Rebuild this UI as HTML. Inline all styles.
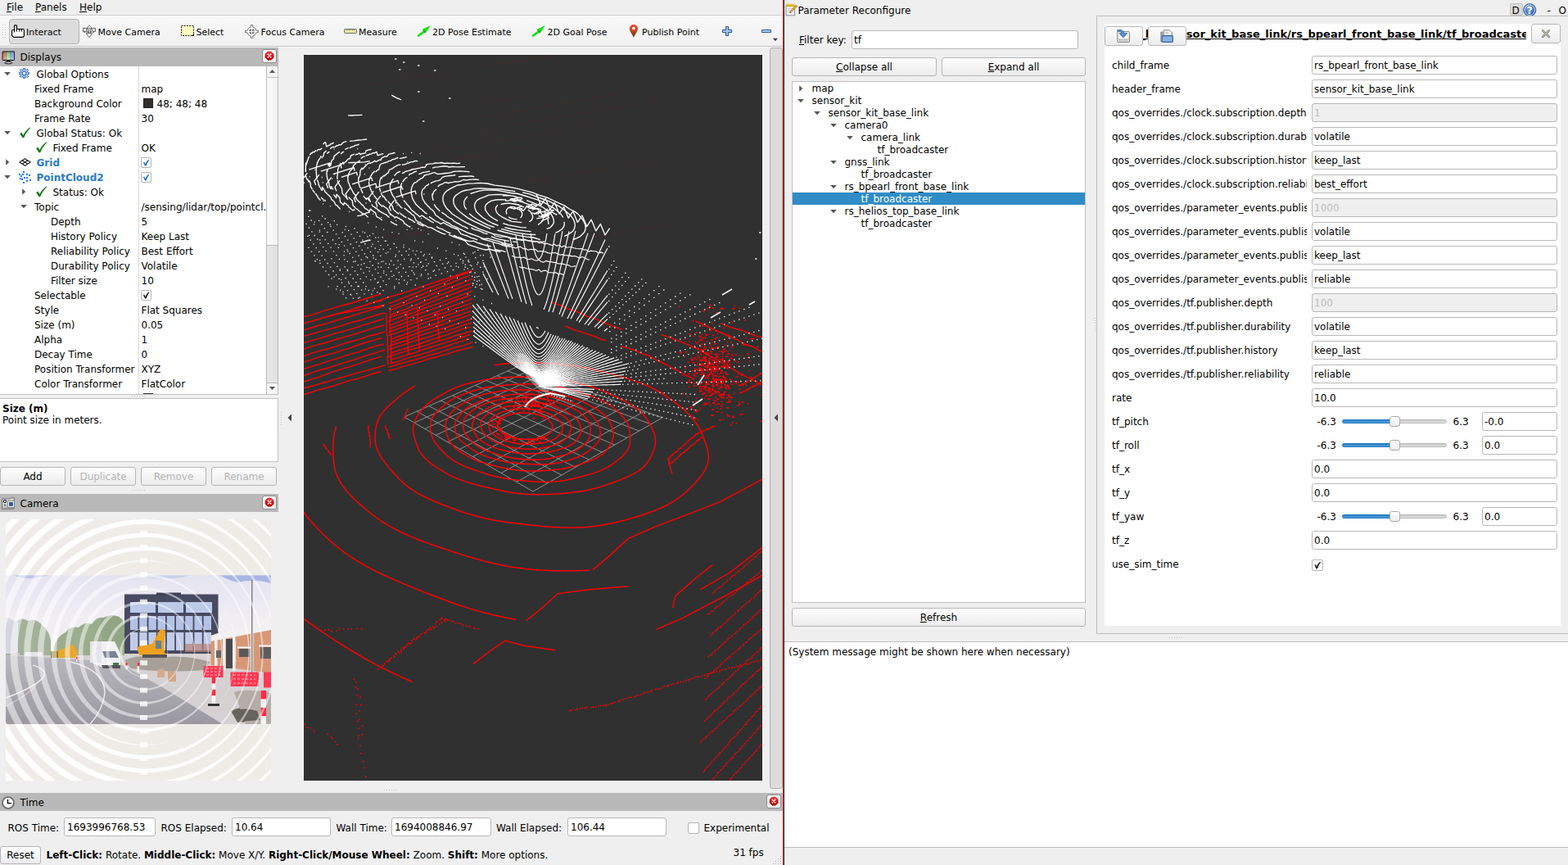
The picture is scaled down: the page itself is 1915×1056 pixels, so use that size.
<!DOCTYPE html>
<html><head><meta charset="utf-8"><title>RViz</title>
<style>
*{box-sizing:border-box;margin:0;padding:0}
html,body{width:1915px;height:1056px;overflow:hidden;background:#efefef}
body{font-family:"DejaVu Sans","Liberation Sans",sans-serif;font-size:12px;color:#000;position:relative;line-height:15px}
.a{position:absolute}
.t{position:absolute;white-space:nowrap;height:16px;line-height:16px}
.hdr{position:absolute;background:#b9b9b9;height:22px}
.btn{position:absolute;border:1px solid #b6b6b6;border-radius:3px;background:linear-gradient(#fdfdfd,#ececec);text-align:center;white-space:nowrap}
.btn.dis{color:#b4b4b4}
.inp{position:absolute;border:1px solid #b8b8b8;border-radius:3px;background:#fff;white-space:nowrap;overflow:hidden;padding-left:2px}
.inp.dis{background:#efefef;color:#bebebe}
.cb{position:absolute;width:13px;height:13px;border:1px solid #b4b4b4;border-radius:2px;background:#fff}
.closeb{position:absolute;width:17px;height:17px;border:1px solid #aaa;border-radius:3px;background:linear-gradient(#fff,#ececec)}
u{text-decoration:underline;text-underline-offset:1px}
b{font-weight:bold}
</style></head><body>
<div class="a" style="left:0;top:18px;width:956px;height:1px;background:#cfcfcf"></div>
<div class="t" style="left:8px;top:1px;"><u>F</u>ile</div>
<div class="t" style="left:43px;top:1px;"><u>P</u>anels</div>
<div class="t" style="left:97px;top:1px;"><u>H</u>elp</div>
<div class="a" style="left:0;top:19px;width:956px;height:37px;background:linear-gradient(#f8f8f8,#f1f1f1)"></div>
<div class="a" style="left:0;top:56px;width:956px;height:1px;background:#c3c3c3"></div>
<div class="a" style="left:0;top:57px;width:956px;height:1px;background:#f6f6f6"></div>
<svg class="a" style="left:2px;top:29px" width="6" height="18"><rect x="1" y="1" width="1" height="1" fill="#c4c4c4"/><rect x="4" y="1" width="1" height="1" fill="#c4c4c4"/><rect x="1" y="4" width="1" height="1" fill="#c4c4c4"/><rect x="4" y="4" width="1" height="1" fill="#c4c4c4"/><rect x="1" y="7" width="1" height="1" fill="#c4c4c4"/><rect x="4" y="7" width="1" height="1" fill="#c4c4c4"/><rect x="1" y="10" width="1" height="1" fill="#c4c4c4"/><rect x="4" y="10" width="1" height="1" fill="#c4c4c4"/><rect x="1" y="13" width="1" height="1" fill="#c4c4c4"/><rect x="4" y="13" width="1" height="1" fill="#c4c4c4"/><rect x="1" y="16" width="1" height="1" fill="#c4c4c4"/><rect x="4" y="16" width="1" height="1" fill="#c4c4c4"/></svg>
<div class="a" style="left:11px;top:23px;width:86px;height:31px;background:#dcdcdc;border:1px solid #b4b4b4;border-radius:4px"></div>
<div class="t" style="left:32px;top:31.700000000000003px;font-size:11px">Interact</div>
<div class="t" style="left:119.5px;top:31.700000000000003px;font-size:11px">Move Camera</div>
<div class="t" style="left:239.5px;top:31.700000000000003px;font-size:11px">Select</div>
<div class="t" style="left:318.5px;top:31.700000000000003px;font-size:11px">Focus Camera</div>
<div class="t" style="left:438px;top:31.700000000000003px;font-size:11px">Measure</div>
<div class="t" style="left:528px;top:31.700000000000003px;font-size:11px">2D Pose Estimate</div>
<div class="t" style="left:668.5px;top:31.700000000000003px;font-size:11px">2D Goal Pose</div>
<div class="t" style="left:784px;top:31.700000000000003px;font-size:11px">Publish Point</div>
<svg class="a" style="left:14px;top:30px" width="16" height="17" ><path d="M3.5 9.5 V1.8 Q3.5 0.6 5 0.6 Q6.5 0.6 6.5 1.8 V5.5 H13.8 Q15.4 5.5 15.4 7 V13.8 L14 15.4 H2.6 L0.6 13.4 V7.6 Q0.6 6.5 1.8 6.5 H3.5" fill="#fff" stroke="#000" stroke-width="1.15" stroke-linejoin="round"/><path d="M6.5 5.5 V8.6 M9.5 5.8 V8.6 M12.5 5.8 V8.6" stroke="#000" stroke-width="1" fill="none"/></svg>
<svg class="a" style="left:101px;top:30px" width="16" height="17" ><path d="M8 0.8 L11.6 5 H9.4 V11 H11.8 L8 15.6 L4.2 11 H6.6 V5 H4.4 Z" fill="#d6d6d6" stroke="#666" stroke-width="0.9"/><path d="M8 1.6 L10.2 4.4 H5.8 Z M8 14.6 L10.4 11.6 H5.6 Z" fill="#fff"/><ellipse cx="8" cy="6.6" rx="4.6" ry="2.4" fill="none" stroke="#333" stroke-width="1" stroke-dasharray="1.6 1"/><path d="M0.6 4.4 H3.4 L4.6 5.4 V7.6 L3.4 8.4 H0.6 Z M15.4 4.4 H12.6 L11.4 5.4 V7.6 L12.6 8.4 H15.4 Z" fill="#fff" stroke="#444" stroke-width="0.9"/><path d="M0.8 8.4 Q8 12.4 15.2 8.4" fill="none" stroke="#444" stroke-width="1" stroke-dasharray="2 1"/></svg>
<svg class="a" style="left:221px;top:30px" width="17" height="15" ><rect x="0.5" y="1.5" width="15" height="12" fill="#fffcc0" stroke="#222" stroke-width="1" stroke-dasharray="2 1.2"/><path d="M16 11 V14 H13 Z" fill="#000"/></svg>
<svg class="a" style="left:299px;top:30px" width="17" height="17" ><path d="M7.3 0.6 H9.7 V3 A5.6 5.6 0 0 1 14 7.3 H16.4 V9.7 H14 A5.6 5.6 0 0 1 9.7 14 V16.4 H7.3 V14 A5.6 5.6 0 0 1 3 9.7 H0.6 V7.3 H3 A5.6 5.6 0 0 1 7.3 3 Z" fill="#fff" stroke="#6e6e6e" stroke-width="1"/><circle cx="8.5" cy="8.5" r="3.4" fill="#777"/><path d="M8.5 4 V13 M4 8.5 H13" stroke="#fff" stroke-width="0.9"/><circle cx="8.5" cy="8.5" r="3.4" fill="none" stroke="#fff" stroke-width="0.5" stroke-dasharray="1 1"/></svg>
<svg class="a" style="left:419px;top:34px" width="18" height="8" ><rect x="0.3" y="0.3" width="17.4" height="7.4" rx="1.5" fill="#fff" opacity="0.9"/><rect x="1.5" y="1.5" width="15" height="5" rx="0.8" fill="#f3eba8" stroke="#666" stroke-width="1"/><path d="M3.5 2 V3.6 M5.5 2 V3.6 M7.5 2 V3.6 M9.5 2 V3.6 M11.5 2 V3.6 M13.5 2 V3.6" stroke="#777" stroke-width="0.8"/></svg>
<svg class="a" style="left:510px;top:30px" width="17" height="15" ><path d="M0.8 13.8 L8.2 8.4" stroke="#0be60b" stroke-width="2.6" stroke-linecap="round"/><path d="M15.8 1 L6.6 5.4 L10.2 9.8 Z" fill="#08e808"/><path d="M6.6 5.4 L10.2 9.8 L9 10.2 L6 6.2 Z" fill="#0a8a0a"/></svg>
<svg class="a" style="left:650px;top:30px" width="17" height="15" ><path d="M0.8 13.8 L8.2 8.4" stroke="#0be60b" stroke-width="2.6" stroke-linecap="round"/><path d="M15.8 1 L6.6 5.4 L10.2 9.8 Z" fill="#08e808"/><path d="M6.6 5.4 L10.2 9.8 L9 10.2 L6 6.2 Z" fill="#0a8a0a"/></svg>
<svg class="a" style="left:768px;top:29px" width="12" height="18" ><defs><linearGradient id="pg" x1="0" y1="0" x2="0" y2="1"><stop offset="0" stop-color="#ec4a2c"/><stop offset="0.45" stop-color="#c84a2a"/><stop offset="1" stop-color="#4a3808"/></linearGradient></defs><path d="M5.9 16.8 C4.6 13 0.8 9.6 0.8 6 A5.1 5.1 0 0 1 11 6 C11 9.6 7.2 13 5.9 16.8 Z" fill="url(#pg)"/><circle cx="5.9" cy="5.6" r="1.8" fill="#fff"/></svg>
<svg class="a" style="left:881px;top:31px" width="14" height="14" ><path d="M5.5 1.5 H8.5 V5.5 H12.5 V8.5 H8.5 V12.5 H5.5 V8.5 H1.5 V5.5 H5.5 Z" fill="#a8c6ea" stroke="#2d5fa5" stroke-width="1.1" stroke-linejoin="round"/></svg>
<svg class="a" style="left:929px;top:35px" width="14" height="6" ><rect x="1.5" y="1.5" width="11" height="3" rx="0.6" fill="#a8c6ea" stroke="#2d5fa5" stroke-width="1.1"/></svg>
<svg class="a" style="left:943px;top:46px" width="8" height="5" ><path d="M0.8 0.8 H7 L3.9 4.2 Z" fill="#444"/></svg>
<div class="hdr" style="left:0;top:58px;width:340px;height:23px"></div>
<div class="t" style="left:24.5px;top:61.5px;">Displays</div>
<svg class="a" style="left:1.5px;top:61.5px" width="17" height="17" ><defs><linearGradient id="mr" x1="0" y1="0" x2="0.3" y2="1"><stop offset="0" stop-color="#b86060"/><stop offset="1" stop-color="#f49a9a"/></linearGradient><linearGradient id="mg" x1="0" y1="0" x2="0.3" y2="1"><stop offset="0" stop-color="#68b868"/><stop offset="1" stop-color="#a6f4a6"/></linearGradient><linearGradient id="mb" x1="0" y1="0" x2="0.3" y2="1"><stop offset="0" stop-color="#8282cc"/><stop offset="1" stop-color="#b6b6ff"/></linearGradient></defs><rect x="0.6" y="0.6" width="15.4" height="11.4" rx="1.4" fill="#000"/><rect x="1.4" y="1.4" width="4.4" height="9.6" fill="url(#mr)"/><rect x="5.8" y="1.4" width="5" height="9.6" fill="url(#mg)"/><rect x="10.8" y="1.4" width="4.4" height="9.6" fill="url(#mb)"/><path d="M7 12 H9.6 L10 13.4 H6.6 Z" fill="#000"/><ellipse cx="8.3" cy="14.6" rx="4.6" ry="1.3" fill="#eee" stroke="#000" stroke-width="1"/></svg>
<div class="a" style="left:320px;top:60px;width:18px;height:17px;border:1px solid #8c8c8c;border-radius:3px;background:linear-gradient(#fff,#efefef)"></div>
<svg class="a" style="left:323px;top:62px" width="12" height="12" ><defs><linearGradient id="cg" x1="0" y1="0" x2="0" y2="1"><stop offset="0" stop-color="#e85050"/><stop offset="0.5" stop-color="#d41818"/><stop offset="1" stop-color="#b80000"/></linearGradient></defs><path d="M4 1 H8.2 L11.2 4 V8.2 L8.2 11.2 H4 L1 8.2 V4 Z" fill="url(#cg)" stroke="#c01010" stroke-width="0.6"/><path d="M4.3 4.3 L7.9 7.9 M7.9 4.3 L4.3 7.9" stroke="#f4e6e6" stroke-width="1.5" stroke-linecap="round"/></svg>
<div class="a" style="left:0;top:81px;width:340px;height:401px;background:#fff;border-bottom:1px solid #c0c0c0;border-right:1px solid #c0c0c0"></div>
<div class="a" style="left:169px;top:81px;width:1px;height:400px;background:#d8d8d8"></div>
<div class="a" style="left:325px;top:81px;width:15px;height:400px;background:linear-gradient(90deg,#fbfbfb,#f0f0f0);border-left:1px solid #bebebe;border-right:1px solid #bebebe"></div>
<div class="a" style="left:325px;top:80px;width:15px;height:15px;background:#f6f6f6;border:1px solid #bebebe"></div>
<div class="a" style="left:325px;top:467px;width:15px;height:15px;background:#f6f6f6;border:1px solid #bebebe"></div>
<div class="a" style="left:325px;top:299px;width:15px;height:169px;background:linear-gradient(90deg,#e8e8e8,#e0e0e0);border:1px solid #b8b8b8"></div>
<svg class="a" style="left:325px;top:81px" width="15" height="400"><path d="M4 8 L7.5 4 L11 8 Z" fill="#555"/><path d="M4 391 L7.5 395 L11 391 Z" fill="#555"/></svg>
<div class="t" style="left:44.5px;top:82.5px;">Global Options</div>
<svg class="a" style="left:3.5px;top:85px" width="10" height="10"><path d="M1.2 3 L8.8 3 L5 7.2 Z" fill="#555"/></svg>
<svg class="a" style="left:22.9px;top:82.9px" width="13" height="13" ><path d="M5.42 0.19 L7.58 0.19 L7.57 1.92 L8.98 2.51 L10.19 1.27 L11.73 2.81 L10.49 4.02 L11.08 5.43 L12.81 5.42 L12.81 7.58 L11.08 7.57 L10.49 8.98 L11.73 10.19 L10.19 11.73 L8.98 10.49 L7.57 11.08 L7.58 12.81 L5.42 12.81 L5.43 11.08 L4.02 10.49 L2.81 11.73 L1.27 10.19 L2.51 8.98 L1.92 7.57 L0.19 7.58 L0.19 5.42 L1.92 5.43 L2.51 4.02 L1.27 2.81 L2.81 1.27 L4.02 2.51 L5.43 1.92 Z" fill="#a9c4e6" stroke="#2d6cc0" stroke-width="1" stroke-linejoin="round"/><circle cx="6.5" cy="6.5" r="2.3" fill="#fff" stroke="#2d6cc0" stroke-width="1.1"/></svg>
<div class="t" style="left:42px;top:100.5px;">Fixed Frame</div>
<div class="t" style="left:172.5px;top:100.5px;">map</div>
<div class="t" style="left:42px;top:118.5px;">Background Color</div>
<div class="t" style="left:191.5px;top:118.5px;">48; 48; 48</div>
<div class="a" style="left:175px;top:120px;width:12px;height:12px;background:#303030;border:1px solid #222"></div>
<div class="t" style="left:42px;top:136.5px;">Frame Rate</div>
<div class="t" style="left:172.5px;top:136.5px;">30</div>
<div class="t" style="left:44.5px;top:154.5px;">Global Status: Ok</div>
<svg class="a" style="left:3.5px;top:157px" width="10" height="10"><path d="M1.2 3 L8.8 3 L5 7.2 Z" fill="#555"/></svg>
<svg class="a" style="left:22.5px;top:155px" width="15" height="14"><path d="M1.2 8.2 L3.2 6.6 L5.4 10 C7.5 5.8 10.3 2.6 13.8 0.6 L14.2 1.2 C10.8 4.2 8.3 8 6.2 13.2 L4.6 13.2 Z" fill="#157a15"/></svg>
<div class="t" style="left:64.5px;top:172.5px;">Fixed Frame</div>
<div class="t" style="left:172.5px;top:172.5px;">OK</div>
<svg class="a" style="left:42.5px;top:173px" width="15" height="14"><path d="M1.2 8.2 L3.2 6.6 L5.4 10 C7.5 5.8 10.3 2.6 13.8 0.6 L14.2 1.2 C10.8 4.2 8.3 8 6.2 13.2 L4.6 13.2 Z" fill="#157a15"/></svg>
<div class="t" style="left:44.5px;top:190.5px;font-weight:bold;color:#2a7bc8;">Grid</div>
<svg class="a" style="left:3.5px;top:193px" width="10" height="10"><path d="M3.2 1.2 L7.2 5 L3.2 8.8 Z" fill="#555"/></svg>
<svg class="a" style="left:22.5px;top:192.5px" width="15" height="10" ><path d="M7.5 0.7 L14.2 5 L7.5 9.3 L0.8 5 Z M4.1 2.85 L10.9 7.15 M10.9 2.85 L4.1 7.15" fill="none" stroke="#222" stroke-width="1.2" stroke-linejoin="round"/></svg>
<div class="cb" style="left:172px;top:191.5px"></div><svg class="a" style="left:172px;top:191.5px" width="13" height="13"><path d="M3 6.2 L4.2 5.4 L5.6 8.2 C6.6 5.6 8 3.8 9.8 2.6 L10.4 3.2 C8.8 5 7.6 7.4 6.6 10.6 L5 10.6 Z" fill="#2a6fc0"/></svg>
<div class="t" style="left:44.5px;top:208.5px;font-weight:bold;color:#2a7bc8;">PointCloud2</div>
<svg class="a" style="left:3.5px;top:211px" width="10" height="10"><path d="M1.2 3 L8.8 3 L5 7.2 Z" fill="#555"/></svg>
<svg class="a" style="left:22px;top:208px" width="17" height="17" ><rect x="5.9" y="0.9" width="2" height="2" fill="#0a78ff"/><rect x="0.9" y="3.9" width="2" height="2" fill="#0a78ff"/><rect x="5.0" y="3.9" width="2" height="2" fill="#0a78ff"/><rect x="9.9" y="3.9" width="2" height="2" fill="#0a78ff"/><rect x="13.0" y="5.0" width="2" height="2" fill="#0a78ff"/><rect x="3.0" y="6.0" width="2" height="2" fill="#0a78ff"/><rect x="7.0" y="8.0" width="2" height="2" fill="#0a78ff"/><rect x="10.0" y="8.0" width="2" height="2" fill="#0a78ff"/><rect x="1.8" y="9.0" width="2" height="2" fill="#0a78ff"/><rect x="4.0" y="10.0" width="2" height="2" fill="#0a78ff"/><rect x="14.0" y="11.0" width="2" height="2" fill="#0a78ff"/><rect x="9.9" y="12.0" width="2" height="2" fill="#0a78ff"/><rect x="5.9" y="14.0" width="2" height="2" fill="#0a78ff"/></svg>
<div class="cb" style="left:172px;top:209.5px"></div><svg class="a" style="left:172px;top:209.5px" width="13" height="13"><path d="M3 6.2 L4.2 5.4 L5.6 8.2 C6.6 5.6 8 3.8 9.8 2.6 L10.4 3.2 C8.8 5 7.6 7.4 6.6 10.6 L5 10.6 Z" fill="#2a6fc0"/></svg>
<div class="t" style="left:64.5px;top:226.5px;">Status: Ok</div>
<svg class="a" style="left:24px;top:229px" width="10" height="10"><path d="M3.2 1.2 L7.2 5 L3.2 8.8 Z" fill="#555"/></svg>
<svg class="a" style="left:42.5px;top:227px" width="15" height="14"><path d="M1.2 8.2 L3.2 6.6 L5.4 10 C7.5 5.8 10.3 2.6 13.8 0.6 L14.2 1.2 C10.8 4.2 8.3 8 6.2 13.2 L4.6 13.2 Z" fill="#157a15"/></svg>
<div class="t" style="left:42px;top:244.5px;">Topic</div>
<div class="t" style="left:172.5px;top:244.5px;">/sensing/lidar/top/pointcl.</div>
<svg class="a" style="left:24px;top:247px" width="10" height="10"><path d="M1.2 3 L8.8 3 L5 7.2 Z" fill="#555"/></svg>
<div class="t" style="left:62px;top:262.5px;">Depth</div>
<div class="t" style="left:172.5px;top:262.5px;">5</div>
<div class="t" style="left:62px;top:280.5px;">History Policy</div>
<div class="t" style="left:172.5px;top:280.5px;">Keep Last</div>
<div class="t" style="left:62px;top:298.5px;">Reliability Policy</div>
<div class="t" style="left:172.5px;top:298.5px;">Best Effort</div>
<div class="t" style="left:62px;top:316.5px;">Durability Policy</div>
<div class="t" style="left:172.5px;top:316.5px;">Volatile</div>
<div class="t" style="left:62px;top:334.5px;">Filter size</div>
<div class="t" style="left:172.5px;top:334.5px;">10</div>
<div class="t" style="left:42px;top:352.5px;">Selectable</div>
<div class="cb" style="left:172px;top:353.5px"></div><svg class="a" style="left:172px;top:353.5px" width="13" height="13"><path d="M3 6.2 L4.2 5.4 L5.6 8.2 C6.6 5.6 8 3.8 9.8 2.6 L10.4 3.2 C8.8 5 7.6 7.4 6.6 10.6 L5 10.6 Z" fill="#111"/></svg>
<div class="t" style="left:42px;top:370.5px;">Style</div>
<div class="t" style="left:172.5px;top:370.5px;">Flat Squares</div>
<div class="t" style="left:42px;top:388.5px;">Size (m)</div>
<div class="t" style="left:172.5px;top:388.5px;">0.05</div>
<div class="t" style="left:42px;top:406.5px;">Alpha</div>
<div class="t" style="left:172.5px;top:406.5px;">1</div>
<div class="t" style="left:42px;top:424.5px;">Decay Time</div>
<div class="t" style="left:172.5px;top:424.5px;">0</div>
<div class="t" style="left:42px;top:442.5px;">Position Transformer</div>
<div class="t" style="left:172.5px;top:442.5px;">XYZ</div>
<div class="t" style="left:42px;top:460.5px;">Color Transformer</div>
<div class="t" style="left:172.5px;top:460.5px;">FlatColor</div>
<div class="a" style="left:175px;top:480px;width:12px;height:1px;background:#333"></div>
<svg class="a" style="left:161px;top:483px" width="18" height="2"><rect x="0" y="0" width="1" height="1" fill="#bdbdbd"/><rect x="3" y="0" width="1" height="1" fill="#bdbdbd"/><rect x="6" y="0" width="1" height="1" fill="#bdbdbd"/><rect x="9" y="0" width="1" height="1" fill="#bdbdbd"/><rect x="12" y="0" width="1" height="1" fill="#bdbdbd"/><rect x="15" y="0" width="1" height="1" fill="#bdbdbd"/></svg>
<div class="a" style="left:0;top:486px;width:340px;height:78px;background:#fff;border:1px solid #c2c2c2;border-left:none"></div>
<div class="t" style="left:3px;top:490.5px;"><b>Size (m)</b></div>
<div class="t" style="left:3px;top:505px;">Point size in meters.</div>
<div class="btn" style="left:0px;top:570px;width:80px;height:23px;line-height:23px">Add</div>
<div class="btn dis" style="left:86px;top:570px;width:80px;height:23px;line-height:23px">Duplicate</div>
<div class="btn dis" style="left:172px;top:570px;width:80px;height:23px;line-height:23px">Remove</div>
<div class="btn dis" style="left:258px;top:570px;width:80px;height:23px;line-height:23px">Rename</div>
<svg class="a" style="left:161px;top:598px" width="18" height="2"><rect x="0" y="0" width="1" height="1" fill="#bdbdbd"/><rect x="3" y="0" width="1" height="1" fill="#bdbdbd"/><rect x="6" y="0" width="1" height="1" fill="#bdbdbd"/><rect x="9" y="0" width="1" height="1" fill="#bdbdbd"/><rect x="12" y="0" width="1" height="1" fill="#bdbdbd"/><rect x="15" y="0" width="1" height="1" fill="#bdbdbd"/></svg>
<div class="hdr" style="left:0;top:603px;width:340px"></div>
<div class="t" style="left:24.5px;top:606.5px;">Camera</div>
<svg class="a" style="left:1.5px;top:606.5px" width="17" height="16" ><defs><linearGradient id="camg" x1="0" y1="0" x2="0.6" y2="1"><stop offset="0" stop-color="#fafafa"/><stop offset="1" stop-color="#a8a8a8"/></linearGradient></defs><path d="M0.6 2 H10.5 L11.5 0.8 H15.4 V13 L14.6 14.2 H0.6 Z" fill="url(#camg)" stroke="#6e6e6e" stroke-width="1"/><rect x="7.4" y="4.4" width="8" height="8" fill="#f4f4f0" stroke="#7a7a7a" stroke-width="0.8"/><rect x="9" y="6" width="4.9" height="4.9" fill="#2a5aa4"/><circle cx="3.9" cy="5" r="1.6" fill="#fff" stroke="#000" stroke-width="1"/><rect x="3" y="9" width="2" height="1.2" fill="#444"/></svg>
<div class="a" style="left:320px;top:605px;width:18px;height:17px;border:1px solid #8c8c8c;border-radius:3px;background:linear-gradient(#fff,#efefef)"></div>
<svg class="a" style="left:323px;top:607px" width="12" height="12" ><defs><linearGradient id="cg" x1="0" y1="0" x2="0" y2="1"><stop offset="0" stop-color="#e85050"/><stop offset="0.5" stop-color="#d41818"/><stop offset="1" stop-color="#b80000"/></linearGradient></defs><path d="M4 1 H8.2 L11.2 4 V8.2 L8.2 11.2 H4 L1 8.2 V4 Z" fill="url(#cg)" stroke="#c01010" stroke-width="0.6"/><path d="M4.3 4.3 L7.9 7.9 M7.9 4.3 L4.3 7.9" stroke="#f4e6e6" stroke-width="1.5" stroke-linecap="round"/></svg>
<svg class="a" style="left:7px;top:634px" width="324" height="319" viewBox="7 634 324 319">
<defs><linearGradient id="sky" x1="0" y1="0" x2="0" y2="1"><stop offset="0" stop-color="#dcdcec"/><stop offset="0.5" stop-color="#ece8f0"/><stop offset="1" stop-color="#f0ecf0"/></linearGradient><linearGradient id="road" x1="0" y1="0" x2="0" y2="1"><stop offset="0" stop-color="#a6a4ac"/><stop offset="1" stop-color="#7e7c86"/></linearGradient><clipPath id="pc"><rect x="7" y="702.5" width="324" height="181.5"/></clipPath></defs>
<rect x="7" y="634" width="324" height="319" fill="#efece8"/>
<g clip-path="url(#pc)">
<rect x="7" y="702" width="324" height="100" fill="url(#sky)"/>
<path d="M268 702 H331 V712 Q310 706 290 711 Q278 708 268 702 Z" fill="#8fa2dc"/><path d="M172 702 H232 Q220 707 200 706 Q184 708 172 702 Z" fill="#b8c4e6"/><path d="M14 702 H60 Q40 707 30 706 Z" fill="#a8b6e0"/>
<path d="M7 800 H331 V884 H7 Z" fill="#c9c4c6"/>
<path d="M7 800 L112 806 L150 812 L200 840 L272 884 H7 Z" fill="url(#road)"/>
<path d="M7 762 Q14 756 20 760 Q26 752 34 758 Q44 754 52 764 Q60 770 62 782 L62 800 H7 Z" fill="#8a9c7c"/>
<path d="M66 790 Q70 776 80 772 Q86 764 96 766 Q104 758 112 762 Q118 752 128 754 Q136 748 146 754 Q154 760 152 776 L152 800 H66 Z" fill="#80966e"/>
<path d="M122 758 Q130 750 140 752 Q150 752 152 764 L152 790 L126 790 Z" fill="#748c62"/>
<path d="M7 753 L22 760 V798 H7 Z" fill="#c8ccd8"/>
<rect x="7" y="702" width="324" height="182" fill="#fff" opacity="0.22"/>
<rect x="152" y="725.5" width="114.5" height="73" fill="#474a60"/><rect x="191" y="723.5" width="30" height="3" fill="#3e4054"/>
<rect x="159" y="735" width="31" height="13" fill="#bccaea"/>
<rect x="193" y="735" width="31" height="13" fill="#bccaea"/>
<rect x="227" y="735" width="32" height="13" fill="#bccaea"/>
<rect x="159.0" y="752" width="9.4" height="17" fill="#b4c2e6"/><rect x="159.0" y="772" width="9.4" height="22" fill="#c2cce8"/>
<rect x="170.2" y="752" width="9.4" height="17" fill="#b4c2e6"/><rect x="170.2" y="772" width="9.4" height="22" fill="#c2cce8"/>
<rect x="181.4" y="752" width="9.4" height="17" fill="#b4c2e6"/><rect x="181.4" y="772" width="9.4" height="22" fill="#c2cce8"/>
<rect x="192.6" y="752" width="9.4" height="17" fill="#b4c2e6"/><rect x="192.6" y="772" width="9.4" height="22" fill="#c2cce8"/>
<rect x="203.8" y="752" width="9.4" height="17" fill="#b4c2e6"/><rect x="203.8" y="772" width="9.4" height="22" fill="#c2cce8"/>
<rect x="215.0" y="752" width="9.4" height="17" fill="#b4c2e6"/><rect x="215.0" y="772" width="9.4" height="22" fill="#c2cce8"/>
<rect x="226.2" y="752" width="9.4" height="17" fill="#b4c2e6"/><rect x="226.2" y="772" width="9.4" height="22" fill="#c2cce8"/>
<rect x="237.4" y="752" width="9.4" height="17" fill="#b4c2e6"/><rect x="237.4" y="772" width="9.4" height="22" fill="#c2cce8"/>
<rect x="248.6" y="752" width="9.4" height="17" fill="#b4c2e6"/><rect x="248.6" y="772" width="9.4" height="22" fill="#c2cce8"/>
<rect x="152" y="798" width="106" height="6" fill="#d8d4d4"/>
<rect x="226" y="786" width="32" height="10" fill="#b88078" opacity="0.7"/>
<path d="M257.5 776 L331 752 V822 L257.5 812 Z" fill="#d89878"/>
<path d="M257.5 776 L331 751 V769 L257.5 783 Z" fill="#f2f0f0"/>
<rect x="262" y="780.2" width="3.5" height="37.1" fill="#f0eeee"/>
<rect x="272" y="778.6" width="3.5" height="39.3" fill="#f0eeee"/>
<rect x="284" y="776.7" width="3.5" height="41.9" fill="#f0eeee"/>
<rect x="306" y="773.2" width="3.5" height="46.8" fill="#f0eeee"/>
<rect x="276" y="780" width="8" height="36" fill="#4a4a50"/><rect x="292" y="792" width="13" height="10" fill="#5a5a58"/><rect x="318" y="790" width="13" height="14" fill="#5e5e5c"/><rect x="264" y="794" width="6" height="9" fill="#666"/>
<rect x="290" y="789.5" width="16" height="2" fill="#f4f4f4"/><rect x="316" y="787.5" width="15" height="2" fill="#f4f4f4"/>
<rect x="307.3" y="708" width="1" height="113" fill="#555"/>
<path d="M152 806 Q170 798 200 802 Q230 800 256 808 L250 818 Q200 822 160 816 Z" fill="#a8a098"/>
<path d="M282 868 Q296 860 316 866 L320 880 L290 882 Z" fill="#6e6a62"/><path d="M286 845 Q300 840 331 846 V884 H300 Z" fill="#b4aca6"/><path d="M284 870 Q296 862 314 868 L318 879 L292 881 Z" fill="#66625c"/>
<path d="M167 790 L186 786 L196 768 L202 770 L200 790 L202 800 H170 Z" fill="#eda11e"/><rect x="190" y="782" width="7" height="10" fill="#6a8090"/><rect x="174" y="799" width="30" height="4" fill="#555"/>
<path d="M70 794 L78 792 L88 786 L95 796 L92 803 H64 L64 796 Z" fill="#e8a828"/><rect x="62" y="795" width="9" height="8" fill="#8a7020"/>
<path d="M110 783 H140 L147 798 V814 H123 L110 808 Z" fill="#f1f1f5"/><path d="M125 795 H141 L145 803 H128 Z" fill="#7a8494"/><rect x="110" y="783" width="14" height="26" fill="#e4e4ec"/><path d="M124 812 H147 V816 H126 Z" fill="#55555c"/><rect x="138" y="809" width="7" height="3" fill="#4a7a4a"/>
<rect x="30" y="796" width="22" height="5" rx="2" fill="#e4e4ea"/><rect x="14" y="797" width="10" height="4" fill="#c8c8d0"/>
<rect x="192" y="817" width="9" height="10" fill="#d4ab8c"/><rect x="205" y="819" width="10" height="13" fill="#d2a684"/>
<rect x="248.5" y="813" width="24" height="14" fill="#ff3854"/><rect x="281.5" y="820.5" width="34.5" height="17.5" fill="#ff3854"/><rect x="322" y="820.5" width="9" height="19" fill="#ff3854"/>
<path d="M252 816 h17 M252 820 h17 M252 824 h17 M285 824 h27 M285 829 h27 M285 834 h27" stroke="#ffb0b8" stroke-width="1.2" stroke-dasharray="3 2"/>
<rect x="258.6" y="827" width="4.6" height="33" fill="#f6f2f2"/><rect x="258.6" y="827.0" width="4.6" height="7.4" fill="#ff2a44"/><rect x="258.6" y="841.7" width="4.6" height="7.4" fill="#ff2a44"/>
<rect x="254" y="859" width="14" height="3" fill="#333"/>
<rect x="318.5" y="843" width="6.5" height="41" fill="#f6f2f2"/><rect x="318.5" y="843.0" width="6.5" height="10.4" fill="#ff2a44"/><rect x="318.5" y="863.8" width="6.5" height="10.4" fill="#ff2a44"/>
<rect x="167.5" y="809" width="2.6" height="12" fill="#f6f2f2"/><rect x="167.5" y="809.0" width="2.6" height="4.2" fill="#ff2a44"/>
<rect x="153.5" y="809" width="2.2" height="8" fill="#f6f2f2"/><rect x="153.5" y="809.0" width="2.2" height="3.5" fill="#ff2a44"/>
<rect x="93" y="802" width="1.6" height="6" fill="#f6f2f2"/><rect x="93" y="802.0" width="1.6" height="2.6" fill="#ff2a44"/>
<path d="M7 852 Q40 840 52 828 Q60 818 40 812" stroke="#f4f2f4" stroke-width="1.3" fill="none"/><path d="M7 862 Q36 848 46 834" stroke="#e8d8d0" stroke-width="1" fill="none"/><path d="M86 808 Q128 818 128 846 Q126 866 110 884" stroke="#eeeaee" stroke-width="1.4" fill="none"/>
</g>
<defs><clipPath id="pco"><path d="M7 634 H331 V702.5 H7 Z M7 884 H331 V953 H7 Z"/></clipPath></defs>
<path d="M146.1 797.0a29.4 29.4 0 1 0 58.8 0a29.4 29.4 0 1 0 -58.8 0Z M149.4 797.0a27.4 27.4 0 1 1 54.7 0a27.4 27.4 0 1 1 -54.7 0Z M129.4 797.0a46.1 46.1 0 1 0 92.2 0a46.1 46.1 0 1 0 -92.2 0Z M133.4 797.0a43.6 43.6 0 1 1 87.3 0a43.6 43.6 0 1 1 -87.3 0Z M112.7 797.0a62.8 62.8 0 1 0 125.6 0a62.8 62.8 0 1 0 -125.6 0Z M117.4 797.0a59.9 59.9 0 1 1 119.8 0a59.9 59.9 0 1 1 -119.8 0Z M96.0 797.0a79.5 79.5 0 1 0 159.0 0a79.5 79.5 0 1 0 -159.0 0Z M101.3 797.0a76.2 76.2 0 1 1 152.4 0a76.2 76.2 0 1 1 -152.4 0Z M79.3 797.0a96.2 96.2 0 1 0 192.4 0a96.2 96.2 0 1 0 -192.4 0Z M85.3 797.0a92.5 92.5 0 1 1 185.0 0a92.5 92.5 0 1 1 -185.0 0Z M62.6 797.0a112.9 112.9 0 1 0 225.8 0a112.9 112.9 0 1 0 -225.8 0Z M69.3 797.0a108.8 108.8 0 1 1 217.5 0a108.8 108.8 0 1 1 -217.5 0Z M45.9 797.0a129.6 129.6 0 1 0 259.2 0a129.6 129.6 0 1 0 -259.2 0Z M53.3 797.0a125.0 125.0 0 1 1 250.1 0a125.0 125.0 0 1 1 -250.1 0Z M29.2 797.0a146.3 146.3 0 1 0 292.6 0a146.3 146.3 0 1 0 -292.6 0Z M37.3 797.0a141.3 141.3 0 1 1 282.6 0a141.3 141.3 0 1 1 -282.6 0Z M12.5 797.0a163.0 163.0 0 1 0 326.0 0a163.0 163.0 0 1 0 -326.0 0Z M21.2 797.0a157.6 157.6 0 1 1 315.2 0a157.6 157.6 0 1 1 -315.2 0Z M-4.2 797.0a179.7 179.7 0 1 0 359.4 0a179.7 179.7 0 1 0 -359.4 0Z M4.5 797.0a174.3 174.3 0 1 1 348.6 0a174.3 174.3 0 1 1 -348.6 0Z M-20.9 797.0a196.4 196.4 0 1 0 392.8 0a196.4 196.4 0 1 0 -392.8 0Z M-12.2 797.0a191.0 191.0 0 1 1 382.0 0a191.0 191.0 0 1 1 -382.0 0Z M-37.6 797.0a213.1 213.1 0 1 0 426.2 0a213.1 213.1 0 1 0 -426.2 0Z M-28.9 797.0a207.7 207.7 0 1 1 415.4 0a207.7 207.7 0 1 1 -415.4 0Z M-54.3 797.0a229.8 229.8 0 1 0 459.6 0a229.8 229.8 0 1 0 -459.6 0Z M-45.6 797.0a224.4 224.4 0 1 1 448.8 0a224.4 224.4 0 1 1 -448.8 0Z M-71.0 797.0a246.5 246.5 0 1 0 493.0 0a246.5 246.5 0 1 0 -493.0 0Z M-62.3 797.0a241.1 241.1 0 1 1 482.2 0a241.1 241.1 0 1 1 -482.2 0Z M-87.7 797.0a263.2 263.2 0 1 0 526.4 0a263.2 263.2 0 1 0 -526.4 0Z M-79.0 797.0a257.8 257.8 0 1 1 515.6 0a257.8 257.8 0 1 1 -515.6 0Z M-104.4 797.0a279.9 279.9 0 1 0 559.8 0a279.9 279.9 0 1 0 -559.8 0Z M-95.7 797.0a274.5 274.5 0 1 1 549.0 0a274.5 274.5 0 1 1 -549.0 0Z M-121.1 797.0a296.6 296.6 0 1 0 593.2 0a296.6 296.6 0 1 0 -593.2 0Z M-112.4 797.0a291.2 291.2 0 1 1 582.4 0a291.2 291.2 0 1 1 -582.4 0Z" fill="#fff" fill-rule="evenodd" opacity="0.5" clip-path="url(#pc)"/>
<path d="M146.1 797.0a29.4 29.4 0 1 0 58.8 0a29.4 29.4 0 1 0 -58.8 0Z M149.4 797.0a27.4 27.4 0 1 1 54.7 0a27.4 27.4 0 1 1 -54.7 0Z M129.4 797.0a46.1 46.1 0 1 0 92.2 0a46.1 46.1 0 1 0 -92.2 0Z M133.4 797.0a43.6 43.6 0 1 1 87.3 0a43.6 43.6 0 1 1 -87.3 0Z M112.7 797.0a62.8 62.8 0 1 0 125.6 0a62.8 62.8 0 1 0 -125.6 0Z M117.4 797.0a59.9 59.9 0 1 1 119.8 0a59.9 59.9 0 1 1 -119.8 0Z M96.0 797.0a79.5 79.5 0 1 0 159.0 0a79.5 79.5 0 1 0 -159.0 0Z M101.3 797.0a76.2 76.2 0 1 1 152.4 0a76.2 76.2 0 1 1 -152.4 0Z M79.3 797.0a96.2 96.2 0 1 0 192.4 0a96.2 96.2 0 1 0 -192.4 0Z M85.3 797.0a92.5 92.5 0 1 1 185.0 0a92.5 92.5 0 1 1 -185.0 0Z M62.6 797.0a112.9 112.9 0 1 0 225.8 0a112.9 112.9 0 1 0 -225.8 0Z M69.3 797.0a108.8 108.8 0 1 1 217.5 0a108.8 108.8 0 1 1 -217.5 0Z M45.9 797.0a129.6 129.6 0 1 0 259.2 0a129.6 129.6 0 1 0 -259.2 0Z M53.3 797.0a125.0 125.0 0 1 1 250.1 0a125.0 125.0 0 1 1 -250.1 0Z M29.2 797.0a146.3 146.3 0 1 0 292.6 0a146.3 146.3 0 1 0 -292.6 0Z M37.3 797.0a141.3 141.3 0 1 1 282.6 0a141.3 141.3 0 1 1 -282.6 0Z M12.5 797.0a163.0 163.0 0 1 0 326.0 0a163.0 163.0 0 1 0 -326.0 0Z M21.2 797.0a157.6 157.6 0 1 1 315.2 0a157.6 157.6 0 1 1 -315.2 0Z M-4.2 797.0a179.7 179.7 0 1 0 359.4 0a179.7 179.7 0 1 0 -359.4 0Z M4.5 797.0a174.3 174.3 0 1 1 348.6 0a174.3 174.3 0 1 1 -348.6 0Z M-20.9 797.0a196.4 196.4 0 1 0 392.8 0a196.4 196.4 0 1 0 -392.8 0Z M-12.2 797.0a191.0 191.0 0 1 1 382.0 0a191.0 191.0 0 1 1 -382.0 0Z M-37.6 797.0a213.1 213.1 0 1 0 426.2 0a213.1 213.1 0 1 0 -426.2 0Z M-28.9 797.0a207.7 207.7 0 1 1 415.4 0a207.7 207.7 0 1 1 -415.4 0Z M-54.3 797.0a229.8 229.8 0 1 0 459.6 0a229.8 229.8 0 1 0 -459.6 0Z M-45.6 797.0a224.4 224.4 0 1 1 448.8 0a224.4 224.4 0 1 1 -448.8 0Z M-71.0 797.0a246.5 246.5 0 1 0 493.0 0a246.5 246.5 0 1 0 -493.0 0Z M-62.3 797.0a241.1 241.1 0 1 1 482.2 0a241.1 241.1 0 1 1 -482.2 0Z M-87.7 797.0a263.2 263.2 0 1 0 526.4 0a263.2 263.2 0 1 0 -526.4 0Z M-79.0 797.0a257.8 257.8 0 1 1 515.6 0a257.8 257.8 0 1 1 -515.6 0Z M-104.4 797.0a279.9 279.9 0 1 0 559.8 0a279.9 279.9 0 1 0 -559.8 0Z M-95.7 797.0a274.5 274.5 0 1 1 549.0 0a274.5 274.5 0 1 1 -549.0 0Z M-121.1 797.0a296.6 296.6 0 1 0 593.2 0a296.6 296.6 0 1 0 -593.2 0Z M-112.4 797.0a291.2 291.2 0 1 1 582.4 0a291.2 291.2 0 1 1 -582.4 0Z" fill="#fff" fill-rule="evenodd" opacity="0.92" clip-path="url(#pco)"/>
<rect x="171.0" y="781.8" width="9" height="6" fill="#fff" opacity="0.8"/><rect x="171.0" y="806.2" width="9" height="6" fill="#fff" opacity="0.8"/><rect x="171.0" y="765.1" width="9" height="6" fill="#fff" opacity="0.8"/><rect x="171.0" y="822.9" width="9" height="6" fill="#fff" opacity="0.8"/><rect x="171.0" y="748.4" width="9" height="6" fill="#fff" opacity="0.8"/><rect x="171.0" y="839.6" width="9" height="6" fill="#fff" opacity="0.8"/><rect x="171.0" y="731.7" width="9" height="6" fill="#fff" opacity="0.8"/><rect x="171.0" y="856.3" width="9" height="6" fill="#fff" opacity="0.8"/><rect x="171.0" y="715.0" width="9" height="6" fill="#fff" opacity="0.8"/><rect x="171.0" y="873.0" width="9" height="6" fill="#fff" opacity="0.8"/><rect x="171.0" y="698.3" width="9" height="6" fill="#fff" opacity="0.8"/><rect x="171.0" y="889.7" width="9" height="6" fill="#fff" opacity="0.8"/><rect x="171.0" y="681.6" width="9" height="6" fill="#fff" opacity="0.8"/><rect x="171.0" y="906.4" width="9" height="6" fill="#fff" opacity="0.8"/><rect x="171.0" y="664.9" width="9" height="6" fill="#fff" opacity="0.8"/><rect x="171.0" y="923.1" width="9" height="6" fill="#fff" opacity="0.8"/><rect x="171.0" y="648.2" width="9" height="6" fill="#fff" opacity="0.8"/><rect x="171.0" y="939.8" width="9" height="6" fill="#fff" opacity="0.8"/><rect x="171.0" y="631.5" width="9" height="6" fill="#fff" opacity="0.8"/>
</svg>
<svg class="a" style="left:343px;top:503px" width="2" height="18"><rect y="0" x="0" width="1" height="1" fill="#bdbdbd"/><rect y="3" x="0" width="1" height="1" fill="#bdbdbd"/><rect y="6" x="0" width="1" height="1" fill="#bdbdbd"/><rect y="9" x="0" width="1" height="1" fill="#bdbdbd"/><rect y="12" x="0" width="1" height="1" fill="#bdbdbd"/><rect y="15" x="0" width="1" height="1" fill="#bdbdbd"/></svg>
<svg class="a" style="left:350px;top:504px" width="8" height="12"><path d="M6 1.5 L1.5 6 L6 10.5 Z" fill="#444"/></svg>
<svg class="a" style="left:371px;top:67px;background:#303030" width="560" height="886" viewBox="371 67 560 886">
<path d="M493.7 509.0 L632.7 447.3 M493.7 509.0 L650.9 600.0 M505.9 516.1 L646.8 452.3 M508.9 502.2 L668.7 589.9 M518.8 523.5 L661.6 457.5 M523.8 495.6 L686.0 580.0 M532.3 531.3 L677.0 463.0 M538.4 489.1 L702.8 570.4 M546.5 539.6 L693.2 468.8 M552.7 482.8 L719.2 561.1 M561.6 548.3 L710.1 474.8 M566.7 476.6 L735.2 552.0 M577.4 557.5 L727.9 481.1 M580.5 470.5 L750.7 543.1 M594.2 567.2 L746.6 487.8 M593.9 464.5 L765.8 534.5 M612.0 577.5 L766.3 494.7 M607.1 458.7 L780.6 526.1 M630.8 588.4 L787.1 502.1 M620.0 452.9 L795.0 517.9 M650.9 600.0 L809.0 509.9 M632.7 447.3 L809.0 509.9" stroke="#9a9a9a" stroke-width="0.9" fill="none"/>
<path d="M667.1 531.8 L667.6 531.4 L668.2 531.1 L668.7 530.7 L669.2 530.4 L669.6 530.0 L670.1 529.7 L670.5 529.3 L671.0 528.9 L671.4 528.5 L671.8 528.2 L672.2 527.8 L672.6 527.4 L673.0 527.0 L673.3 526.6 L673.6 526.2 L673.9 525.8 L674.2 525.4 L674.4 525.0 L674.6 524.6 L674.7 524.2 L674.8 523.7 L674.9 523.3 L674.9 522.9 L674.9 522.4 L674.9 522.0 L674.9 521.6 L674.9 521.1 L674.8 520.7 L674.8 520.3 L674.7 519.9 L674.6 519.4 L674.5 519.0 L674.3 518.6 L674.2 518.2 L674.0 517.7 L673.8 517.3 L673.5 516.9 L673.2 516.5 L672.9 516.1 L672.6 515.7 L672.3 515.3 L671.9 514.9 L671.5 514.5 L671.2 514.1 L670.8 513.7 L670.4 513.3 L670.0 512.9 L669.6 512.5 L669.2 512.2 L668.7 511.8 L668.3 511.4 L667.8 511.0 L667.3 510.7 L666.7 510.3 L666.1 510.0 L665.5 509.7 L664.9 509.4 L664.3 509.1 L663.6 508.8 L662.9 508.5 L662.2 508.2 L661.5 507.9 L660.8 507.7 L660.1 507.4 L659.3 507.2 L658.6 506.9 L657.9 506.7 L657.1 506.5 L656.4 506.2 L655.6 506.0 L654.8 505.8 L654.0 505.6 L653.2 505.4 L652.4 505.3 L651.6 505.1 L650.8 505.0 L649.9 504.9 L649.1 504.7 L648.3 504.6 L647.4 504.5 L646.6 504.4 L645.8 504.3 L644.9 504.2 L644.1 504.2 L643.2 504.1 L642.4 504.0 L641.5 504.0 L640.7 503.9 L639.8 503.9 L638.9 503.9 L638.1 503.9 L637.3 503.9 L636.4 504.0 L635.6 504.0 L634.8 504.1 L633.9 504.2 L633.1 504.3 L632.3 504.4 L631.5 504.5 L630.8 504.6 L630.0 504.7 L629.2 504.9 L628.4 505.0 L627.6 505.1 L626.9 505.3 L626.1 505.4 L625.4 505.6 L624.6 505.7 L623.9 505.9 L623.2 506.1 L622.5 506.3 L621.8 506.5 L621.1 506.7 L620.5 507.0 L619.9 507.2 L619.2 507.4 L618.6 507.7 L618.0 508.0 L617.4 508.2 L616.8 508.5 L616.2 508.7 L615.6 509.0 L615.0 509.3 L614.5 509.6 L613.9 509.9 L613.4 510.2 L612.9 510.5 L612.5 510.9 L612.1 511.2 L611.7 511.5 L611.3 511.9 L610.9 512.3 L610.6 512.6 L610.3 513.0 L610.0 513.4 L609.8 513.8 L609.5 514.1 L609.3 514.5 L609.0 514.9 L608.8 515.3 L608.5 515.7 L608.3 516.1 L608.1 516.5 L608.0 516.9 L607.8 517.3 L607.7 517.7 L607.6 518.1 L607.5 518.5 L607.5 518.9 L607.5 519.4 L607.5 519.8 L607.6 520.2 L607.7 520.6 L607.8 521.0 L607.9 521.5 L608.0 521.9 L608.1 522.3 L608.3 522.7 L608.5 523.1 L608.7 523.6 L608.9 524.0 L609.2 524.4 L609.5 524.8 L609.8 525.2 L610.2 525.6 L610.6 526.0 L611.0 526.4 L611.5 526.8 L612.0 527.2 L612.5 527.5 L613.0 527.9 L613.5 528.3 L614.1 528.6 L614.6 529.0 L615.2 529.3 L615.7 529.7 L616.3 530.0 L616.9 530.3 L617.5 530.7 L618.1 531.0 L618.7 531.3 L619.4 531.7 L620.0 532.0 L620.7 532.3 L621.5 532.6 L622.2 532.8 L622.9 533.1 L623.7 533.3 L624.5 533.6 L625.3 533.8 L626.1 534.0 L626.9 534.3 L627.7 534.5 L628.6 534.7 L629.4 534.9 L630.2 535.1 L631.1 535.2 L632.0 535.4 L632.8 535.6 L633.7 535.7 L634.6 535.8 L635.5 535.9 L636.4 536.0 L637.3 536.1 L638.2 536.2 L639.1 536.2 L640.0 536.2 L641.0 536.3 L641.9 536.3 L642.8 536.3 L643.7 536.3 L644.6 536.3 L645.5 536.3 L646.4 536.3 L647.3 536.3 L648.2 536.3 L649.2 536.3 L650.1 536.2 L651.0 536.2 L651.9 536.1 L652.8 536.0 L653.6 535.9 L654.5 535.8 L655.4 535.6 L656.2 535.5 L657.0 535.3 L657.8 535.1 L658.6 534.9 L659.4 534.7 L660.2 534.5 L660.9 534.2 L661.7 534.0 L662.4 533.8 L663.2 533.5 L663.9 533.3 L664.6 533.0 L665.2 532.7 L665.9 532.4 L666.5 532.1 L667.1 531.8 M676.7 536.2 L677.5 535.8 L678.3 535.3 L679.0 534.9 L679.7 534.4 L680.3 533.9 L680.9 533.4 L681.4 532.8 L682.0 532.3 L682.5 531.8 L682.9 531.3 L683.4 530.7 L683.8 530.2 L684.3 529.6 L684.7 529.1 L685.1 528.6 L685.5 528.0 L685.8 527.5 L686.1 526.9 L686.4 526.3 L686.6 525.8 L686.8 525.2 L686.9 524.6 L687.0 524.0 L687.1 523.4 L687.1 522.9 L687.0 522.3 L687.0 521.7 L686.9 521.1 L686.8 520.5 L686.7 519.9 L686.5 519.4 L686.4 518.8 L686.2 518.2 L686.0 517.6 L685.7 517.1 L685.4 516.5 L685.1 515.9 L684.7 515.4 L684.3 514.8 L683.8 514.3 L683.3 513.8 L682.7 513.2 L682.1 512.7 L681.5 512.2 L680.9 511.7 L680.3 511.2 L679.6 510.7 L679.0 510.2 L678.3 509.8 L677.7 509.3 L677.0 508.8 L676.3 508.3 L675.6 507.9 L674.9 507.4 L674.2 507.0 L673.4 506.5 L672.6 506.1 L671.8 505.7 L671.0 505.3 L670.1 504.9 L669.2 504.5 L668.3 504.1 L667.3 503.8 L666.4 503.4 L665.4 503.1 L664.4 502.8 L663.4 502.5 L662.4 502.2 L661.4 501.9 L660.4 501.6 L659.4 501.3 L658.4 501.1 L657.3 500.8 L656.2 500.6 L655.1 500.4 L654.0 500.2 L652.9 500.0 L651.8 499.9 L650.7 499.8 L649.6 499.6 L648.5 499.5 L647.3 499.4 L646.2 499.4 L645.1 499.3 L644.0 499.2 L642.9 499.1 L641.7 499.1 L640.6 499.0 L639.5 499.0 L638.4 499.0 L637.2 498.9 L636.1 498.9 L635.0 498.9 L633.9 499.0 L632.8 499.0 L631.7 499.1 L630.6 499.2 L629.5 499.3 L628.4 499.4 L627.4 499.6 L626.3 499.8 L625.3 499.9 L624.3 500.1 L623.3 500.3 L622.3 500.5 L621.3 500.7 L620.3 500.9 L619.3 501.2 L618.3 501.4 L617.4 501.7 L616.5 501.9 L615.6 502.2 L614.7 502.5 L613.9 502.8 L613.0 503.2 L612.2 503.5 L611.4 503.9 L610.7 504.2 L609.9 504.6 L609.2 505.0 L608.5 505.3 L607.7 505.7 L607.0 506.1 L606.3 506.5 L605.6 506.9 L604.9 507.3 L604.2 507.7 L603.6 508.1 L602.9 508.5 L602.3 509.0 L601.8 509.4 L601.2 509.9 L600.8 510.4 L600.3 510.8 L599.9 511.3 L599.5 511.8 L599.2 512.3 L598.9 512.8 L598.6 513.4 L598.3 513.9 L598.0 514.4 L597.8 514.9 L597.6 515.5 L597.4 516.0 L597.2 516.5 L597.0 517.1 L596.9 517.6 L596.8 518.2 L596.7 518.7 L596.7 519.3 L596.8 519.8 L596.8 520.4 L596.9 520.9 L597.0 521.5 L597.2 522.1 L597.4 522.6 L597.6 523.2 L597.8 523.7 L598.0 524.3 L598.2 524.9 L598.5 525.4 L598.8 526.0 L599.1 526.5 L599.4 527.1 L599.8 527.7 L600.2 528.2 L600.7 528.8 L601.2 529.3 L601.7 529.8 L602.3 530.4 L603.0 530.9 L603.7 531.4 L604.4 531.9 L605.1 532.3 L605.9 532.8 L606.7 533.3 L607.5 533.7 L608.4 534.2 L609.2 534.6 L610.1 535.1 L610.9 535.5 L611.8 535.9 L612.8 536.3 L613.7 536.7 L614.7 537.1 L615.6 537.5 L616.7 537.8 L617.7 538.2 L618.8 538.5 L619.8 538.8 L620.9 539.1 L622.0 539.4 L623.2 539.7 L624.3 539.9 L625.4 540.2 L626.6 540.5 L627.7 540.7 L628.9 540.9 L630.0 541.2 L631.2 541.4 L632.4 541.6 L633.6 541.8 L634.8 541.9 L636.0 542.1 L637.3 542.2 L638.5 542.3 L639.8 542.3 L641.0 542.4 L642.2 542.4 L643.5 542.4 L644.7 542.4 L645.9 542.3 L647.2 542.3 L648.4 542.2 L649.6 542.2 L650.8 542.1 L652.0 542.0 L653.2 541.9 L654.5 541.8 L655.7 541.7 L656.8 541.6 L658.0 541.5 L659.2 541.3 L660.4 541.1 L661.5 540.9 L662.6 540.7 L663.7 540.5 L664.8 540.2 L665.9 539.9 L666.9 539.6 L668.0 539.3 L669.0 539.0 L670.0 538.7 L671.0 538.4 L672.0 538.1 L673.0 537.7 L674.0 537.4 L674.9 537.0 L675.8 536.6 L676.7 536.2 M684.7 539.9 L685.6 539.4 L686.5 538.8 L687.4 538.2 L688.3 537.6 L689.1 537.1 L689.9 536.5 L690.7 535.8 L691.4 535.2 L692.1 534.6 L692.7 534.0 L693.3 533.3 L693.8 532.6 L694.3 532.0 L694.7 531.3 L695.1 530.6 L695.4 529.9 L695.7 529.2 L696.0 528.5 L696.3 527.8 L696.5 527.1 L696.8 526.4 L697.0 525.7 L697.2 525.0 L697.4 524.3 L697.5 523.6 L697.7 522.9 L697.8 522.2 L697.8 521.5 L697.8 520.7 L697.7 520.0 L697.5 519.3 L697.3 518.6 L697.0 517.9 L696.7 517.2 L696.3 516.5 L695.8 515.8 L695.4 515.1 L694.9 514.4 L694.3 513.7 L693.8 513.1 L693.2 512.4 L692.6 511.7 L692.0 511.1 L691.4 510.4 L690.7 509.8 L690.0 509.2 L689.2 508.5 L688.4 507.9 L687.6 507.3 L686.7 506.8 L685.8 506.2 L684.8 505.6 L683.8 505.1 L682.8 504.6 L681.8 504.1 L680.8 503.6 L679.8 503.1 L678.7 502.6 L677.7 502.1 L676.6 501.6 L675.5 501.1 L674.4 500.7 L673.3 500.2 L672.2 499.8 L671.0 499.4 L669.8 499.0 L668.6 498.6 L667.3 498.3 L666.0 497.9 L664.7 497.7 L663.4 497.4 L662.1 497.1 L660.7 496.9 L659.4 496.7 L658.1 496.5 L656.7 496.3 L655.4 496.1 L654.0 495.9 L652.7 495.7 L651.4 495.6 L650.0 495.4 L648.7 495.3 L647.3 495.2 L646.0 495.1 L644.6 495.0 L643.3 494.9 L641.9 494.9 L640.6 494.9 L639.2 494.9 L637.9 494.9 L636.5 494.9 L635.2 494.9 L633.9 495.0 L632.6 495.0 L631.2 495.1 L629.9 495.2 L628.6 495.2 L627.3 495.3 L626.0 495.4 L624.6 495.5 L623.3 495.7 L622.1 495.8 L620.8 496.0 L619.5 496.2 L618.3 496.4 L617.1 496.7 L615.9 497.0 L614.8 497.3 L613.6 497.6 L612.5 497.9 L611.4 498.2 L610.3 498.6 L609.2 498.9 L608.2 499.3 L607.1 499.7 L606.1 500.0 L605.0 500.4 L604.0 500.8 L603.0 501.2 L602.0 501.6 L601.1 502.1 L600.1 502.5 L599.2 503.0 L598.4 503.5 L597.5 504.0 L596.8 504.5 L596.0 505.0 L595.3 505.5 L594.5 506.1 L593.9 506.6 L593.2 507.2 L592.5 507.7 L591.9 508.3 L591.3 508.9 L590.7 509.5 L590.1 510.1 L589.6 510.7 L589.1 511.3 L588.7 511.9 L588.4 512.5 L588.0 513.2 L587.8 513.8 L587.6 514.5 L587.4 515.2 L587.3 515.8 L587.3 516.5 L587.3 517.2 L587.3 517.9 L587.3 518.5 L587.3 519.2 L587.4 519.9 L587.4 520.6 L587.5 521.2 L587.6 521.9 L587.7 522.6 L587.9 523.3 L588.1 524.0 L588.3 524.6 L588.6 525.3 L588.9 526.0 L589.3 526.7 L589.7 527.4 L590.2 528.0 L590.7 528.7 L591.2 529.3 L591.8 530.0 L592.4 530.7 L593.0 531.3 L593.7 532.0 L594.3 532.6 L595.0 533.2 L595.8 533.9 L596.5 534.5 L597.3 535.1 L598.1 535.8 L599.0 536.4 L600.0 536.9 L600.9 537.5 L602.0 538.1 L603.0 538.6 L604.1 539.1 L605.3 539.6 L606.4 540.1 L607.6 540.6 L608.8 541.0 L610.0 541.5 L611.2 542.0 L612.5 542.4 L613.7 542.9 L615.0 543.3 L616.2 543.7 L617.5 544.2 L618.8 544.6 L620.2 545.0 L621.6 545.4 L623.0 545.7 L624.4 546.1 L625.8 546.4 L627.3 546.6 L628.8 546.9 L630.3 547.1 L631.8 547.3 L633.3 547.5 L634.9 547.6 L636.4 547.8 L638.0 547.9 L639.5 548.0 L641.1 548.1 L642.6 548.2 L644.2 548.3 L645.7 548.3 L647.3 548.3 L648.9 548.3 L650.4 548.3 L652.0 548.2 L653.5 548.0 L655.0 547.9 L656.5 547.7 L657.9 547.5 L659.4 547.3 L660.8 547.1 L662.3 546.8 L663.7 546.6 L665.1 546.3 L666.5 546.0 L667.9 545.8 L669.3 545.5 L670.6 545.2 L672.0 544.9 L673.3 544.5 L674.6 544.2 L675.9 543.8 L677.2 543.4 L678.4 543.0 L679.5 542.5 L680.7 542.0 L681.7 541.5 L682.8 541.0 L683.7 540.5 L684.7 539.9 M694.5 544.5 L695.8 543.9 L697.0 543.2 L698.2 542.5 L699.3 541.8 L700.3 541.1 L701.2 540.3 L702.0 539.6 L702.8 538.8 L703.5 538.0 L704.2 537.1 L704.9 536.3 L705.5 535.5 L706.0 534.7 L706.6 533.8 L707.1 533.0 L707.6 532.2 L708.0 531.3 L708.4 530.5 L708.8 529.6 L709.1 528.8 L709.3 527.9 L709.5 527.1 L709.6 526.2 L709.6 525.3 L709.6 524.4 L709.5 523.6 L709.3 522.7 L709.2 521.8 L709.0 521.0 L708.7 520.1 L708.5 519.3 L708.2 518.4 L707.9 517.6 L707.5 516.7 L707.1 515.9 L706.7 515.0 L706.2 514.2 L705.6 513.4 L705.0 512.6 L704.3 511.8 L703.6 511.0 L702.7 510.2 L701.8 509.4 L700.9 508.7 L699.9 508.0 L698.9 507.3 L697.9 506.6 L696.8 505.9 L695.8 505.2 L694.7 504.5 L693.6 503.8 L692.5 503.2 L691.5 502.5 L690.3 501.9 L689.2 501.3 L688.0 500.6 L686.9 500.0 L685.6 499.5 L684.4 498.9 L683.1 498.3 L681.8 497.8 L680.4 497.3 L679.0 496.8 L677.6 496.3 L676.2 495.9 L674.8 495.4 L673.4 495.0 L671.9 494.6 L670.5 494.1 L669.0 493.7 L667.5 493.3 L666.0 493.0 L664.5 492.6 L663.0 492.3 L661.4 492.0 L659.9 491.7 L658.3 491.4 L656.7 491.2 L655.1 491.0 L653.4 490.9 L651.8 490.7 L650.2 490.6 L648.6 490.5 L647.0 490.4 L645.4 490.4 L643.7 490.3 L642.1 490.2 L640.5 490.2 L638.9 490.2 L637.3 490.1 L635.7 490.1 L634.1 490.1 L632.5 490.1 L630.9 490.2 L629.3 490.2 L627.8 490.3 L626.2 490.5 L624.6 490.6 L623.1 490.8 L621.6 491.0 L620.1 491.2 L618.6 491.4 L617.1 491.7 L615.7 492.0 L614.2 492.2 L612.8 492.5 L611.4 492.8 L609.9 493.1 L608.6 493.5 L607.2 493.8 L605.8 494.2 L604.5 494.6 L603.3 495.0 L602.0 495.5 L600.8 495.9 L599.6 496.4 L598.5 496.9 L597.4 497.5 L596.4 498.0 L595.3 498.6 L594.3 499.1 L593.3 499.7 L592.3 500.2 L591.4 500.8 L590.4 501.4 L589.4 502.0 L588.5 502.5 L587.5 503.1 L586.6 503.7 L585.7 504.4 L584.9 505.0 L584.1 505.7 L583.3 506.3 L582.6 507.0 L582.0 507.7 L581.4 508.4 L580.8 509.1 L580.3 509.9 L579.9 510.6 L579.4 511.3 L579.0 512.1 L578.6 512.9 L578.3 513.6 L577.9 514.4 L577.6 515.2 L577.4 515.9 L577.2 516.7 L577.0 517.5 L576.8 518.3 L576.8 519.1 L576.8 519.9 L576.8 520.7 L576.9 521.6 L577.1 522.4 L577.3 523.2 L577.6 524.0 L577.9 524.8 L578.2 525.6 L578.5 526.4 L578.9 527.2 L579.3 528.1 L579.7 528.9 L580.1 529.7 L580.5 530.5 L581.0 531.4 L581.5 532.2 L582.1 533.0 L582.8 533.8 L583.5 534.6 L584.2 535.4 L585.1 536.2 L586.0 537.0 L587.0 537.7 L588.0 538.5 L589.1 539.2 L590.2 539.9 L591.4 540.6 L592.6 541.3 L593.8 541.9 L595.0 542.6 L596.3 543.3 L597.6 543.9 L599.0 544.6 L600.3 545.2 L601.7 545.8 L603.2 546.3 L604.7 546.9 L606.2 547.4 L607.8 547.9 L609.4 548.4 L611.0 548.8 L612.7 549.3 L614.4 549.7 L616.1 550.1 L617.8 550.4 L619.5 550.8 L621.2 551.2 L622.9 551.5 L624.7 551.9 L626.5 552.2 L628.2 552.5 L630.0 552.8 L631.8 553.1 L633.7 553.3 L635.5 553.6 L637.4 553.7 L639.2 553.9 L641.1 554.0 L643.0 554.0 L644.9 554.0 L646.7 554.0 L648.6 554.0 L650.4 553.9 L652.3 553.8 L654.1 553.7 L655.9 553.6 L657.8 553.4 L659.6 553.3 L661.4 553.1 L663.2 552.9 L665.0 552.7 L666.7 552.5 L668.5 552.3 L670.2 552.0 L671.9 551.7 L673.6 551.3 L675.3 550.9 L676.9 550.5 L678.5 550.1 L680.0 549.7 L681.5 549.2 L683.1 548.7 L684.6 548.2 L686.0 547.7 L687.5 547.2 L689.0 546.7 L690.4 546.2 L691.8 545.6 L693.2 545.1 L694.5 544.5 M704.6 549.1 L705.9 548.3 L707.2 547.5 L708.4 546.6 L709.6 545.8 L710.8 544.9 L711.9 544.0 L713.0 543.1 L714.1 542.2 L715.1 541.3 L716.0 540.4 L716.9 539.5 L717.6 538.5 L718.3 537.5 L718.9 536.5 L719.4 535.5 L719.8 534.5 L720.1 533.4 L720.4 532.4 L720.6 531.4 L720.7 530.4 L720.9 529.3 L721.0 528.3 L721.0 527.3 L721.1 526.3 L721.2 525.3 L721.2 524.2 L721.2 523.2 L721.2 522.2 L721.1 521.2 L720.9 520.2 L720.7 519.2 L720.4 518.2 L720.0 517.2 L719.6 516.2 L719.0 515.2 L718.4 514.2 L717.8 513.2 L717.1 512.3 L716.3 511.3 L715.5 510.4 L714.7 509.4 L713.8 508.5 L712.9 507.6 L712.0 506.7 L711.0 505.8 L710.0 504.9 L708.9 504.0 L707.8 503.2 L706.6 502.4 L705.3 501.5 L704.0 500.8 L702.6 500.0 L701.2 499.3 L699.8 498.5 L698.3 497.8 L696.7 497.2 L695.2 496.5 L693.6 495.9 L692.1 495.2 L690.5 494.6 L689.0 494.0 L687.4 493.4 L685.8 492.8 L684.2 492.2 L682.6 491.6 L680.9 491.1 L679.2 490.5 L677.5 490.0 L675.8 489.6 L674.0 489.1 L672.2 488.7 L670.4 488.4 L668.5 488.0 L666.7 487.7 L664.8 487.4 L662.9 487.2 L661.1 486.9 L659.2 486.7 L657.3 486.5 L655.5 486.3 L653.6 486.1 L651.7 485.9 L649.8 485.8 L648.0 485.7 L646.1 485.6 L644.2 485.5 L642.4 485.5 L640.5 485.5 L638.6 485.5 L636.8 485.5 L634.9 485.6 L633.1 485.7 L631.3 485.8 L629.5 485.9 L627.7 486.1 L625.9 486.2 L624.1 486.4 L622.4 486.5 L620.6 486.7 L618.8 486.8 L617.0 487.0 L615.3 487.2 L613.5 487.4 L611.8 487.7 L610.1 488.0 L608.4 488.3 L606.7 488.6 L605.1 489.0 L603.5 489.4 L601.9 489.8 L600.4 490.3 L598.9 490.7 L597.4 491.2 L596.0 491.7 L594.5 492.2 L593.1 492.7 L591.7 493.3 L590.3 493.8 L588.9 494.4 L587.6 495.0 L586.3 495.6 L585.0 496.2 L583.7 496.8 L582.6 497.5 L581.4 498.1 L580.3 498.8 L579.2 499.5 L578.2 500.3 L577.3 501.0 L576.3 501.8 L575.4 502.5 L574.5 503.3 L573.6 504.1 L572.8 504.9 L571.9 505.7 L571.1 506.5 L570.3 507.3 L569.5 508.1 L568.8 509.0 L568.2 509.8 L567.6 510.7 L567.0 511.6 L566.6 512.5 L566.2 513.4 L565.9 514.3 L565.7 515.3 L565.6 516.2 L565.5 517.1 L565.5 518.1 L565.5 519.0 L565.6 520.0 L565.7 520.9 L565.8 521.9 L566.0 522.8 L566.2 523.8 L566.4 524.8 L566.7 525.7 L567.0 526.7 L567.4 527.7 L567.8 528.6 L568.3 529.6 L568.9 530.5 L569.5 531.5 L570.2 532.4 L570.9 533.3 L571.7 534.3 L572.6 535.2 L573.5 536.1 L574.4 537.0 L575.3 537.9 L576.2 538.8 L577.2 539.8 L578.2 540.7 L579.3 541.6 L580.4 542.5 L581.5 543.4 L582.7 544.3 L584.0 545.1 L585.4 545.9 L586.8 546.8 L588.3 547.5 L589.9 548.3 L591.5 549.0 L593.1 549.7 L594.9 550.4 L596.6 551.0 L598.4 551.7 L600.2 552.3 L602.0 552.9 L603.8 553.5 L605.7 554.1 L607.5 554.7 L609.4 555.3 L611.4 555.9 L613.3 556.4 L615.3 556.9 L617.3 557.4 L619.4 557.9 L621.5 558.3 L623.6 558.7 L625.7 559.0 L627.9 559.4 L630.1 559.7 L632.3 559.9 L634.5 560.2 L636.7 560.4 L638.9 560.6 L641.2 560.8 L643.4 560.9 L645.7 561.1 L648.0 561.2 L650.2 561.3 L652.5 561.3 L654.8 561.3 L657.1 561.3 L659.3 561.2 L661.5 561.0 L663.7 560.8 L665.9 560.5 L668.1 560.2 L670.2 559.9 L672.2 559.5 L674.3 559.1 L676.3 558.6 L678.3 558.2 L680.3 557.7 L682.2 557.3 L684.2 556.8 L686.1 556.3 L688.0 555.8 L689.9 555.3 L691.7 554.7 L693.5 554.1 L695.3 553.5 L697.0 552.8 L698.6 552.2 L700.2 551.4 L701.7 550.7 L703.2 549.9 L704.6 549.1 M714.3 553.6 L715.8 552.7 L717.2 551.7 L718.6 550.7 L719.9 549.7 L721.1 548.6 L722.4 547.6 L723.5 546.6 L724.7 545.5 L725.8 544.5 L726.9 543.4 L727.9 542.3 L728.9 541.3 L729.8 540.2 L730.6 539.1 L731.4 537.9 L732.0 536.8 L732.5 535.6 L732.9 534.4 L733.1 533.2 L733.3 532.0 L733.4 530.9 L733.4 529.7 L733.3 528.5 L733.2 527.3 L733.0 526.1 L732.8 524.9 L732.6 523.7 L732.3 522.6 L732.0 521.4 L731.7 520.3 L731.3 519.1 L730.8 518.0 L730.3 516.9 L729.7 515.7 L729.1 514.6 L728.4 513.5 L727.5 512.4 L726.7 511.3 L725.8 510.3 L724.8 509.2 L723.8 508.2 L722.7 507.2 L721.7 506.1 L720.6 505.1 L719.5 504.1 L718.4 503.1 L717.2 502.1 L716.0 501.2 L714.8 500.2 L713.5 499.3 L712.1 498.3 L710.7 497.4 L709.2 496.6 L707.6 495.7 L706.0 494.9 L704.3 494.1 L702.5 493.4 L700.8 492.7 L698.9 492.0 L697.1 491.3 L695.2 490.6 L693.3 490.0 L691.5 489.4 L689.6 488.8 L687.7 488.2 L685.8 487.6 L683.9 487.0 L681.9 486.5 L680.0 486.0 L678.0 485.5 L676.0 485.0 L674.0 484.6 L671.9 484.2 L669.9 483.8 L667.8 483.4 L665.7 483.1 L663.6 482.8 L661.5 482.6 L659.4 482.3 L657.3 482.1 L655.2 481.9 L653.1 481.7 L651.0 481.5 L648.9 481.3 L646.8 481.2 L644.7 481.1 L642.6 481.0 L640.4 480.9 L638.3 480.9 L636.2 481.0 L634.2 481.0 L632.1 481.1 L630.0 481.3 L628.0 481.4 L626.0 481.6 L624.0 481.9 L622.0 482.1 L620.0 482.4 L618.1 482.6 L616.2 482.9 L614.2 483.2 L612.3 483.5 L610.4 483.8 L608.5 484.1 L606.6 484.4 L604.7 484.8 L602.9 485.1 L601.1 485.5 L599.3 486.0 L597.5 486.4 L595.8 486.9 L594.1 487.4 L592.4 487.9 L590.7 488.5 L589.1 489.0 L587.5 489.6 L586.0 490.2 L584.4 490.8 L582.9 491.4 L581.3 492.1 L579.8 492.7 L578.4 493.4 L576.9 494.1 L575.5 494.8 L574.2 495.5 L572.9 496.3 L571.6 497.1 L570.5 497.9 L569.4 498.7 L568.3 499.6 L567.3 500.4 L566.4 501.3 L565.5 502.2 L564.7 503.1 L563.8 504.0 L563.0 505.0 L562.2 505.9 L561.5 506.8 L560.7 507.8 L560.0 508.7 L559.2 509.7 L558.6 510.7 L557.9 511.7 L557.4 512.7 L556.9 513.7 L556.4 514.7 L556.1 515.8 L555.8 516.8 L555.6 517.9 L555.5 519.0 L555.5 520.0 L555.5 521.1 L555.6 522.2 L555.7 523.3 L555.9 524.4 L556.1 525.5 L556.3 526.6 L556.6 527.7 L557.0 528.8 L557.4 529.9 L557.9 531.0 L558.5 532.1 L559.1 533.2 L559.9 534.3 L560.7 535.4 L561.6 536.4 L562.6 537.5 L563.7 538.5 L564.9 539.5 L566.0 540.5 L567.3 541.5 L568.5 542.5 L569.8 543.5 L571.1 544.5 L572.4 545.5 L573.7 546.5 L575.1 547.5 L576.5 548.5 L578.0 549.5 L579.5 550.4 L581.1 551.4 L582.7 552.3 L584.5 553.2 L586.3 554.0 L588.2 554.9 L590.1 555.7 L592.1 556.4 L594.1 557.2 L596.2 557.9 L598.3 558.6 L600.5 559.2 L602.6 559.9 L604.8 560.5 L607.1 561.1 L609.3 561.7 L611.6 562.3 L614.0 562.9 L616.3 563.4 L618.7 563.9 L621.1 564.3 L623.6 564.7 L626.1 565.0 L628.6 565.3 L631.1 565.6 L633.6 565.8 L636.1 566.0 L638.7 566.2 L641.2 566.3 L643.8 566.4 L646.3 566.5 L648.9 566.7 L651.5 566.7 L654.1 566.8 L656.7 566.9 L659.3 566.9 L661.9 566.9 L664.5 566.8 L667.1 566.7 L669.6 566.6 L672.2 566.4 L674.7 566.1 L677.2 565.7 L679.6 565.3 L682.0 564.9 L684.3 564.4 L686.6 563.9 L688.9 563.3 L691.1 562.7 L693.3 562.1 L695.5 561.5 L697.6 560.8 L699.7 560.2 L701.7 559.5 L703.7 558.7 L705.7 558.0 L707.6 557.2 L709.4 556.4 L711.1 555.5 L712.8 554.6 L714.3 553.6 M727.2 559.6 L729.2 558.6 L731.1 557.5 L733.0 556.4 L734.6 555.3 L736.2 554.1 L737.6 552.8 L738.9 551.6 L740.1 550.3 L741.2 549.0 L742.2 547.6 L743.1 546.3 L744.0 545.0 L744.8 543.6 L745.5 542.3 L746.3 540.9 L746.9 539.6 L747.5 538.2 L748.0 536.9 L748.5 535.5 L748.8 534.1 L749.1 532.8 L749.2 531.4 L749.2 530.0 L749.1 528.6 L749.0 527.2 L748.7 525.8 L748.4 524.5 L747.9 523.1 L747.5 521.7 L747.0 520.4 L746.4 519.1 L745.9 517.7 L745.2 516.4 L744.6 515.1 L743.9 513.8 L743.1 512.5 L742.2 511.2 L741.2 510.0 L740.2 508.7 L739.0 507.5 L737.7 506.3 L736.3 505.1 L734.9 503.9 L733.3 502.8 L731.7 501.7 L730.1 500.6 L728.4 499.6 L726.7 498.6 L724.9 497.5 L723.2 496.5 L721.4 495.6 L719.7 494.6 L717.9 493.6 L716.1 492.7 L714.3 491.8 L712.5 490.9 L710.6 490.0 L708.7 489.1 L706.7 488.3 L704.7 487.5 L702.6 486.7 L700.5 486.0 L698.4 485.3 L696.2 484.6 L694.0 483.9 L691.8 483.3 L689.6 482.7 L687.4 482.1 L685.2 481.5 L683.0 480.9 L680.7 480.3 L678.5 479.8 L676.2 479.3 L673.9 478.8 L671.6 478.4 L669.2 478.0 L666.8 477.7 L664.4 477.3 L662.0 477.1 L659.6 476.9 L657.2 476.7 L654.8 476.5 L652.4 476.4 L649.9 476.3 L647.6 476.2 L645.2 476.2 L642.8 476.1 L640.4 476.1 L638.0 476.0 L635.7 476.0 L633.3 476.0 L630.9 476.0 L628.6 476.1 L626.2 476.1 L623.9 476.3 L621.6 476.4 L619.2 476.6 L617.0 476.8 L614.7 477.1 L612.5 477.4 L610.2 477.7 L608.0 478.0 L605.9 478.4 L603.7 478.8 L601.6 479.2 L599.4 479.6 L597.3 480.1 L595.2 480.5 L593.2 481.0 L591.1 481.5 L589.1 482.1 L587.2 482.7 L585.3 483.3 L583.4 483.9 L581.6 484.6 L579.9 485.3 L578.2 486.0 L576.5 486.8 L574.9 487.6 L573.4 488.4 L571.9 489.2 L570.4 490.0 L568.9 490.9 L567.4 491.7 L565.9 492.5 L564.5 493.4 L563.0 494.3 L561.6 495.1 L560.2 496.0 L558.9 496.9 L557.5 497.9 L556.3 498.8 L555.1 499.8 L554.0 500.8 L553.0 501.8 L552.0 502.9 L551.1 503.9 L550.3 505.0 L549.5 506.1 L548.8 507.2 L548.1 508.3 L547.4 509.5 L546.8 510.6 L546.2 511.7 L545.7 512.9 L545.2 514.1 L544.7 515.3 L544.4 516.5 L544.1 517.7 L543.9 518.9 L543.8 520.1 L543.7 521.3 L543.8 522.6 L544.0 523.8 L544.2 525.0 L544.5 526.3 L544.8 527.5 L545.2 528.8 L545.7 530.0 L546.1 531.3 L546.6 532.6 L547.1 533.8 L547.6 535.1 L548.2 536.4 L548.9 537.7 L549.6 539.0 L550.3 540.3 L551.2 541.6 L552.2 542.8 L553.3 544.1 L554.4 545.3 L555.7 546.6 L557.1 547.8 L558.6 549.0 L560.2 550.1 L561.8 551.3 L563.6 552.4 L565.3 553.5 L567.1 554.6 L569.0 555.7 L570.9 556.8 L572.9 557.8 L574.9 558.9 L577.0 559.9 L579.2 560.9 L581.4 561.9 L583.7 562.8 L586.1 563.7 L588.5 564.5 L591.0 565.3 L593.5 566.1 L596.1 566.8 L598.8 567.5 L601.4 568.1 L604.1 568.7 L606.8 569.4 L609.5 570.0 L612.3 570.6 L615.1 571.2 L617.9 571.7 L620.7 572.3 L623.5 572.8 L626.4 573.3 L629.4 573.7 L632.3 574.1 L635.3 574.5 L638.3 574.7 L641.3 574.9 L644.3 575.0 L647.3 575.1 L650.4 575.1 L653.4 575.1 L656.4 575.0 L659.3 574.8 L662.3 574.7 L665.3 574.5 L668.2 574.3 L671.1 574.1 L674.1 573.8 L677.0 573.5 L679.9 573.2 L682.7 572.8 L685.6 572.4 L688.4 571.9 L691.1 571.4 L693.8 570.9 L696.5 570.2 L699.1 569.6 L701.6 568.9 L704.1 568.1 L706.6 567.4 L709.0 566.6 L711.4 565.8 L713.7 565.0 L716.1 564.1 L718.4 563.3 L720.6 562.4 L722.9 561.5 L725.1 560.6 L727.2 559.6 M745.6 568.1 L747.7 566.8 L749.8 565.3 L751.7 563.9 L753.6 562.5 L755.4 561.0 L757.2 559.6 L758.8 558.1 L760.4 556.6 L762.0 555.0 L763.4 553.5 L764.6 551.9 L765.8 550.3 L766.8 548.7 L767.6 547.1 L768.3 545.4 L768.8 543.7 L769.2 542.0 L769.4 540.3 L769.5 538.6 L769.6 536.9 L769.5 535.2 L769.5 533.6 L769.4 531.9 L769.2 530.3 L769.1 528.6 L768.9 527.0 L768.7 525.4 L768.4 523.8 L768.0 522.2 L767.6 520.5 L767.1 519.0 L766.4 517.4 L765.6 515.8 L764.7 514.2 L763.7 512.7 L762.6 511.1 L761.4 509.6 L760.1 508.1 L758.8 506.7 L757.4 505.2 L755.9 503.8 L754.4 502.3 L752.9 500.9 L751.3 499.6 L749.6 498.2 L747.9 496.9 L746.1 495.5 L744.2 494.2 L742.3 493.0 L740.3 491.8 L738.1 490.6 L735.9 489.4 L733.6 488.3 L731.2 487.3 L728.8 486.3 L726.4 485.3 L723.9 484.3 L721.4 483.4 L718.9 482.5 L716.4 481.6 L713.9 480.7 L711.4 479.8 L708.9 479.0 L706.4 478.1 L703.9 477.3 L701.3 476.5 L698.7 475.8 L696.1 475.1 L693.4 474.4 L690.7 473.8 L688.0 473.2 L685.2 472.7 L682.4 472.2 L679.6 471.8 L676.8 471.4 L674.0 471.0 L671.2 470.7 L668.3 470.4 L665.5 470.1 L662.7 469.8 L659.9 469.6 L657.1 469.3 L654.3 469.2 L651.5 469.0 L648.7 468.9 L645.9 468.8 L643.1 468.8 L640.3 468.8 L637.6 468.8 L634.8 468.9 L632.1 469.1 L629.4 469.2 L626.7 469.4 L624.0 469.6 L621.4 469.9 L618.7 470.1 L616.1 470.4 L613.5 470.6 L610.9 470.9 L608.3 471.1 L605.7 471.4 L603.1 471.7 L600.5 472.1 L597.9 472.4 L595.4 472.8 L592.9 473.3 L590.4 473.8 L588.0 474.3 L585.6 474.9 L583.3 475.5 L581.0 476.2 L578.7 476.8 L576.5 477.5 L574.3 478.3 L572.2 479.0 L570.0 479.8 L567.9 480.5 L565.8 481.3 L563.8 482.2 L561.8 483.0 L559.8 483.9 L557.8 484.8 L555.9 485.7 L554.1 486.6 L552.3 487.6 L550.6 488.6 L549.0 489.7 L547.4 490.8 L545.9 491.8 L544.5 493.0 L543.0 494.1 L541.7 495.2 L540.3 496.4 L538.9 497.5 L537.6 498.7 L536.3 499.9 L535.0 501.1 L533.8 502.4 L532.6 503.6 L531.5 504.9 L530.4 506.2 L529.5 507.5 L528.6 508.9 L527.9 510.2 L527.3 511.6 L526.8 513.0 L526.4 514.4 L526.1 515.9 L525.9 517.3 L525.8 518.7 L525.8 520.2 L525.8 521.6 L525.8 523.1 L525.9 524.6 L526.1 526.1 L526.3 527.6 L526.6 529.0 L526.9 530.5 L527.3 532.0 L527.9 533.5 L528.5 535.0 L529.2 536.5 L530.0 538.0 L531.0 539.5 L532.0 541.0 L533.1 542.5 L534.3 543.9 L535.5 545.4 L536.8 546.9 L538.2 548.3 L539.5 549.8 L541.0 551.3 L542.4 552.7 L543.9 554.2 L545.5 555.7 L547.2 557.2 L548.9 558.6 L550.8 560.0 L552.8 561.4 L554.9 562.8 L557.1 564.1 L559.5 565.4 L561.9 566.6 L564.5 567.8 L567.1 569.0 L569.8 570.1 L572.6 571.2 L575.4 572.2 L578.2 573.3 L581.1 574.3 L584.1 575.4 L587.0 576.4 L590.1 577.4 L593.1 578.3 L596.2 579.3 L599.4 580.2 L602.7 581.0 L606.0 581.9 L609.3 582.6 L612.8 583.3 L616.2 583.9 L619.7 584.5 L623.3 585.1 L626.9 585.5 L630.5 586.0 L634.1 586.4 L637.7 586.8 L641.4 587.1 L645.1 587.4 L648.8 587.7 L652.6 588.0 L656.3 588.2 L660.1 588.3 L663.9 588.4 L667.6 588.4 L671.4 588.3 L675.1 588.1 L678.8 587.8 L682.4 587.4 L686.0 586.9 L689.5 586.4 L693.0 585.8 L696.3 585.1 L699.7 584.4 L703.0 583.6 L706.2 582.8 L709.4 582.0 L712.6 581.2 L715.8 580.3 L718.9 579.4 L721.9 578.5 L724.9 577.6 L727.9 576.6 L730.7 575.5 L733.5 574.4 L736.1 573.3 L738.7 572.1 L741.1 570.8 L743.4 569.5 L745.6 568.1 M771.1 579.9 L774.1 578.4 L776.9 576.7 L779.6 575.1 L782.1 573.3 L784.3 571.5 L786.4 569.6 L788.2 567.6 L789.9 565.7 L791.3 563.6 L792.7 561.6 L793.9 559.6 L795.0 557.5 L796.0 555.5 L796.9 553.4 L797.7 551.3 L798.5 549.3 L799.1 547.2 L799.7 545.2 L800.1 543.1 L800.4 541.1 L800.5 539.0 L800.5 536.9 L800.3 534.9 L799.9 532.8 L799.4 530.8 L798.8 528.7 L798.0 526.7 L797.2 524.7 L796.3 522.7 L795.3 520.8 L794.2 518.8 L793.2 516.9 L792.0 515.0 L790.8 513.1 L789.6 511.2 L788.2 509.4 L786.8 507.5 L785.2 505.7 L783.5 503.9 L781.7 502.2 L779.7 500.5 L777.5 498.8 L775.3 497.2 L772.9 495.6 L770.4 494.1 L767.9 492.6 L765.3 491.2 L762.7 489.7 L760.0 488.3 L757.4 487.0 L754.7 485.6 L752.1 484.3 L749.4 483.0 L746.7 481.7 L744.0 480.5 L741.3 479.3 L738.5 478.1 L735.7 477.0 L732.8 475.9 L729.9 474.8 L726.9 473.8 L723.9 472.8 L720.8 471.9 L717.7 471.0 L714.6 470.1 L711.5 469.3 L708.4 468.5 L705.3 467.7 L702.1 467.0 L699.0 466.2 L695.8 465.5 L692.7 464.8 L689.5 464.2 L686.3 463.6 L683.1 463.0 L679.8 462.5 L676.5 462.0 L673.2 461.6 L669.9 461.3 L666.6 461.0 L663.2 460.8 L659.9 460.6 L656.6 460.5 L653.3 460.4 L650.0 460.3 L646.8 460.3 L643.5 460.2 L640.3 460.2 L637.0 460.2 L633.8 460.2 L630.6 460.2 L627.4 460.3 L624.2 460.4 L621.0 460.5 L617.8 460.7 L614.6 460.9 L611.5 461.2 L608.4 461.5 L605.3 461.8 L602.3 462.2 L599.3 462.7 L596.3 463.1 L593.3 463.6 L590.4 464.2 L587.5 464.7 L584.6 465.3 L581.7 465.9 L578.9 466.5 L576.0 467.1 L573.3 467.8 L570.5 468.5 L567.8 469.3 L565.2 470.1 L562.6 471.0 L560.1 471.9 L557.7 472.8 L555.3 473.8 L553.0 474.8 L550.8 475.9 L548.7 476.9 L546.5 478.0 L544.5 479.2 L542.4 480.3 L540.3 481.4 L538.3 482.6 L536.3 483.7 L534.3 484.9 L532.3 486.1 L530.3 487.3 L528.4 488.5 L526.5 489.8 L524.7 491.1 L523.0 492.4 L521.4 493.8 L519.9 495.1 L518.4 496.6 L517.1 498.0 L515.8 499.5 L514.6 501.0 L513.5 502.5 L512.4 504.0 L511.3 505.5 L510.3 507.1 L509.4 508.7 L508.5 510.3 L507.7 511.9 L506.9 513.5 L506.2 515.2 L505.6 516.9 L505.2 518.6 L504.8 520.3 L504.6 522.0 L504.5 523.8 L504.6 525.5 L504.7 527.3 L505.0 529.0 L505.3 530.8 L505.7 532.6 L506.2 534.4 L506.7 536.2 L507.2 538.0 L507.8 539.8 L508.4 541.6 L509.1 543.5 L509.8 545.4 L510.6 547.3 L511.5 549.1 L512.6 551.0 L513.7 552.9 L515.1 554.8 L516.6 556.6 L518.2 558.5 L520.0 560.3 L521.9 562.1 L524.0 563.8 L526.2 565.6 L528.5 567.3 L530.9 569.0 L533.4 570.7 L535.9 572.3 L538.6 574.0 L541.3 575.6 L544.1 577.3 L547.0 578.9 L550.0 580.4 L553.2 581.9 L556.4 583.4 L559.8 584.8 L563.3 586.1 L566.9 587.4 L570.6 588.6 L574.4 589.8 L578.2 590.8 L582.1 591.9 L586.1 592.9 L590.1 593.9 L594.1 594.9 L598.2 595.8 L602.3 596.8 L606.4 597.7 L610.6 598.6 L614.9 599.5 L619.2 600.3 L623.6 601.1 L628.0 601.7 L632.5 602.3 L637.0 602.8 L641.6 603.2 L646.1 603.5 L650.7 603.6 L655.3 603.7 L659.8 603.7 L664.4 603.6 L668.9 603.5 L673.5 603.2 L678.0 603.0 L682.4 602.7 L686.9 602.4 L691.4 602.0 L695.8 601.5 L700.2 601.1 L704.6 600.5 L708.9 599.9 L713.2 599.2 L717.3 598.4 L721.4 597.5 L725.4 596.6 L729.3 595.5 L733.2 594.4 L736.9 593.3 L740.5 592.1 L744.1 590.8 L747.7 589.5 L751.2 588.3 L754.6 586.9 L758.0 585.6 L761.4 584.2 L764.7 582.9 L768.0 581.4 L771.1 579.9 M829.9 607.1 L833.3 604.5 L836.6 601.8 L839.6 599.0 L842.5 596.3 L845.3 593.5 L848.0 590.7 L850.5 588.0 L853.0 585.2 L855.3 582.3 L857.4 579.5 L859.4 576.6 L861.1 573.8 L862.5 570.8 L863.6 567.9 L864.5 564.9 L865.0 561.8 L865.2 558.8 L865.2 555.7 L864.8 552.7 L864.3 549.7 L863.5 546.7 L862.7 543.7 L861.7 540.8 L860.6 537.9 L859.5 535.0 L858.4 532.2 L857.2 529.4 L855.9 526.6 L854.5 523.9 L853.1 521.2 L851.5 518.5 L849.8 515.9 L847.9 513.3 L845.9 510.7 L843.7 508.2 L841.3 505.7 L838.8 503.2 L836.1 500.8 L833.4 498.5 L830.6 496.2 L827.7 493.9 L824.8 491.7 L821.9 489.5 L818.9 487.3 L815.8 485.2 L812.7 483.1 L809.5 481.0 L806.3 479.0 L802.9 477.1 L799.4 475.2 L795.8 473.4 L792.0 471.6 L788.2 470.0 L784.2 468.4 L780.1 466.8 L776.0 465.4 L771.8 464.0 L767.6 462.6 L763.4 461.3 L759.2 460.1 L755.0 458.9 L750.8 457.7 L746.6 456.5 L742.5 455.4 L738.3 454.3 L734.2 453.2 L730.0 452.2 L725.8 451.2 L721.6 450.3 L717.3 449.4 L713.0 448.6 L708.7 447.9 L704.4 447.2 L700.1 446.6 L695.7 446.1 L691.4 445.6 L687.0 445.1 L682.7 444.7 L678.4 444.3 L674.1 444.0 L669.8 443.7 L665.5 443.4 L661.2 443.2 L657.0 443.0 L652.7 442.9 L648.5 442.8 L644.3 442.7 L640.1 442.8 L635.9 442.9 L631.8 443.0 L627.7 443.3 L623.6 443.6 L619.5 443.9 L615.5 444.3 L611.6 444.7 L607.6 445.2 L603.7 445.6 M507.1 471.3 L504.3 472.7 L501.7 474.3 L499.2 475.8 L496.7 477.5 L494.4 479.1 L492.1 480.8 L489.9 482.5 L487.7 484.2 L485.6 486.0 L483.5 487.8 L481.4 489.6 L479.3 491.4 L477.2 493.3 L475.2 495.1 L473.2 497.1 L471.3 499.0 L469.4 501.0 L467.7 503.0 L466.2 505.1 L464.7 507.2 L463.5 509.4 L462.3 511.5 L461.4 513.7 L460.6 516.0 L459.9 518.2 L459.4 520.5 L458.9 522.8 L458.6 525.2 L458.3 527.5 L458.2 529.9 L458.1 532.3 L458.1 534.7 L458.2 537.1 L458.4 539.6 L458.8 542.1 L459.4 544.6 L460.1 547.0 L461.0 549.5 L462.1 552.0 L463.3 554.5 L464.8 557.0 L466.4 559.5 L468.1 561.9 L469.9 564.4 L471.8 566.9 L473.8 569.4 L475.9 571.9 L478.0 574.4 L480.2 577.0 L482.5 579.6 L484.9 582.1 L487.4 584.7 L490.1 587.3 L492.9 589.9 L495.9 592.4 L499.2 594.9 L502.7 597.4 L506.4 599.8 L510.2 602.1 L514.3 604.3 L518.6 606.5 L523.0 608.6 L527.6 610.7 L532.3 612.7 L537.1 614.7 L542.0 616.7 L547.0 618.6 L552.1 620.5 L557.3 622.4 L562.6 624.3 L568.1 626.1 L573.7 627.8 L579.4 629.5 L585.2 631.0 L591.1 632.4 L597.2 633.8 L603.4 635.0 L609.6 636.1 L616.0 637.1 L622.4 638.0 L628.8 638.8 L635.3 639.6 L641.9 640.4 L648.5 641.1 L655.2 641.7 L661.9 642.4 L668.7 642.9 L675.6 643.4 L682.5 643.8 L689.4 644.0 L696.3 644.2 L703.2 644.1 L710.0 643.8 L716.8 643.4 L723.5 642.8 L730.0 641.9 L736.4 640.9 L742.7 639.8 L748.9 638.5 L754.9 637.1 L760.8 635.6 L766.6 634.0 L772.3 632.4 L778.0 630.7 L783.5 629.0 L788.9 627.2 L794.2 625.3 L799.4 623.4 L804.4 621.4 L809.2 619.2 L813.8 617.0 L818.2 614.7 L822.3 612.3 L826.2 609.7 L829.9 607.1 M410.7 520.8 L409.7 523.7 L408.9 526.7 L408.2 529.7 L407.7 532.7 L407.3 535.8 L407.1 538.9 L406.9 542.1 L406.8 545.3 L406.8 548.5 L406.8 551.8 L406.9 555.1 L407.0 558.5 L407.3 562.0 L407.7 565.5 L408.2 569.0 L409.0 572.6 L410.0 576.2 L411.3 579.8 L412.8 583.4 L414.7 587.0 L416.9 590.6 L419.4 594.2 L422.1 597.7 L425.1 601.3 L428.4 604.8 L431.8 608.3 L435.5 611.9 L439.3 615.4 L443.3 618.9 L447.5 622.5 L451.8 626.0 L456.4 629.5 L461.3 633.0 L466.3 636.5 L471.7 639.9 L477.3 643.2 L483.2 646.4 L489.4 649.5 L495.9 652.5 L502.6 655.4 L509.5 658.2 L516.6 661.0 L523.9 663.6 L531.3 666.2 L538.9 668.8 L546.6 671.4 L554.4 674.0 L562.5 676.6 L570.6 679.1 L579.0 681.5 L587.5 683.9 L596.2 686.2 L605.1 688.3 L614.2 690.2 L623.5 691.9 L632.9 693.3 L642.4 694.5 L652.0 695.4 L661.6 696.1 L671.3 696.5 L680.9 696.7 L690.6 696.8 L700.2 696.7 L709.9 696.5 L719.5 696.3 M363.7 521.0 L362.1 524.6 L360.7 528.2 M360.2 608.6 L362.7 613.3 L365.6 617.9 L368.8 622.6 L372.3 627.3 L376.1 632.0 L380.1 636.7 L384.4 641.5 L388.9 646.3 L393.6 651.1 L398.6 656.0 L403.9 660.9 L409.5 665.7 L415.5 670.5 L421.9 675.3 L428.7 680.0 L435.8 684.6 L443.4 689.0 L451.3 693.4 L459.6 697.6 L468.3 701.8 L477.2 705.9 L486.3 709.9 L495.8 713.9 L505.4 717.9 L515.3 721.9 L525.5 725.8 L535.9 729.8 L546.5 733.8 L557.5 737.7 L568.9 741.4 L580.5 745.0 L592.5 748.3 L604.7 751.3 L617.3 754.0 L630.0 756.3 M368.4 753.4 L378.1 760.6 L388.3 767.8 L398.9 775.0 L410.0 782.3 L421.6 789.7 L433.7 797.0 L446.3 804.4 L459.6 811.6 L473.5 818.7 L488.1 825.6 L503.2 832.2" stroke="#f00" stroke-width="1.5" fill="none" stroke-linejoin="round"/>
<path d="M370.7 386.8 L380.6 384.6 L390.1 381.3 L399.9 378.2 L409.3 375.6 L418.2 372.7 L427.9 370.5 L437.3 367.5 L447.1 364.5 L456.6 361.5 L465.7 358.8 M370.9 394.8 L380.7 392.0 L390.0 389.5 L399.9 386.2 L409.4 383.6 L419.3 380.9 L428.4 378.3 L437.8 375.0 L447.9 372.0 L457.3 369.1 L467.1 366.8 M371.3 402.7 L380.8 400.0 L390.4 397.0 L400.2 394.6 L409.6 391.5 L418.9 388.7 L429.1 386.0 L438.9 382.6 L448.2 380.1 L457.5 377.0 L467.3 373.9 M371.2 410.4 L380.8 407.7 L391.2 404.6 L400.9 402.1 L411.2 399.4 L421.1 396.1 L430.7 393.2 L441.1 390.8 L450.4 387.3 L460.5 384.5 L470.6 381.9 M370.6 418.5 L380.7 415.7 L391.0 412.9 L400.5 409.9 L410.5 406.6 L420.5 404.2 L430.4 401.3 L439.8 398.1 L449.4 395.3 L459.2 392.0 L469.2 389.1 M370.6 426.1 L380.5 423.2 L390.5 420.2 L400.7 417.7 L409.9 414.5 L419.9 411.6 L429.5 409.1 L440.0 405.8 L449.4 402.6 L458.8 399.8 L468.8 397.3 M370.6 434.8 L380.9 431.1 L390.8 428.1 L400.7 425.8 L410.9 422.6 L420.3 419.4 L430.2 416.7 L440.3 413.8 L450.1 410.3 L460.4 408.0 L470.3 404.8 M371.2 442.1 L380.5 439.2 L389.6 435.9 L399.4 433.1 L409.2 430.6 L418.5 427.6 L428.4 424.6 L437.5 421.0 L446.9 418.0 L456.3 415.3 L466.4 412.5 M371.1 450.4 L380.4 447.3 L390.8 444.3 L400.3 441.1 L409.6 438.3 L419.4 435.2 L429.7 431.9 L438.9 429.3 L448.9 425.6 L458.1 422.6 L468.4 420.0 M371.3 458.5 L381.0 454.9 L390.9 451.7 L400.3 449.3 L410.8 445.8 L420.9 442.7 L430.8 439.9 L440.2 436.4 L450.1 433.3 L460.3 430.3 L470.1 427.1 M370.9 466.0 L380.5 463.2 L389.8 460.1 L399.4 456.7 L408.8 453.2 L418.2 450.2 L427.3 447.6 L436.9 444.3 L446.8 441.2 L455.9 438.1 L465.6 435.2 M371.0 473.7 L380.8 471.3 L390.9 468.3 L401.0 465.7 L410.7 462.7 L420.7 459.8 L430.8 456.9 L440.6 454.1 L450.8 451.4 L460.7 448.8 L470.2 445.6 M371.3 481.5 L380.1 478.9 L389.5 475.9 L399.0 473.4 L409.0 470.7 L417.9 467.7 L427.7 464.4 L437.3 462.2 L446.2 459.3 L455.8 456.0 L465.7 453.5 M474.7 370.9 L484.5 366.9 L495.0 362.6 L505.0 359.0 L514.7 354.9 L525.3 351.0 L534.9 347.4 L545.6 343.4 L555.2 338.8 L565.2 335.2 L575.5 330.7 M475.9 375.1 L485.3 371.7 L495.5 367.6 L504.9 363.1 L515.3 359.5 L524.6 355.9 L534.9 351.9 L544.4 348.0 L554.2 344.0 L564.4 339.7 L574.3 336.2 M475.1 379.4 L484.9 375.4 L495.0 371.6 L505.4 367.8 L515.9 363.9 L525.8 359.9 L535.9 355.9 L546.0 352.0 L556.5 348.5 L566.2 344.6 L577.0 340.4 M477.3 384.2 L487.0 380.1 L497.1 376.6 L506.7 372.7 L516.8 368.7 L526.4 364.6 L536.0 360.6 L545.8 357.2 L555.8 353.0 L565.5 349.7 L576.0 345.7 M475.0 388.2 L485.0 384.4 L495.2 381.0 L505.8 376.9 L515.4 373.5 L525.5 369.2 L535.4 365.4 L545.9 361.7 L555.8 358.0 L565.8 354.0 L575.9 350.3 M474.0 392.3 L484.5 388.8 L494.9 385.2 L505.2 381.6 L515.2 377.5 L525.9 373.6 L536.0 370.3 L545.7 366.7 L556.7 362.8 L566.8 359.2 L576.6 355.3 M476.3 397.1 L485.9 393.4 L495.9 389.6 L505.3 385.4 L515.1 382.0 L524.9 378.7 L535.2 374.9 L545.1 371.3 L554.8 367.0 L564.9 364.0 L574.5 360.1 M476.8 400.9 L486.3 397.3 L496.9 393.6 L506.9 390.6 L516.7 386.5 L526.7 383.2 L536.9 379.5 L546.9 375.5 L556.5 372.0 L567.0 368.4 L576.9 364.6 M474.4 405.6 L484.6 401.7 L494.6 398.3 L504.8 394.4 L515.3 390.9 L525.6 387.9 L535.0 384.0 L545.9 380.9 L555.8 376.7 L565.8 373.7 L576.0 369.9 M474.9 409.4 L484.9 406.2 L495.0 402.9 L504.6 399.5 L514.9 395.3 L524.6 392.2 L535.0 388.5 L544.9 385.0 L555.1 381.9 L564.9 378.4 L575.7 374.3 M478.0 413.8 L487.3 410.5 L497.5 407.2 L506.7 403.6 L516.4 399.8 L526.0 397.0 L535.8 393.6 L545.5 389.7 L555.4 386.2 L565.0 383.3 L575.2 379.7 M476.9 418.3 L486.5 414.5 L496.3 411.5 L506.0 408.2 L515.4 404.4 L525.7 401.0 L535.1 397.8 L544.8 394.7 L555.1 390.9 L564.6 387.6 L574.3 384.3 M474.4 422.9 L484.9 419.0 L495.4 416.3 L505.2 412.3 L515.2 408.9 L525.5 405.6 L535.6 402.4 L546.0 399.5 L556.3 395.8 L566.3 392.6 L576.4 389.1 M474.6 426.6 L484.4 423.7 L494.9 420.1 L504.6 416.8 L514.9 413.7 L525.6 410.8 L535.7 406.8 L545.2 404.1 L556.1 400.6 L566.0 396.9 L576.1 394.4 M477.7 431.0 L486.7 427.7 L496.7 424.9 L506.8 421.7 L516.3 418.5 L525.8 415.1 L535.2 412.0 L545.1 408.9 L555.1 405.2 L564.4 401.9 L574.5 399.1 M474.5 435.6 L484.6 432.1 L495.0 428.8 L505.0 425.9 L515.8 422.9 L525.9 419.6 L535.6 416.2 L546.5 413.4 L556.2 409.7 L566.6 407.1 L576.7 403.6 M476.5 439.4 L486.3 436.6 L496.3 433.3 L506.2 430.6 L515.7 427.1 L525.8 424.0 L535.5 420.9 L544.7 418.2 L554.5 415.2 L564.5 411.5 L574.0 408.5 M476.4 444.0 L486.2 441.4 L495.9 437.6 L505.6 434.8 L516.0 432.1 L525.6 429.2 L535.5 425.6 L544.7 423.0 L554.9 419.2 L564.5 416.4 L574.1 413.3 M474.5 448.3 L485.3 445.1 L495.5 442.1 L505.3 439.6 L515.9 436.3 L525.5 433.3 L536.0 430.7 L546.1 427.2 L556.8 423.9 L566.7 421.6 L577.2 417.9 M474.5 452.5 L484.6 450.1 L494.5 446.6 L505.3 443.9 L515.0 441.1 L525.3 437.7 L535.3 435.2 L546.3 432.1 L556.6 428.7 L566.3 426.1 L577.2 423.5 M449.9 370.8 L462.6 366.9 L475.7 362.5 L488.3 358.9 L501.1 354.8 L513.6 350.4 L526.1 346.3 L539.1 342.0 L551.4 338.4 L564.1 333.8 L576.6 330.0 M394.9 387.4 L404.7 385.5 L413.6 382.9 L422.8 381.4 L432.7 379.5 L441.7 377.6 L451.3 375.9 L460.8 374.2 L470.1 371.7 M471.8 382.8 L472.1 390.8 L472.1 398.0 L472.4 405.7 L473.5 414.0 L473.0 421.5 L474.1 429.4 L473.4 437.6 L474.2 445.6 M476.0 377.2 L476.7 385.6 L475.9 393.2 L476.3 401.3 L477.6 410.1 L477.8 418.2 L477.9 426.5 L477.5 435.2 L478.5 442.7 M497.1 380.4 L497.1 387.0 L497.1 393.7 L497.9 400.8 L497.6 406.7 L498.0 414.1 L498.1 420.3 L498.4 427.5 L499.1 433.2 M509.9 376.9 L510.4 382.7 L510.1 389.8 L510.6 395.7 L510.8 402.9 L511.0 408.8 L511.3 415.0 L512.2 422.1 L511.8 427.5 M533.6 381.2 L534.7 386.1 L534.9 390.5 L535.2 395.0 L534.6 398.9 L535.3 404.0 L536.0 407.8 L535.9 412.5 L536.0 416.7 M672.8 369.0 L684.3 372.7 L694.7 377.6 L706.1 381.1 L716.1 385.9 L727.9 389.6 L737.8 394.2 L749.0 398.3 L760.1 402.3 M849.7 392.3 L859.7 396.5 L870.3 401.6 L879.7 405.6 L889.9 410.5 L899.9 414.7 L909.7 420.0 L920.4 423.9 L930.1 429.3 M807.5 408.3 L812.9 410.2 L818.6 412.4 L823.6 414.3 L829.1 416.4 L834.4 418.6 L839.4 420.3 L844.9 422.9 L849.7 425.3 M850.3 425.0 L859.7 430.6 L869.6 435.9 L879.9 441.5 L889.9 447.5 L899.5 453.3 L909.6 459.0 L920.3 464.4 L929.6 470.0 M758.9 422.5 L763.3 424.1 L768.7 425.7 L773.2 426.9 L778.0 429.0 L782.6 431.2 L786.4 432.8 L791.8 433.8 L795.9 436.3 M795.7 436.4 L801.9 439.6 L807.9 442.5 L814.8 445.5 L820.3 449.0 L826.4 451.8 L832.4 455.2 L839.3 458.9 L845.4 461.7 M880.3 394.6 L886.4 397.3 L892.6 399.6 L899.2 401.5 L905.9 403.1 L912.4 405.8 L918.1 408.0 L924.4 410.4 L931.1 411.9 M690.3 397.9 L695.9 400.5 L702.0 402.8 L708.5 404.9 L715.5 407.1 L721.4 409.1 L727.0 411.0 L733.4 413.9 L739.9 416.0 M642.3 757.7 L659.8 744.1 L681.6 724.6 L719.9 719.7 L766.9 715.8 M724.1 695.6 L744.8 678.1 L767.0 657.7 L800.3 642.8 L835.7 629.7 L880.1 612.3 L931.2 584.9 M577.8 810.6 L598.1 795.0 L616.9 782.1 L640.0 788.3 L678.2 793.8 M801.3 768.6 L835.0 753.9 L869.8 735.6 L900.2 719.6 L931.0 702.4 M854.7 719.8 L890.1 700.0 L931.1 668.3 M821.7 741.8 L824.8 727.6 L850.3 705.2 L870.2 689.6" stroke="#f00" stroke-width="1.4" fill="none" stroke-linejoin="round"/>
<path d="M870.3 724.0h1.6 M872.3 722.2h1.6 M873.9 720.1h1.6 M875.9 718.3h1.6 M878.0 717.3h1.6 M880.4 715.7h1.6 M882.5 713.4h1.6 M884.3 711.8h1.6 M886.6 710.2h1.6 M888.1 708.5h1.6 M890.8 706.4h1.6 M892.8 704.4h1.6 M894.2 702.9h1.6 M896.7 701.9h1.6 M898.7 699.6h1.6 M900.9 697.8h1.6 M902.3 696.7h1.6 M904.7 694.7h1.6 M906.8 693.3h1.6 M908.6 691.4h1.6 M910.9 689.7h1.6 M912.7 687.8h1.6 M914.8 685.7h1.6 M916.5 684.3h1.6 M918.4 682.8h1.6 M920.5 680.2h1.6 M922.5 679.4h1.6 M924.8 676.8h1.6 M926.5 675.0h1.6 M929.2 673.9h1.6 M931.2 672.2h1.6 M864.0 749.9h1.6 M866.2 748.7h1.6 M868.4 746.3h1.6 M870.4 745.5h1.6 M872.5 743.0h1.6 M873.8 741.4h1.6 M875.6 740.4h1.6 M878.4 738.6h1.6 M880.5 736.9h1.6 M882.0 734.7h1.6 M883.8 733.7h1.6 M886.0 731.7h1.6 M888.2 729.7h1.6 M890.1 728.3h1.6 M892.6 726.7h1.6 M894.2 725.7h1.6 M896.4 723.9h1.6 M898.6 721.5h1.6 M900.4 720.2h1.6 M902.8 718.5h1.6 M904.8 717.0h1.6 M906.3 715.7h1.6 M908.2 714.0h1.6 M910.3 711.5h1.6 M912.4 710.6h1.6 M915.2 708.2h1.6 M916.8 707.1h1.6 M919.1 705.1h1.6 M920.8 703.6h1.6 M923.2 701.9h1.6 M925.3 700.2h1.6 M926.6 699.0h1.6 M929.0 696.8h1.6 M931.1 695.1h1.6 M866.9 776.3h1.6 M868.8 774.1h1.6 M870.5 772.4h1.6 M873.0 770.4h1.6 M874.9 768.6h1.6 M876.2 767.1h1.6 M878.8 765.6h1.6 M880.2 764.3h1.6 M882.0 762.1h1.6 M884.3 760.7h1.6 M886.5 758.9h1.6 M888.0 756.8h1.6 M889.8 755.6h1.6 M892.2 753.8h1.6 M893.7 751.8h1.6 M896.2 750.2h1.6 M897.5 748.3h1.6 M900.2 746.4h1.6 M901.5 744.7h1.6 M903.9 743.5h1.6 M905.3 741.1h1.6 M907.4 739.6h1.6 M909.6 737.7h1.6 M911.4 736.0h1.6 M913.9 734.8h1.6 M915.0 733.3h1.6 M917.0 731.0h1.6 M919.8 729.7h1.6 M921.5 727.6h1.6 M922.9 726.0h1.6 M924.8 723.9h1.6 M927.0 722.0h1.6 M929.0 721.0h1.6 M931.2 719.0h1.6 M864.3 801.6h1.6 M866.4 800.2h1.6 M868.5 798.9h1.6 M870.1 796.8h1.6 M872.4 794.9h1.6 M873.8 793.5h1.6 M876.4 791.8h1.6 M878.2 790.1h1.6 M880.2 788.1h1.6 M881.9 786.1h1.6 M884.0 784.1h1.6 M885.8 783.0h1.6 M888.1 781.1h1.6 M889.5 779.2h1.6 M891.7 777.6h1.6 M893.6 775.9h1.6 M896.1 773.7h1.6 M897.8 772.5h1.6 M899.5 770.5h1.6 M902.0 768.3h1.6 M903.6 766.7h1.6 M905.8 765.7h1.6 M907.5 763.1h1.6 M909.5 761.8h1.6 M911.6 760.0h1.6 M913.5 758.6h1.6 M915.3 756.4h1.6 M917.7 754.5h1.6 M919.4 752.9h1.6 M921.5 750.9h1.6 M923.6 749.4h1.6 M924.7 747.5h1.6 M927.0 745.5h1.6 M929.0 744.2h1.6 M931.2 742.4h1.6 M860.3 828.2h1.6 M863.0 826.3h1.6 M864.2 824.9h1.6 M866.4 822.5h1.6 M868.0 821.4h1.6 M870.7 819.5h1.6 M872.3 817.7h1.6 M874.0 816.4h1.6 M876.1 814.4h1.6 M878.5 812.8h1.6 M880.1 810.6h1.6 M882.2 808.7h1.6 M884.4 807.2h1.6 M886.4 805.4h1.6 M887.8 803.6h1.6 M889.9 801.9h1.6 M891.4 800.7h1.6 M893.6 798.5h1.6 M895.6 797.0h1.6 M897.7 795.4h1.6 M899.9 793.4h1.6 M902.1 792.2h1.6 M903.2 790.4h1.6 M906.0 788.7h1.6 M907.2 787.0h1.6 M909.6 784.5h1.6 M911.0 783.7h1.6 M913.6 781.3h1.6 M915.0 779.4h1.6 M917.0 778.3h1.6 M919.1 776.0h1.6 M921.6 774.9h1.6 M922.8 773.3h1.6 M925.2 771.4h1.6 M927.3 769.8h1.6 M929.3 768.1h1.6 M930.7 766.2h1.6 M860.9 853.9h1.6 M863.0 852.3h1.6 M864.4 850.2h1.6 M866.2 848.6h1.6 M868.1 846.8h1.6 M870.1 845.0h1.6 M872.4 843.3h1.6 M874.7 841.0h1.6 M876.7 839.6h1.6 M878.3 838.0h1.6 M880.6 836.0h1.6 M882.1 834.8h1.6 M883.7 832.6h1.6 M886.2 830.2h1.6 M888.1 829.1h1.6 M890.4 827.0h1.6 M892.4 825.3h1.6 M893.9 823.9h1.6 M895.4 822.0h1.6 M897.9 819.8h1.6 M900.1 818.0h1.6 M901.7 816.4h1.6 M903.9 814.3h1.6 M905.5 812.7h1.6 M907.6 811.3h1.6 M909.3 809.5h1.6 M911.4 807.4h1.6 M913.2 805.6h1.6 M915.8 804.0h1.6 M917.6 801.9h1.6 M919.1 800.0h1.6 M921.3 798.6h1.6 M923.5 796.2h1.6 M925.4 795.3h1.6 M927.1 792.6h1.6 M928.8 790.8h1.6 M930.7 789.9h1.6 M859.8 880.3h1.6 M862.0 878.3h1.6 M863.6 876.5h1.6 M865.6 874.7h1.6 M867.5 872.5h1.6 M869.5 870.9h1.6 M871.5 868.7h1.6 M872.8 866.9h1.6 M875.4 865.9h1.6 M877.2 863.6h1.6 M879.3 862.2h1.6 M880.9 859.8h1.6 M882.6 858.2h1.6 M884.5 856.4h1.6 M886.8 855.1h1.6 M888.1 852.9h1.6 M890.0 850.6h1.6 M892.7 849.3h1.6 M894.8 847.4h1.6 M895.8 845.5h1.6 M898.3 844.2h1.6 M900.6 841.9h1.6 M902.0 839.8h1.6 M904.1 838.1h1.6 M905.6 836.1h1.6 M907.4 834.9h1.6 M909.4 833.4h1.6 M911.3 831.5h1.6 M913.3 828.8h1.6 M915.8 827.2h1.6 M917.7 825.4h1.6 M919.0 824.1h1.6 M921.6 822.4h1.6 M923.5 819.8h1.6 M925.3 818.6h1.6 M927.1 817.1h1.6 M928.8 815.3h1.6 M931.2 812.5h1.6 M854.7 906.3h1.6 M856.1 904.0h1.6 M858.7 902.1h1.6 M860.8 900.6h1.6 M862.0 898.7h1.6 M864.5 897.0h1.6 M866.5 895.0h1.6 M868.6 893.4h1.6 M870.4 891.9h1.6 M872.1 889.8h1.6 M874.5 888.6h1.6 M876.4 886.5h1.6 M877.9 884.2h1.6 M880.5 883.0h1.6 M882.3 880.9h1.6 M884.1 879.7h1.6 M886.3 877.6h1.6 M887.7 875.6h1.6 M890.2 873.8h1.6 M892.0 872.2h1.6 M894.2 870.7h1.6 M895.5 868.1h1.6 M897.5 866.7h1.6 M899.7 865.3h1.6 M902.0 862.8h1.6 M903.9 861.8h1.6 M905.9 859.7h1.6 M907.3 858.2h1.6 M909.8 856.3h1.6 M911.8 854.2h1.6 M913.0 852.6h1.6 M915.6 850.5h1.6 M917.5 849.4h1.6 M919.0 847.3h1.6 M921.4 845.4h1.6 M922.9 843.4h1.6 M925.4 842.1h1.6 M927.0 839.7h1.6 M929.3 838.6h1.6 M930.7 836.6h1.6 M858.8 942.0h1.6 M860.1 940.1h1.6 M861.5 937.8h1.6 M863.2 936.3h1.6 M865.2 934.3h1.6 M866.9 932.3h1.6 M868.4 929.8h1.6 M871.0 928.2h1.6 M871.8 926.5h1.6 M874.2 924.1h1.6 M875.8 922.3h1.6 M877.4 920.0h1.6 M878.7 919.1h1.6 M881.2 916.6h1.6 M882.7 914.4h1.6 M884.6 912.6h1.6 M886.5 911.0h1.6 M888.1 909.3h1.6 M889.3 906.4h1.6 M890.9 904.6h1.6 M892.5 902.5h1.6 M894.7 901.4h1.6 M896.4 899.5h1.6 M898.6 896.7h1.6 M900.0 895.0h1.6 M901.2 893.6h1.6 M903.1 891.3h1.6 M905.2 889.7h1.6 M907.0 887.2h1.6 M908.5 885.0h1.6 M910.7 883.9h1.6 M911.7 881.0h1.6 M913.5 879.4h1.6 M915.8 878.0h1.6 M917.5 875.2h1.6 M919.2 873.9h1.6 M920.8 872.2h1.6 M921.9 869.4h1.6 M924.3 868.2h1.6 M926.0 865.7h1.6 M927.6 864.2h1.6 M928.9 861.8h1.6 M930.8 859.6h1.6 M854.1 967.7h1.6 M855.8 966.2h1.6 M857.5 964.3h1.6 M859.4 961.6h1.6 M861.9 959.9h1.6 M863.7 958.5h1.6 M865.5 955.8h1.6 M866.8 953.8h1.6 M869.1 952.6h1.6 M870.6 950.3h1.6 M872.0 948.7h1.6 M874.0 946.5h1.6 M875.4 944.1h1.6 M877.1 942.7h1.6 M879.4 940.1h1.6 M881.5 938.3h1.6 M882.8 936.2h1.6 M884.4 934.9h1.6 M886.3 932.3h1.6 M888.2 930.5h1.6 M890.4 928.3h1.6 M892.3 926.3h1.6 M894.0 924.9h1.6 M895.1 922.8h1.6 M896.9 920.6h1.6 M898.6 918.7h1.6 M901.2 917.4h1.6 M902.9 914.5h1.6 M904.1 913.4h1.6 M905.6 911.2h1.6 M907.6 909.5h1.6 M909.1 907.4h1.6 M911.2 904.8h1.6 M912.7 903.5h1.6 M915.0 900.9h1.6 M916.7 899.6h1.6 M918.2 897.3h1.6 M919.9 895.0h1.6 M922.4 893.5h1.6 M923.6 890.9h1.6 M925.2 889.5h1.6 M927.4 887.2h1.6 M928.9 885.6h1.6 M931.2 883.8h1.6 M853.2 993.6h1.6 M855.5 991.9h1.6 M857.2 989.6h1.6 M859.1 987.9h1.6 M860.9 986.5h1.6 M862.3 983.6h1.6 M864.5 982.1h1.6 M866.2 979.9h1.6 M867.3 978.5h1.6 M869.2 975.9h1.6 M871.0 974.3h1.6 M872.4 972.3h1.6 M874.6 970.3h1.6 M876.0 968.5h1.6 M878.5 966.7h1.6 M879.7 964.6h1.6 M881.6 962.6h1.6 M883.0 960.8h1.6 M885.7 958.4h1.6 M887.0 956.5h1.6 M888.8 954.0h1.6 M891.0 952.2h1.6 M891.9 950.1h1.6 M893.8 948.8h1.6 M895.3 946.1h1.6 M897.7 944.3h1.6 M898.8 942.7h1.6 M901.1 940.6h1.6 M903.0 938.2h1.6 M904.9 936.9h1.6 M905.9 934.3h1.6 M908.1 932.7h1.6 M909.6 930.3h1.6 M911.5 928.4h1.6 M913.5 927.1h1.6 M914.8 924.9h1.6 M917.2 922.5h1.6 M919.0 921.3h1.6 M920.3 918.8h1.6 M922.5 916.9h1.6 M923.8 915.4h1.6 M926.0 912.8h1.6 M927.2 910.8h1.6 M929.2 909.5h1.6 M931.3 907.4h1.6 M695.5 867.6h1.6 M697.4 866.6h1.6 M702.0 866.8h1.6 M704.0 865.6h1.6 M707.8 865.1h1.6 M710.8 864.2h1.6 M713.8 864.4h1.6 M716.2 863.4h1.6 M720.9 864.0h1.6 M724.0 863.4h1.6 M726.9 863.3h1.6 M730.2 861.5h1.6 M732.9 861.5h1.6 M736.1 861.1h1.6 M739.1 861.7h1.6 M739.2 860.6h1.6 M741.9 860.0h1.6 M745.5 858.9h1.6 M747.3 858.6h1.6 M749.9 857.6h1.6 M754.1 856.5h1.6 M755.8 855.6h1.6 M759.1 854.2h1.6 M761.3 853.3h1.6 M764.5 852.8h1.6 M767.3 851.6h1.6 M769.9 851.2h1.6 M774.0 850.4h1.6 M776.4 849.6h1.6 M778.7 848.8h1.6 M782.0 847.7h1.6 M785.1 846.6h1.6 M787.5 845.4h1.6 M790.2 844.9h1.6 M793.3 844.1h1.6 M795.6 842.9h1.6 M799.8 841.8h1.6 M802.2 841.3h1.6 M804.6 841.2h1.6 M807.5 840.0h1.6 M810.2 837.9h1.6 M814.2 837.6h1.6 M815.7 836.7h1.6 M819.2 836.3h1.6 M821.6 834.6h1.6 M825.8 834.5h1.6 M827.4 833.0h1.6 M830.6 832.6h1.6 M833.8 832.0h1.6 M837.0 830.6h1.6 M839.8 830.1h1.6 M842.7 828.7h1.6 M845.6 828.2h1.6 M848.7 826.4h1.6 M848.6 826.2h1.6 M851.4 826.4h1.6 M853.9 826.2h1.6 M857.0 824.5h1.6 M860.3 824.5h1.6 M863.0 822.9h1.6 M865.7 822.2h1.6 M869.1 821.2h1.6 M871.5 820.8h1.6 M874.5 819.6h1.6 M878.1 819.7h1.6 M880.6 818.3h1.6 M883.1 817.3h1.6 M886.0 816.9h1.6 M889.6 815.3h1.6 M893.1 814.9h1.6 M896.0 815.0h1.6 M899.1 813.2h1.6 M901.2 813.5h1.6 M903.5 811.3h1.6 M907.4 811.3h1.6 M910.9 810.9h1.6 M913.3 810.5h1.6 M916.2 809.0h1.6 M919.4 808.0h1.6 M921.9 807.5h1.6 M924.8 807.3h1.6 M928.3 805.8h1.6 M930.4 804.8h1.6 M460.8 817.1h1.6 M463.9 815.4h1.6 M467.3 812.6h1.6 M469.3 810.6h1.6 M472.9 807.9h1.6 M475.0 806.4h1.6 M477.2 803.4h1.6 M481.3 802.0h1.6 M483.3 798.7h1.6 M486.7 797.4h1.6 M489.4 795.6h1.6 M492.3 792.5h1.6 M493.9 790.1h1.6 M497.2 788.2h1.6 M499.5 785.5h1.6 M500.2 786.2h1.6 M502.6 784.6h1.6 M505.8 780.8h1.6 M508.2 779.8h1.6 M510.8 777.4h1.6 M513.1 774.6h1.6 M517.3 772.9h1.6 M519.8 770.0h1.6 M522.3 768.4h1.6 M524.7 766.3h1.6 M527.9 764.7h1.6 M530.8 761.5h1.6 M532.8 758.9h1.6 M536.6 756.6h1.6 M538.4 754.5h1.6 M539.0 755.5h1.6 M542.1 756.4h1.6 M544.2 756.0h1.6 M548.2 757.3h1.6 M551.1 758.2h1.6 M553.1 759.0h1.6 M556.0 760.8h1.6 M559.7 760.8h1.6 M562.4 761.8h1.6 M564.7 763.4h1.6 M568.5 764.4h1.6 M571.2 764.7h1.6 M573.8 764.7h1.6 M577.8 766.8h1.6 M579.8 767.8h1.6 M583.5 767.7h1.6 M466.2 812.7h1.6 M468.8 810.4h1.6 M471.2 807.3h1.6 M474.7 804.7h1.6 M476.8 803.5h1.6 M479.9 801.0h1.6 M482.3 797.8h1.6 M485.3 795.5h1.6 M489.0 793.4h1.6 M491.2 790.8h1.6 M493.9 789.0h1.6 M496.5 786.2h1.6 M498.8 785.1h1.6 M502.0 781.9h1.6 M504.5 779.7h1.6 M504.6 779.3h1.6 M508.3 778.0h1.6 M510.6 776.8h1.6 M513.6 774.3h1.6 M517.8 772.3h1.6 M520.3 771.7h1.6 M523.9 768.8h1.6 M526.3 768.0h1.6 M529.4 766.6h1.6 M532.2 764.8h1.6 M535.8 761.9h1.6 M538.8 759.9h1.6 M542.3 758.4h1.6 M545.6 757.1h1.6 M431.5 829.0h1.6 M433.3 838.9h1.6 M435.2 848.5h1.6 M434.6 860.2h1.6 M434.5 871.1h1.6 M435.8 880.6h1.6 M437.4 889.2h1.6 M437.6 898.3h1.6 M436.7 901.4h1.6 M439.1 910.5h1.6 M440.0 919.8h1.6 M442.8 929.4h1.6 M444.4 937.5h1.6 M446.2 947.9h1.6 M434.5 832.9h1.6 M436.0 840.8h1.6 M439.3 851.4h1.6 M440.1 860.9h1.6 M438.0 867.7h1.6 M438.4 878.4h1.6 M441.8 886.3h1.6 M441.7 896.6h1.6 M390.6 769.2h1.6 M396.0 769.4h1.6 M400.4 768.6h1.6 M403.8 770.6h1.6 M410.7 769.8h1.6 M413.6 767.6h1.6 M419.0 767.9h1.6 M424.4 768.2h1.6 M428.6 767.8h1.6 M435.4 767.2h1.6 M441.0 768.2h1.6 M371.4 884.5h1.6 M374.5 887.7h1.6 M378.0 888.7h1.6 M382.7 892.6h1.6 M399.6 896.1h1.6 M403.7 900.0h1.6 M405.1 902.0h1.6 M408.2 905.8h1.6 M411.4 908.8h1.6 M868.0 447.8h3 M866.0 372.6h3 M873.8 442.3h1.5 M846.6 500.3h2 M888.8 447.6h3 M857.2 412.8h3 M863.2 459.1h3 M874.1 494.1h1.5 M858.3 456.6h3 M876.7 432.8h1.5 M830.1 430.3h3 M869.0 476.8h1.5 M874.8 479.0h1.5 M871.9 478.7h1.5 M861.2 430.8h2 M868.8 476.0h3 M865.1 445.3h3 M860.5 472.4h3 M880.1 485.1h2 M862.8 448.0h2 M868.6 443.6h3 M891.5 519.1h2 M871.6 448.6h2 M885.3 464.5h1.5 M879.3 468.0h1.5 M877.9 473.7h1.5 M876.6 482.3h3 M862.1 467.6h1.5 M884.2 469.7h2 M888.6 482.4h3 M861.4 451.9h2 M884.7 454.7h3 M861.8 476.8h1.5 M855.0 428.2h3 M861.4 441.4h1.5 M889.9 482.3h1.5 M872.4 413.7h2 M842.1 496.8h3 M887.4 417.6h1.5 M887.1 485.7h2 M867.4 436.5h1.5 M859.5 437.9h1.5 M855.1 477.1h2 M874.0 443.9h1.5 M886.8 470.6h3 M924.3 423.4h2 M897.9 433.0h2 M846.5 470.7h2 M851.2 433.5h1.5 M864.6 443.9h2 M858.1 437.1h1.5 M878.1 438.4h1.5 M867.8 456.2h3 M884.2 428.8h2 M871.6 466.2h1.5 M852.4 451.8h2 M869.8 459.7h1.5 M875.4 451.7h2 M895.1 465.9h3 M862.3 469.5h1.5 M850.6 446.0h2 M900.3 456.7h1.5 M905.8 457.6h3 M891.8 485.4h3 M858.8 426.3h2 M853.6 444.4h2 M846.5 456.8h2 M880.2 439.0h3 M877.6 463.1h3 M866.5 420.9h1.5 M860.3 436.5h3 M881.3 453.4h1.5 M854.2 445.0h1.5 M875.3 498.0h1.5 M875.4 445.9h1.5 M876.5 493.2h3 M849.0 455.3h1.5 M845.6 442.9h3 M848.1 450.4h1.5 M881.5 432.3h2 M879.8 482.2h3 M862.4 417.2h1.5 M841.3 407.8h3 M890.6 490.7h2 M830.2 431.2h1.5 M844.1 436.0h1.5 M853.4 478.2h2 M869.2 481.4h1.5 M856.9 398.0h2 M860.7 492.0h2 M873.4 453.8h1.5 M837.1 429.6h2 M880.2 495.6h2 M876.2 423.1h1.5 M871.5 448.0h2 M849.8 451.0h2 M867.2 450.8h3 M859.5 473.8h2 M870.4 447.5h3 M868.7 480.6h3 M841.0 466.3h3 M843.3 467.5h2 M888.7 490.7h1.5 M888.4 508.0h3 M854.2 414.6h3 M881.2 440.3h3 M868.9 439.3h2 M881.7 463.3h1.5 M850.8 455.9h1.5 M869.3 452.2h1.5 M852.3 430.4h3 M854.7 471.7h1.5 M862.3 432.0h1.5 M882.4 438.0h1.5 M856.2 477.6h2 M883.7 442.1h1.5 M874.7 502.8h3 M848.7 459.5h2 M880.0 453.0h2 M856.1 444.7h1.5 M868.2 507.1h3 M876.1 463.8h3 M877.2 478.8h1.5 M856.3 455.1h3 M850.2 439.4h1.5 M871.9 458.7h3 M873.5 453.2h1.5 M871.2 425.2h3 M889.6 488.2h1.5 M892.7 423.5h3 M902.6 493.6h2 M866.8 429.1h3 M868.9 507.0h3 M863.6 461.6h2 M853.3 410.4h2 M836.2 448.9h1.5 M876.6 459.9h1.5 M898.3 467.8h2 M855.5 468.4h2 M886.0 448.8h1.5 M863.9 476.5h3 M848.2 437.7h2 M876.7 467.1h1.5 M857.0 444.9h2 M882.1 459.7h3 M840.8 472.3h1.5 M874.9 441.9h1.5 M866.1 475.8h1.5 M869.1 424.6h1.5 M865.0 441.1h2 M838.0 466.8h2 M882.2 435.4h1.5 M868.3 466.3h1.5 M863.1 451.0h3 M863.6 467.8h1.5 M865.2 491.4h1.5 M846.3 410.7h1.5 M854.9 498.2h1.5 M858.9 436.0h3 M870.9 444.6h2 M869.8 448.6h3 M859.1 480.0h3 M839.3 484.4h1.5 M880.9 464.6h3 M873.1 458.6h3 M860.9 412.1h1.5 M875.3 467.6h1.5 M839.7 442.5h2 M874.2 436.4h3 M855.2 411.3h1.5 M856.8 428.0h2 M870.6 491.7h3 M864.2 457.9h3 M858.6 494.1h3 M856.4 460.7h3 M856.2 451.5h2 M885.0 463.8h3 M883.0 400.4h1.5 M878.8 459.6h1.5 M887.4 449.9h1.5 M884.5 472.6h3 M870.0 440.2h3 M862.3 466.8h1.5 M888.3 428.8h1.5 M854.3 450.6h3 M846.7 452.9h2 M880.1 447.1h1.5 M853.5 500.8h1.5 M866.6 454.1h3 M887.2 444.3h2 M886.0 473.9h2 M880.1 448.2h3 M860.5 443.9h2 M891.4 468.8h1.5 M869.2 474.4h2 M860.1 440.2h2 M872.1 489.5h1.5 M833.4 457.3h2 M875.8 456.3h2 M865.3 478.4h2 M875.9 446.9h2 M859.7 426.4h2 M869.2 465.9h1.5 M882.5 430.2h1.5 M873.6 412.3h1.5 M860.4 461.4h2 M857.3 415.5h1.5 M870.0 458.0h2 M882.3 493.4h1.5 M868.1 431.2h2 M879.5 472.6h3 M861.5 407.9h1.5 M859.4 447.6h3 M866.5 451.4h3 M851.8 436.3h3 M870.4 461.5h2 M874.7 464.2h2 M886.0 457.1h1.5 M877.8 493.4h1.5 M855.4 432.5h1.5 M839.8 442.4h1.5 M861.9 470.0h1.5 M866.6 438.6h1.5 M879.8 462.8h1.5 M869.6 465.5h3 M879.3 455.2h2 M859.7 423.6h3 M865.3 478.4h2 M898.3 460.2h3 M866.2 482.5h3 M832.8 480.6h2 M870.1 409.1h1.5 M885.1 441.9h1.5 M841.3 417.0h2 M859.6 419.5h1.5 M878.1 429.0h1.5 M882.5 426.6h3 M890.0 474.8h2 M861.5 432.6h3 M852.0 512.7h1.5 M846.6 458.4h2 M847.9 450.9h2 M870.1 492.2h3 M877.6 444.0h1.5 M853.6 472.6h3 M852.9 416.4h1.5 M855.1 433.0h1.5 M890.7 444.9h2 M882.3 446.8h3 M856.5 481.3h3 M869.5 471.4h3 M861.3 468.6h1.5 M872.3 442.7h1.5 M880.7 490.1h1.5 M850.1 418.8h3 M871.0 453.5h2 M848.7 489.7h2 M874.2 469.2h2 M857.9 471.6h3 M874.0 432.0h2 M861.7 440.0h2 M891.1 463.1h2 M851.9 424.9h1.5 M868.5 444.5h3 M879.9 481.3h3 M869.1 481.3h2 M871.6 441.5h3 M873.9 489.2h1.5 M857.2 444.2h3 M866.0 478.5h1.5 M866.4 483.3h3 M848.5 417.3h1.5 M894.2 508.2h2 M857.3 439.7h1.5 M865.0 434.4h1.5 M865.1 437.7h2 M849.4 467.1h2 M859.1 474.7h3 M882.3 485.8h3 M863.2 452.6h1.5 M865.2 465.4h2 M854.7 474.8h2 M887.8 449.4h1.5 M883.0 481.1h2 M863.1 432.3h2 M870.5 466.5h2 M850.1 455.1h1.5 M856.2 420.5h2 M835.0 435.6h2 M843.8 438.3h2 M875.8 471.4h1.5 M865.6 455.6h2 M889.3 484.5h3 M841.2 464.0h1.5 M863.8 430.2h1.5 M844.3 439.7h3 M877.8 479.4h1.5 M873.8 449.8h2 M875.3 487.3h3 M867.0 478.5h2 M861.5 439.0h2 M852.4 452.4h1.5 M864.0 474.0h2 M877.5 415.6h2 M865.3 469.3h1.5 M853.9 449.1h2 M854.9 423.3h1.5 M850.1 485.8h1.5 M845.4 462.5h3 M880.4 467.7h3 M901.6 490.7h2 M878.3 464.3h2 M861.9 493.0h3 M856.2 439.4h3 M839.1 467.5h1.5 M880.6 504.1h1.5 M896.5 479.6h1.5 M874.9 433.9h1.5 M885.0 447.8h1.5 M845.5 452.8h3 M867.8 414.8h3 M872.4 447.7h3 M869.9 469.1h1.5 M870.0 468.5h1.5 M849.1 471.2h2 M863.6 431.9h2 M870.9 465.5h3 M873.9 470.0h2 M865.0 474.1h3 M874.9 423.8h3 M886.8 506.3h2 M858.1 450.5h3 M882.8 458.7h1.5 M863.9 469.3h2 M871.1 488.5h1.5 M870.7 471.6h1.5 M847.6 468.3h1.5 M881.6 466.8h3 M912.3 432.0h3 M855.7 451.7h2 M894.0 469.2h1.5 M871.7 477.5h2 M852.7 436.9h1.5 M873.1 485.1h1.5 M856.9 445.6h3 M836.1 413.5h2 M871.0 471.7h2 M880.8 467.9h2 M854.7 457.2h2 M879.4 499.0h2 M876.7 424.3h2 M883.7 479.1h1.5 M854.2 439.5h1.5 M887.1 470.6h2 M863.2 446.6h3 M871.1 450.6h3 M863.3 444.6h1.5 M864.6 448.3h1.5 M884.7 421.4h2 M864.2 474.7h1.5 M873.4 451.1h2 M865.6 487.1h2 M859.2 458.7h3 M879.1 465.6h1.5 M864.0 486.9h1.5 M888.3 442.0h3 M836.4 449.5h1.5 M871.9 463.9h3 M847.3 437.1h1.5 M875.9 467.6h2 M883.8 461.6h3 M855.6 452.6h1.5 M885.0 478.2h1.5 M869.0 499.7h3 M866.7 449.3h1.5 M880.2 470.7h1.5 M888.1 471.6h3 M873.8 477.6h1.5 M874.2 434.7h1.5 M903.5 470.7h2 M868.9 452.2h1.5 M878.7 483.7h1.5 M876.0 477.9h1.5 M877.8 512.8h3 M848.0 510.2h1.5 M872.4 432.6h2 M854.7 451.3h1.5 M868.2 423.9h1.5 M871.2 453.1h2 M869.5 448.1h3 M887.5 457.2h2 M856.4 420.0h1.5 M866.7 494.5h2 M888.5 440.8h3 M854.5 440.8h3 M874.5 412.2h2 M867.8 425.7h3 M896.7 440.6h2 M887.1 497.9h3 M887.4 491.3h3 M891.2 437.6h3 M894.4 377.1h3 M888.4 408.9h2 M876.1 451.5h3 M864.1 376.5h3 M845.6 391.7h2 M914.0 452.8h1.5 M859.6 444.2h2 M863.2 448.3h1.5 M906.7 469.6h2 M869.8 417.8h1.5 M901.1 447.1h2 M859.0 465.1h1.5 M912.5 492.8h1.5 M847.2 494.8h2 M873.4 463.0h3 M877.1 475.0h3 M893.6 393.6h1.5 M882.4 447.0h1.5 M899.9 466.2h3 M891.9 417.7h2 M881.0 376.6h3 M844.0 498.3h2 M880.0 429.3h3 M875.4 469.3h2 M861.2 483.2h3 M888.2 431.9h3 M861.2 438.8h1.5 M929.4 482.0h3 M902.8 475.2h2 M879.5 376.9h1.5 M912.2 436.4h1.5 M905.5 491.3h3 M900.4 495.4h2 M872.0 419.7h3 M916.1 460.2h2 M858.2 379.4h3 M866.3 403.8h3 M850.5 502.1h2 M902.2 493.1h1.5 M891.3 410.2h1.5 M898.8 516.9h1.5 M906.5 505.4h1.5 M828.1 374.4h2 M900.6 442.1h2 M907.0 421.1h3 M873.4 480.1h1.5 M875.1 407.3h2 M836.6 500.0h2 M928.4 514.3h3 M839.7 456.4h3 M904.5 457.9h3 M853.6 445.9h3 M876.5 450.5h2 M848.7 503.0h3 M903.3 376.4h1.5 M882.4 512.2h1.5 M847.1 422.3h2 M849.1 510.7h2 M893.0 433.6h3 M873.7 404.3h3 M901.4 470.4h3 M902.9 506.1h3 M869.6 375.9h2 M909.0 391.0h2 M861.2 466.0h2 M875.6 462.7h1.5 M855.3 427.2h3 M903.5 434.3h1.5 M880.1 455.6h2 M886.8 446.0h3 M868.8 394.5h2 M894.1 509.5h3 M896.4 373.0h1.5 M885.9 465.1h2 M918.2 413.4h3 M869.9 462.9h3 M873.9 381.7h3 M916.4 413.8h3 M861.4 409.1h3 M889.1 473.0h1.5 M864.4 479.1h1.5 M860.3 485.9h1.5 M890.5 489.0h1.5 M857.1 452.8h2 M856.6 408.2h1.5 M930.4 474.1h1.5 M864.2 442.5h2 M915.0 440.9h1.5 M893.9 516.1h1.5 M850.1 405.9h1.5 M886.1 435.1h3 M882.3 482.1h3 M883.4 461.0h1.5 M860.8 466.3h3 M853.8 468.5h1.5 M910.7 470.4h1.5 M910.3 412.7h1.5 M876.2 463.8h2 M660.0 505.1h1.5 M646.5 481.2h2 M655.1 506.4h2 M667.6 485.1h2.5 M661.0 492.8h2 M675.8 493.5h2.5 M647.7 480.8h2.5 M642.9 496.2h2.5 M642.7 499.7h1.5 M656.4 493.5h2 M645.0 493.0h2.5 M641.8 493.2h1.5 M656.4 485.3h2 M642.2 492.3h2 M652.4 482.2h1.5 M658.1 483.1h2 M638.4 491.7h2 M629.7 474.4h1.5 M639.7 471.0h2.5 M627.0 497.7h2 M663.8 508.2h2 M649.5 493.1h1.5 M645.6 481.0h1.5 M674.3 493.0h1.5 M643.9 492.6h2.5 M642.8 491.3h2 M638.5 501.8h2 M628.1 493.2h1.5 M657.5 492.3h2 M643.1 494.8h2.5 M631.0 496.3h2.5 M635.7 473.7h1.5 M627.8 485.9h2 M657.9 503.4h2.5 M670.2 491.1h2 M642.4 482.5h1.5 M660.1 499.2h2 M657.5 494.6h1.5 M666.1 492.4h2.5 M656.9 480.6h2.5 M641.7 486.6h1.5 M649.3 489.6h1.5 M620.8 504.4h1.5 M648.7 489.3h2.5 M627.8 476.6h2 M663.2 494.6h2 M648.3 487.8h2.5 M654.4 494.9h2.5 M656.7 501.2h1.5 M613.0 490.6h2 M648.8 491.7h1.5 M623.6 486.3h2.5 M630.1 487.3h2.5 M652.1 493.4h2.5 M636.4 485.4h2.5 M671.1 492.7h1.5 M654.4 501.9h2 M653.6 505.7h2.5 M651.9 501.2h1.5 M643.5 489.5h2.5 M644.3 495.2h2.5 M650.0 510.5h1.5 M657.5 495.9h2 M648.6 486.9h2.5 M636.8 488.3h1.5 M653.5 492.2h1.5 M638.2 478.0h1.5 M632.7 490.7h2 M664.2 486.6h1.5 M667.7 484.7h1.5 M670.8 483.1h2.5 M668.4 506.9h1.5 M662.3 511.5h2 M647.7 496.8h2 M649.9 490.2h2 M660.5 497.5h2.5 M639.2 483.5h2.5 M648.2 484.8h1.5 M665.3 492.9h2 M651.5 510.6h2 M672.0 492.2h1.5 M667.2 481.8h2.5 M650.0 494.1h2 M636.7 495.7h1.5 M612.6 486.6h1.5 M649.1 494.9h2.5 M615.9 486.9h2 M663.4 487.5h2.5 M656.2 495.3h2 M644.7 482.7h1.5 M656.7 491.6h2 M641.6 488.4h2.5 M645.0 500.8h2 M647.9 494.1h2.5 M661.4 482.4h2.5 M667.6 489.1h2.5 M651.3 494.7h1.5 M644.0 484.8h1.5 M645.8 480.9h1.5 M643.0 495.8h1.5 M619.4 490.8h2 M650.8 495.7h2 M630.9 500.5h1.5 M626.7 496.9h1.5 M658.0 484.3h2 M649.7 490.0h1.5 M655.5 495.8h2 M642.6 485.6h1.5 M651.1 489.1h1.5 M659.2 503.1h2.5 M643.8 498.5h1.5 M651.9 495.2h1.5 M626.4 537.0h2 M613.5 528.8h2 M658.4 533.9h2 M608.7 516.0h2 M610.3 510.9h2 M608.5 521.9h2 M606.9 518.9h2 M628.7 536.8h2 M655.5 535.9h2 M606.6 518.5h2 M626.2 537.6h2 M644.1 536.6h2 M644.8 537.6h2 M628.4 537.3h2 M616.3 535.0h2 M663.6 536.5h2 M607.4 516.6h2 M664.1 534.9h2 M656.0 537.1h2 M609.1 522.4h2 M655.9 537.2h2 M649.2 536.6h2 M623.5 533.0h2 M660.1 535.6h2 M616.1 535.4h2 M615.6 529.0h2 M644.8 539.5h2 M608.7 531.0h2 M606.1 509.8h2 M658.8 539.4h2 M616.2 530.7h2 M651.3 539.9h2 M645.1 536.0h2 M639.6 540.3h2 M618.2 534.9h2 M660.0 536.2h2 M634.5 536.0h2 M607.9 525.0h2 M657.8 539.8h2 M619.8 532.0h2 M667.2 535.2h2 M618.5 530.3h2 M617.2 534.6h2 M615.4 530.2h2 M615.6 532.9h2 M610.3 525.2h2 M600.2 517.8h2 M601.3 521.4h2 M627.2 538.6h2 M648.4 536.6h2 M606.1 529.3h2 M658.1 535.2h2 M663.5 535.1h2 M652.4 536.1h2 M603.8 520.8h2 M608.9 511.8h2 M610.7 523.7h2 M610.7 511.8h2 M618.1 533.4h2 M608.5 511.2h2 M609.7 509.1h2 M645.7 540.0h2 M647.7 540.9h2 M621.5 533.0h2 M610.5 511.1h2 M625.3 534.9h2 M610.9 524.2h2 M629.2 534.9h2 M609.6 517.2h2 M611.2 527.3h2 M619.8 534.4h2 M608.7 522.4h2 M642.3 536.2h2 M611.9 511.5h2 M654.0 537.7h2 M607.3 530.1h2 M660.4 534.7h2 M650.9 538.4h2 M620.8 533.9h2 M604.6 513.7h2 M601.1 514.7h2 M639.2 540.4h2 M626.6 533.6h2 M610.5 513.4h2 M664.0 533.9h2 M636.6 540.3h2 M606.3 514.9h2 M611.4 532.5h2 M603.1 517.8h2 M618.0 530.7h2 M814.7 560.2h1.6 M816.3 559.3h1.6 M817.7 558.5h1.6 M818.2 556.6h1.6 M820.1 556.1h1.6 M820.5 555.2h1.6 M821.8 553.7h1.6 M823.0 553.0h1.6 M824.5 551.6h1.6 M825.7 551.1h1.6 M826.6 550.2h1.6 M828.1 548.5h1.6 M829.0 548.2h1.6 M830.4 547.1h1.6 M831.0 546.5h1.6 M832.8 544.7h1.6 M833.6 544.5h1.6 M834.5 542.9h1.6 M836.5 542.4h1.6 M836.9 541.2h1.6 M838.2 540.2h1.6 M839.8 538.6h1.6 M840.4 537.7h1.6 M841.6 536.5h1.6 M842.6 535.9h1.6 M844.1 534.6h1.6 M845.4 534.4h1.6 M846.6 532.9h1.6 M847.9 531.9h1.6 M848.5 531.0h1.6 M849.5 530.2h1.6 M817.7 565.9h1.6 M819.6 565.3h1.6 M820.6 564.2h1.6 M821.6 563.3h1.6 M823.1 561.8h1.6 M824.0 561.0h1.6 M824.7 560.5h1.6 M826.2 559.6h1.6 M827.6 558.3h1.6 M828.1 556.8h1.6 M829.6 556.5h1.6 M830.4 554.9h1.6 M831.3 554.0h1.6 M833.2 552.9h1.6 M833.9 552.2h1.6 M835.5 551.9h1.6 M835.9 550.1h1.6 M838.0 550.0h1.6 M838.4 548.4h1.6 M839.9 547.4h1.6 M840.9 546.6h1.6 M841.9 545.2h1.6 M842.9 544.3h1.6 M844.1 543.8h1.6 M845.8 542.5h1.6 M847.1 542.0h1.6 M847.8 540.8h1.6 M848.8 540.2h1.6 M850.3 538.4h1.6 M851.0 538.1h1.6 M852.4 537.1h1.6 M853.4 536.2h1.6 M855.2 534.6h1.6 M856.1 533.7h1.6 M850.2 530.3h1.6 M851.7 529.1h1.6 M852.3 528.9h1.6 M854.2 527.8h1.6 M855.2 527.6h1.6 M856.5 527.0h1.6 M858.0 526.0h1.6 M859.5 525.7h1.6 M861.2 524.5h1.6 M862.6 524.1h1.6 M863.5 523.9h1.6 M865.3 523.2h1.6 M866.9 522.2h1.6 M867.7 522.0h1.6 M869.0 520.9h1.6 M870.4 520.9h1.6 M872.3 520.2h1.6 M815.5 560.3h1.6 M815.2 561.3h1.6 M816.1 562.6h1.6 M816.4 564.1h1.6 M816.2 566.0h1.6 M816.7 567.9h1.6 M817.9 569.0h1.6 M817.6 570.1h1.6 M818.3 572.0h1.6 M818.6 573.7h1.6 M819.2 575.3h1.6 M819.2 576.1h1.6 M819.9 578.0h1.6 M904.8 470.2h1.6 M906.0 469.1h1.6 M907.6 468.7h1.6 M909.2 467.6h1.6 M910.1 467.4h1.6 M911.9 466.4h1.6 M912.4 465.5h1.6 M914.2 464.5h1.6 M914.9 464.5h1.6 M917.1 462.9h1.6 M918.0 462.6h1.6 M919.1 461.3h1.6 M920.9 461.3h1.6 M921.8 459.8h1.6 M923.1 459.1h1.6 M925.0 458.3h1.6 M925.6 458.3h1.6 M926.7 456.9h1.6 M928.0 456.2h1.6 M929.7 456.1h1.6 M930.7 454.7h1.6 M903.3 479.9h1.6 M904.2 478.9h1.6 M905.5 479.1h1.6 M906.8 477.7h1.6 M908.8 477.6h1.6 M910.4 476.5h1.6 M911.9 475.9h1.6 M912.6 475.1h1.6 M914.4 474.6h1.6 M915.2 473.4h1.6 M917.5 472.6h1.6 M918.7 472.1h1.6 M919.5 471.4h1.6 M921.2 471.4h1.6 M922.2 470.6h1.6 M923.8 469.2h1.6 M925.6 468.6h1.6 M926.5 468.0h1.6 M928.5 467.8h1.6 M929.7 466.2h1.6 M931.3 466.1h1.6 M394.5 542.5h1.6 M394.7 543.7h1.6 M396.2 544.3h1.6 M396.5 545.7h1.6 M397.4 547.1h1.6 M398.0 548.2h1.6 M399.9 549.7h1.6 M400.5 551.6h1.6 M401.5 552.1h1.6 M402.6 554.1h1.6 M403.6 555.3h1.6 M449.3 520.4h1.6 M448.9 521.7h1.6 M449.2 523.5h1.6 M449.1 524.7h1.6 M449.6 526.6h1.6 M449.8 528.2h1.6 M450.5 529.8h1.6 M449.9 531.5h1.6 M450.8 532.7h1.6 M450.9 533.5h1.6 M451.3 535.7h1.6 M451.0 537.0h1.6 M451.6 539.1h1.6 M451.9 540.0h1.6 M451.4 541.6h1.6 M451.3 543.2h1.6 M451.4 545.4h1.6 M469.7 519.5h1.6 M470.0 521.8h1.6 M470.6 523.0h1.6 M471.4 524.9h1.6 M472.5 525.8h1.6 M472.7 528.0h1.6 M473.0 529.5h1.6 M473.8 530.3h1.6 M474.4 532.1h1.6 M474.0 533.6h1.6 M475.4 535.0h1.6 M497.0 499.9h1.6 M496.8 501.7h1.6 M495.4 502.8h1.6 M495.0 505.1h1.6 M494.7 505.5h1.6 M494.4 506.9h1.6 M493.4 508.9h1.6 M492.9 510.4h1.6 M491.5 512.0h1.6" stroke="#f00" stroke-width="1.6" fill="none"/>
<path d="M643.0 74.6h1 M655.0 72.5h1 M667.0 70.5h1 M671.0 69.8h1 M683.0 67.8h1 M687.0 67.1h1 M691.0 66.4h1 M699.0 65.0h1 M703.0 64.4h1 M707.0 63.7h1 M715.0 62.3h1 M735.0 58.9h1 M755.0 55.5h1 M763.0 54.2h1 M573.6 83.8h1 M585.6 81.8h1 M597.6 79.7h1 M605.6 78.4h1 M609.6 77.7h1 M613.6 77.0h1 M617.6 76.3h1 M621.6 75.7h1 M625.6 75.0h1 M629.6 74.3h1 M633.6 73.6h1 M645.6 71.6h1 M649.6 70.9h1 M653.6 70.2h1 M657.6 69.5h1 M669.6 67.5h1 M693.6 63.4h1 M705.6 61.4h1 M713.6 60.0h1 M717.6 59.3h1 M721.6 58.7h1 M733.6 56.6h1 M737.6 55.9h1 M749.6 53.9h1 M757.6 52.5h1 M761.6 51.9h1 M765.6 51.2h1 M769.6 50.5h1 M777.6 49.1h1 M781.6 48.5h1 M452.9 103.7h1 M456.9 103.1h1 M460.9 102.4h1 M464.9 101.7h1 M468.9 101.0h1 M476.9 99.7h1 M484.9 98.3h1 M488.9 97.6h1 M496.9 96.3h1 M500.9 95.6h1 M504.9 94.9h1 M516.9 92.9h1 M520.9 92.2h1 M524.9 91.5h1 M528.9 90.8h1 M536.9 89.5h1 M540.9 88.8h1 M592.6 124.6h1 M604.6 122.5h1 M608.6 121.8h1 M612.6 121.2h1 M632.6 117.8h1 M636.6 117.1h1 M589.3 142.3h1 M597.3 141.0h1 M601.3 140.3h1 M605.3 139.6h1 M609.3 138.9h1 M621.3 136.9h1 M625.3 136.2h1 M629.3 135.5h1 M633.3 134.8h1 M637.3 134.2h1 M645.3 132.8h1 M649.3 132.1h1 M661.3 130.1h1 M665.3 129.4h1 M669.3 128.7h1 M681.3 126.7h1 M685.3 126.0h1 M689.3 125.3h1 M693.3 124.6h1 M701.3 123.3h1 M705.3 122.6h1 M709.3 121.9h1 M717.3 120.6h1 M725.3 119.2h1 M729.3 118.5h1 M733.3 117.8h1 M741.3 116.5h1 M745.3 115.8h1 M749.3 115.1h1 M753.3 114.4h1 M578.7 160.6h1 M586.7 159.2h1 M590.7 158.5h1 M602.7 156.5h1 M606.7 155.8h1 M626.7 152.4h1 M630.7 151.7h1 M634.7 151.1h1 M638.7 150.4h1 M650.7 148.3h1 M654.7 147.7h1 M658.7 147.0h1 M674.7 144.3h1 M682.7 142.9h1 M686.7 142.2h1 M690.7 141.5h1 M694.7 140.9h1 M710.7 138.1h1 M714.7 137.5h1 M718.7 136.8h1 M722.7 136.1h1 M730.7 134.7h1 M734.7 134.1h1 M742.7 132.7h1 M746.7 132.0h1 M758.7 130.0h1 M770.7 127.9h1 M774.7 127.3h1 M794.7 123.9h1 M798.7 123.2h1 M624.5 171.7h1 M628.5 171.0h1 M636.5 169.7h1 M652.5 166.9h1 M672.5 163.5h1 M522.6 186.6h1 M530.6 185.3h1 M538.6 183.9h1 M546.6 182.5h1 M550.6 181.9h1 M558.6 180.5h1 M570.6 178.5h1 M590.6 175.1h1 M598.6 173.7h1 M606.6 172.3h1 M610.6 171.7h1 M614.6 171.0h1 M622.6 169.6h1 M630.6 168.3h1 M642.6 166.2h1 M646.6 165.5h1 M654.6 164.2h1 M662.6 162.8h1 M666.6 162.1h1 M682.6 159.4h1 M698.6 156.7h1 M706.6 155.3h1 M714.6 154.0h1 M718.6 153.3h1 M469.1 210.0h1 M477.1 208.6h1 M485.1 207.3h1 M493.1 205.9h1 M497.1 205.2h1 M505.1 203.9h1 M509.1 203.2h1 M513.1 202.5h1 M525.1 200.5h1 M529.1 199.8h1 M533.1 199.1h1 M545.1 197.1h1 M553.1 195.7h1 M557.1 195.0h1 M565.1 193.7h1 M569.1 193.0h1 M573.1 192.3h1 M577.1 191.6h1 M581.1 191.0h1 M589.1 189.6h1 M597.1 188.2h1 M605.1 186.9h1 M629.1 182.8h1 M637.1 181.4h1 M641.1 180.8h1 M614.1 227.4h1 M618.1 226.8h1 M634.1 224.0h1 M646.1 222.0h1 M650.1 221.3h1 M654.1 220.6h1 M658.1 220.0h1 M662.1 219.3h1 M666.1 218.6h1 M670.1 217.9h1 M686.1 215.2h1 M694.1 213.8h1 M706.1 211.8h1 M718.1 209.8h1 M722.1 209.1h1 M726.1 208.4h1 M730.1 207.7h1 M734.1 207.0h1 M738.1 206.4h1 M742.1 205.7h1 M762.1 202.3h1 M774.1 200.2h1 M786.1 198.2h1 M794.1 196.8h1 M802.1 195.5h1 M451.4 245.1h1 M455.4 244.4h1 M459.4 243.7h1 M491.4 238.3h1 M495.4 237.6h1 M499.4 236.9h1 M583.5 257.5h1 M599.5 254.8h1 M603.5 254.1h1 M607.5 253.4h1 M615.5 252.1h1 M623.5 250.7h1 M631.5 249.3h1 M635.5 248.7h1 M626.3 273.9h1 M634.3 272.5h1 M638.3 271.8h1 M642.3 271.2h1 M670.3 266.4h1 M682.3 264.4h1 M468.2 291.0h1 M480.2 289.0h1 M484.2 288.3h1 M496.2 286.3h1 M500.2 285.6h1 M504.2 284.9h1 M508.2 284.2h1 M512.2 283.6h1 M516.2 282.9h1 M524.2 281.5h1 M532.2 280.2h1 M536.2 279.5h1 M540.2 278.8h1 M544.2 278.1h1 M548.2 277.4h1 M610.9 307.8h1 M614.9 307.1h1 M626.9 305.1h1 M630.9 304.4h1 M634.9 303.7h1 M638.9 303.0h1 M642.9 302.3h1 M650.9 301.0h1 M654.9 300.3h1 M658.9 299.6h1 M666.9 298.3h1 M670.9 297.6h1 M674.9 296.9h1 M678.9 296.2h1 M690.9 294.2h1 M694.9 293.5h1 M698.9 292.8h1 M702.9 292.1h1 M714.9 290.1h1 M722.9 288.7h1 M726.9 288.1h1 M730.9 287.4h1 M734.9 286.7h1 M746.9 284.7h1 M750.9 284.0h1 M758.9 282.6h1 M766.9 281.3h1 M774.9 279.9h1 M778.9 279.2h1 M782.9 278.5h1 M786.9 277.9h1 M790.9 277.2h1 M802.9 275.1h1 M806.9 274.5h1 M814.9 273.1h1 M615.9 326.2h1 M619.9 325.5h1 M623.9 324.8h1 M635.9 322.8h1 M639.9 322.1h1 M643.9 321.4h1 M647.9 320.8h1 M655.9 319.4h1 M663.9 318.0h1 M675.9 316.0h1 M679.9 315.3h1 M683.9 314.6h1 M687.9 314.0h1 M707.9 310.6h1 M719.9 308.5h1 M723.9 307.8h1 M727.9 307.2h1 M739.9 305.1h1 M747.9 303.8h1" stroke="#a01010" stroke-width="1" fill="none" opacity="0.8"/>
<path d="M658.0 471.6 L660.0 471.6 L662.0 471.6 L664.0 471.6 L666.0 471.6 L668.0 471.5 L670.0 471.5 L672.0 471.5 L674.0 471.4 L676.0 471.4 L678.0 471.3 L680.0 471.3 L682.0 471.3 L684.0 471.2 L686.0 471.2 L688.0 471.1 L690.0 471.1 L692.0 471.0 L694.0 471.0 L696.0 470.9 L698.0 470.9 L700.0 470.8 L702.0 470.8 L704.0 470.7 L706.0 470.7 L708.0 470.6 L710.0 470.6 L712.0 470.5 L714.0 470.5 L716.0 470.4 L718.0 470.4 L720.0 470.3 L722.0 470.3 L724.0 470.2 L726.0 470.2 L728.0 470.1 L730.0 470.1 L732.0 470.0 L734.0 470.0 L736.0 469.9 L738.0 469.9 L740.0 469.8 L742.0 469.8 L744.0 469.7 L746.0 469.7 L748.0 469.6 L750.0 469.6 L752.0 469.5 L754.0 469.5 L756.0 469.4 L758.0 469.4 M658.0 471.0 L660.0 471.0 L662.0 471.0 L664.0 471.0 L666.0 470.9 L668.0 470.9 L670.0 470.8 L672.0 470.7 L674.0 470.6 L676.0 470.5 L678.0 470.4 L680.0 470.3 L682.0 470.2 L684.0 470.1 L686.0 470.0 L688.0 469.9 L690.0 469.8 L692.0 469.6 L694.0 469.5 L696.0 469.4 L698.0 469.3 L700.0 469.2 L702.0 469.1 L704.0 468.9 L706.0 468.8 L708.0 468.7 L710.0 468.6 L712.0 468.4 L714.0 468.3 L716.0 468.2 L718.0 468.1 L720.0 468.0 L722.0 467.8 L724.0 467.7 L726.0 467.6 L728.0 467.5 L730.0 467.3 L732.0 467.2 L734.0 467.1 L736.0 467.0 L738.0 466.8 L740.0 466.7 L742.0 466.6 L744.0 466.5 L746.0 466.3 L748.0 466.2 L750.0 466.1 L752.0 466.0 L754.0 465.8 L756.0 465.7 L758.0 465.6 L760.0 465.5 M658.0 470.5 L660.0 470.5 L662.0 470.4 L664.0 470.4 L666.0 470.3 L668.0 470.2 L670.0 470.1 L672.0 469.9 L674.0 469.8 L676.0 469.6 L678.0 469.5 L680.0 469.3 L682.0 469.1 L684.0 469.0 L686.0 468.8 L688.0 468.6 L690.0 468.4 L692.0 468.3 L694.0 468.1 L696.0 467.9 L698.0 467.7 L700.0 467.5 L702.0 467.3 L704.0 467.1 L706.0 466.9 L708.0 466.7 L710.0 466.5 L712.0 466.4 L714.0 466.2 L716.0 466.0 L718.0 465.8 L720.0 465.6 L722.0 465.4 L724.0 465.2 L726.0 465.0 L728.0 464.8 L730.0 464.6 L732.0 464.4 L734.0 464.2 L736.0 464.0 L738.0 463.8 L740.0 463.6 L742.0 463.4 L744.0 463.2 L746.0 463.0 L748.0 462.8 L750.0 462.6 L752.0 462.4 L754.0 462.2 L756.0 462.0 L758.0 461.8 L760.0 461.6 L762.0 461.4 M658.0 469.9 L660.0 469.9 L662.0 469.9 L664.0 469.8 L666.0 469.6 L668.0 469.5 L670.0 469.3 L672.0 469.2 L674.0 469.0 L676.0 468.8 L678.0 468.5 L680.0 468.3 L682.0 468.1 L684.0 467.8 L686.0 467.6 L688.0 467.4 L690.0 467.1 L692.0 466.9 L694.0 466.6 L696.0 466.3 L698.0 466.1 L700.0 465.8 L702.0 465.6 L704.0 465.3 L706.0 465.0 L708.0 464.8 L710.0 464.5 L712.0 464.2 L714.0 464.0 L716.0 463.7 L718.0 463.4 L720.0 463.2 L722.0 462.9 L724.0 462.6 L726.0 462.4 L728.0 462.1 L730.0 461.8 L732.0 461.5 L734.0 461.3 L736.0 461.0 L738.0 460.7 L740.0 460.5 L742.0 460.2 L744.0 459.9 L746.0 459.6 L748.0 459.4 L750.0 459.1 L752.0 458.8 L754.0 458.5 L756.0 458.3 L758.0 458.0 L760.0 457.7 L762.0 457.4 M658.0 469.4 L660.0 469.3 L662.0 469.3 L664.0 469.1 L666.0 469.0 L668.0 468.8 L670.0 468.6 L672.0 468.4 L674.0 468.1 L676.0 467.9 L678.0 467.6 L680.0 467.3 L682.0 467.0 L684.0 466.7 L686.0 466.4 L688.0 466.1 L690.0 465.8 L692.0 465.4 L694.0 465.1 L696.0 464.8 L698.0 464.5 L700.0 464.1 L702.0 463.8 L704.0 463.5 L706.0 463.1 L708.0 462.8 L710.0 462.4 L712.0 462.1 L714.0 461.8 L716.0 461.4 L718.0 461.1 L720.0 460.7 L722.0 460.4 L724.0 460.1 L726.0 459.7 L728.0 459.4 L730.0 459.0 L732.0 458.7 L734.0 458.3 L736.0 458.0 L738.0 457.6 L740.0 457.3 L742.0 456.9 L744.0 456.6 L746.0 456.2 L748.0 455.9 L750.0 455.5 L752.0 455.2 L754.0 454.8 L756.0 454.5 L758.0 454.1 L760.0 453.8 L762.0 453.4 L764.0 453.1 M658.0 468.8 L660.0 468.7 L662.0 468.7 L664.0 468.5 L666.0 468.3 L668.0 468.1 L670.0 467.9 L672.0 467.6 L674.0 467.3 L676.0 467.0 L678.0 466.6 L680.0 466.3 L682.0 465.9 L684.0 465.5 L686.0 465.2 L688.0 464.8 L690.0 464.4 L692.0 464.0 L694.0 463.6 L696.0 463.2 L698.0 462.8 L700.0 462.4 L702.0 462.0 L704.0 461.6 L706.0 461.2 L708.0 460.8 L710.0 460.4 L712.0 459.9 L714.0 459.5 L716.0 459.1 L718.0 458.7 L720.0 458.3 L722.0 457.9 L724.0 457.4 L726.0 457.0 L728.0 456.6 L730.0 456.2 L732.0 455.8 L734.0 455.3 L736.0 454.9 L738.0 454.5 L740.0 454.1 L742.0 453.6 L744.0 453.2 L746.0 452.8 L748.0 452.4 L750.0 451.9 L752.0 451.5 L754.0 451.1 L756.0 450.7 L758.0 450.2 L760.0 449.8 L762.0 449.4 L764.0 449.0 L766.0 448.5 M658.0 468.2 L660.0 468.2 L662.0 468.1 L664.0 467.9 L666.0 467.7 L668.0 467.4 L670.0 467.1 L672.0 466.8 L674.0 466.4 L676.0 466.0 L678.0 465.6 L680.0 465.2 L682.0 464.8 L684.0 464.4 L686.0 463.9 L688.0 463.5 L690.0 463.0 L692.0 462.5 L694.0 462.1 L696.0 461.6 L698.0 461.1 L700.0 460.7 L702.0 460.2 L704.0 459.7 L706.0 459.2 L708.0 458.7 L710.0 458.2 L712.0 457.7 L714.0 457.3 L716.0 456.8 L718.0 456.3 L720.0 455.8 L722.0 455.3 L724.0 454.8 L726.0 454.3 L728.0 453.8 L730.0 453.3 L732.0 452.8 L734.0 452.3 L736.0 451.8 L738.0 451.3 L740.0 450.8 L742.0 450.3 L744.0 449.8 L746.0 449.3 L748.0 448.8 L750.0 448.3 L752.0 447.8 L754.0 447.3 L756.0 446.8 L758.0 446.3 L760.0 445.8 L762.0 445.3 L764.0 444.8 L766.0 444.3 L768.0 443.8 M658.0 467.6 L660.0 467.5 L662.0 467.4 L664.0 467.2 L666.0 467.0 L668.0 466.7 L670.0 466.3 L672.0 466.0 L674.0 465.5 L676.0 465.1 L678.0 464.6 L680.0 464.2 L682.0 463.7 L684.0 463.2 L686.0 462.7 L688.0 462.1 L690.0 461.6 L692.0 461.1 L694.0 460.5 L696.0 460.0 L698.0 459.4 L700.0 458.9 L702.0 458.3 L704.0 457.8 L706.0 457.2 L708.0 456.6 L710.0 456.1 L712.0 455.5 L714.0 454.9 L716.0 454.4 L718.0 453.8 L720.0 453.2 L722.0 452.7 L724.0 452.1 L726.0 451.5 L728.0 450.9 L730.0 450.4 L732.0 449.8 L734.0 449.2 L736.0 448.6 L738.0 448.0 L740.0 447.5 L742.0 446.9 L744.0 446.3 L746.0 445.7 L748.0 445.2 L750.0 444.6 L752.0 444.0 L754.0 443.4 L756.0 442.8 L758.0 442.2 L760.0 441.7 M658.0 467.0 L660.0 466.9 L662.0 466.8 L664.0 466.6 L666.0 466.3 L668.0 466.0 L670.0 465.6 L672.0 465.1 L674.0 464.7 L676.0 464.1 L678.0 463.6 L680.0 463.1 L682.0 462.5 L684.0 461.9 L686.0 461.4 L688.0 460.8 L690.0 460.2 L692.0 459.5 L694.0 458.9 L696.0 458.3 L698.0 457.7 L700.0 457.1 L702.0 456.4 L704.0 455.8 L706.0 455.1 L708.0 454.5 L710.0 453.9 L712.0 453.2 L714.0 452.6 L716.0 451.9 L718.0 451.3 L720.0 450.6 L722.0 450.0 L724.0 449.3 L726.0 448.7 L728.0 448.0 L730.0 447.4 L732.0 446.7 L734.0 446.0 L736.0 445.4 L738.0 444.7 L740.0 444.1 L742.0 443.4 L744.0 442.7 L746.0 442.1 L748.0 441.4 L750.0 440.8 L752.0 440.1 L754.0 439.4 L756.0 438.8 M658.0 466.3 L660.0 466.3 L662.0 466.1 L664.0 465.9 L666.0 465.6 L668.0 465.2 L670.0 464.8 L672.0 464.3 L674.0 463.7 L676.0 463.2 L678.0 462.6 L680.0 462.0 L682.0 461.3 L684.0 460.7 L686.0 460.0 L688.0 459.4 L690.0 458.7 L692.0 458.0 L694.0 457.3 L696.0 456.6 L698.0 455.9 L700.0 455.2 L702.0 454.5 L704.0 453.8 L706.0 453.0 L708.0 452.3 L710.0 451.6 L712.0 450.9 L714.0 450.1 L716.0 449.4 L718.0 448.7 L720.0 448.0 L722.0 447.2 L724.0 446.5 L726.0 445.8 L728.0 445.0 L730.0 444.3 L732.0 443.5 L734.0 442.8 L736.0 442.1 L738.0 441.3 L740.0 440.6 L742.0 439.8 L744.0 439.1 L746.0 438.4 L748.0 437.6 L750.0 436.9 M658.0 465.7 L660.0 465.6 L662.0 465.5 L664.0 465.2 L666.0 464.9 L668.0 464.4 L670.0 463.9 L672.0 463.4 L674.0 462.8 L676.0 462.2 L678.0 461.5 L680.0 460.8 L682.0 460.1 L684.0 459.4 L686.0 458.7 L688.0 457.9 L690.0 457.2 L692.0 456.4 L694.0 455.6 L696.0 454.8 L698.0 454.1 L700.0 453.3 L702.0 452.5 L704.0 451.7 L706.0 450.9 L708.0 450.1 L710.0 449.3 L712.0 448.5 L714.0 447.7 L716.0 446.8 L718.0 446.0 L720.0 445.2 L722.0 444.4 L724.0 443.6 L726.0 442.8 L728.0 441.9 L730.0 441.1 L732.0 440.3 L734.0 439.5 L736.0 438.6 L738.0 437.8 L740.0 437.0 L742.0 436.2 L744.0 435.3 M658.0 465.0 L660.0 465.0 L662.0 464.8 L664.0 464.5 L666.0 464.1 L668.0 463.6 L670.0 463.1 L672.0 462.5 L674.0 461.8 L676.0 461.1 L678.0 460.4 L680.0 459.6 L682.0 458.9 L684.0 458.1 L686.0 457.2 L688.0 456.4 L690.0 455.6 L692.0 454.7 L694.0 453.9 L696.0 453.0 L698.0 452.2 L700.0 451.3 L702.0 450.4 L704.0 449.5 L706.0 448.6 L708.0 447.8 L710.0 446.9 L712.0 446.0 L714.0 445.1 L716.0 444.2 L718.0 443.3 L720.0 442.4 L722.0 441.5 L724.0 440.6 L726.0 439.7 L728.0 438.8 L730.0 437.8 L732.0 436.9 L734.0 436.0 L736.0 435.1 L738.0 434.2 L740.0 433.3 M658.0 464.3 L660.0 464.3 L662.0 464.1 L664.0 463.8 L666.0 463.3 L668.0 462.8 L670.0 462.2 L672.0 461.5 L674.0 460.8 L676.0 460.0 L678.0 459.2 L680.0 458.4 L682.0 457.6 L684.0 456.7 L686.0 455.8 L688.0 454.9 L690.0 454.0 L692.0 453.0 L694.0 452.1 L696.0 451.1 L698.0 450.2 L700.0 449.2 L702.0 448.3 L704.0 447.3 L706.0 446.3 L708.0 445.4 L710.0 444.4 L712.0 443.4 L714.0 442.4 L716.0 441.4 L718.0 440.4 L720.0 439.4 L722.0 438.5 L724.0 437.5 L726.0 436.5 L728.0 435.5 L730.0 434.5 L732.0 433.5 L734.0 432.5 L736.0 431.5 M658.0 463.6 L660.0 463.6 L662.0 463.3 L664.0 463.0 L666.0 462.5 L668.0 461.9 L670.0 461.3 L672.0 460.5 L674.0 459.8 L676.0 458.9 L678.0 458.0 L680.0 457.1 L682.0 456.2 L684.0 455.2 L686.0 454.3 L688.0 453.3 L690.0 452.3 L692.0 451.3 L694.0 450.2 L696.0 449.2 L698.0 448.2 L700.0 447.1 L702.0 446.1 L704.0 445.0 L706.0 443.9 L708.0 442.9 L710.0 441.8 L712.0 440.7 L714.0 439.6 L716.0 438.6 L718.0 437.5 L720.0 436.4 L722.0 435.3 L724.0 434.2 L726.0 433.1 L728.0 432.0 L730.0 431.0 L732.0 429.9 M658.0 462.9 L660.0 462.8 L662.0 462.6 L664.0 462.2 L666.0 461.7 L668.0 461.0 L670.0 460.3 L672.0 459.5 L674.0 458.7 L676.0 457.8 L678.0 456.8 L680.0 455.8 L682.0 454.8 L684.0 453.8 L686.0 452.7 L688.0 451.6 L690.0 450.5 L692.0 449.4 L694.0 448.3 L696.0 447.2 L698.0 446.0 L700.0 444.9 L702.0 443.7 L704.0 442.6 L706.0 441.4 L708.0 440.3 L710.0 439.1 L712.0 437.9 L714.0 436.8 L716.0 435.6 L718.0 434.4 L720.0 433.2 L722.0 432.0 L724.0 430.9 L726.0 429.7 L728.0 428.5 M658.0 462.1 L660.0 462.0 L662.0 461.8 L664.0 461.3 L666.0 460.8 L668.0 460.1 L670.0 459.3 L672.0 458.5 L674.0 457.5 L676.0 456.5 L678.0 455.5 L680.0 454.4 L682.0 453.3 L684.0 452.2 L686.0 451.0 L688.0 449.9 L690.0 448.7 L692.0 447.5 L694.0 446.3 L696.0 445.0 L698.0 443.8 L700.0 442.6 L702.0 441.3 L704.0 440.1 L706.0 438.8 L708.0 437.5 L710.0 436.3 L712.0 435.0 L714.0 433.7 L716.0 432.5 L718.0 431.2 L720.0 429.9 L722.0 428.6 L724.0 427.3 M658.0 461.3 L660.0 461.2 L662.0 460.9 L664.0 460.5 L666.0 459.9 L668.0 459.1 L670.0 458.3 L672.0 457.3 L674.0 456.3 L676.0 455.3 L678.0 454.1 L680.0 453.0 L682.0 451.8 L684.0 450.5 L686.0 449.3 L688.0 448.0 L690.0 446.7 L692.0 445.4 L694.0 444.1 L696.0 442.8 L698.0 441.5 L700.0 440.1 L702.0 438.8 L704.0 437.4 L706.0 436.1 L708.0 434.7 L710.0 433.3 L712.0 431.9 L714.0 430.6 L716.0 429.2 L718.0 427.8 L720.0 426.4 M658.0 460.4 L656.0 460.3 L654.0 460.0 L652.0 459.5 L650.0 458.9 L648.0 458.1 L646.0 457.2 L644.0 456.2 L642.0 455.1 L640.0 453.9 L638.0 452.7 L636.0 451.4 L634.0 450.1 L632.0 448.8 L630.0 447.5 L628.0 446.1 L626.0 444.7 L624.0 443.3 L622.0 441.9 L620.0 440.4 L618.0 439.0 L616.0 437.6 L614.0 436.1 L612.0 434.6 L610.0 433.2 L608.0 431.7 L606.0 430.2 L604.0 428.7 L602.0 427.2 L600.0 425.7 L598.0 424.2 L596.0 422.7 L594.0 421.2 L592.0 419.7 L590.0 418.2 L588.0 416.7 L586.0 415.2 L584.0 413.7 L582.0 412.2 L580.0 410.7 L578.0 409.1 M658.0 460.4 L660.0 460.3 L662.0 460.0 L664.0 459.5 L666.0 458.9 L668.0 458.1 L670.0 457.2 L672.0 456.2 L674.0 455.1 L676.0 453.9 L678.0 452.7 L680.0 451.4 L682.0 450.1 L684.0 448.8 L686.0 447.5 L688.0 446.1 L690.0 444.7 L692.0 443.3 L694.0 441.9 L696.0 440.4 L698.0 439.0 L700.0 437.6 L702.0 436.1 L704.0 434.6 L706.0 433.2 L708.0 431.7 L710.0 430.2 L712.0 428.7 L714.0 427.2 L716.0 425.7 L718.0 424.2 M658.0 459.5 L656.0 459.4 L654.0 459.1 L652.0 458.5 L650.0 457.8 L648.0 457.0 L646.0 456.0 L644.0 454.9 L642.0 453.7 L640.0 452.5 L638.0 451.2 L636.0 449.8 L634.0 448.4 L632.0 447.0 L630.0 445.5 L628.0 444.0 L626.0 442.5 L624.0 441.0 L622.0 439.5 L620.0 438.0 L618.0 436.4 L616.0 434.8 L614.0 433.3 L612.0 431.7 L610.0 430.1 L608.0 428.5 L606.0 426.9 L604.0 425.3 L602.0 423.7 L600.0 422.1 L598.0 420.5 L596.0 418.8 L594.0 417.2 L592.0 415.6 L590.0 414.0 L588.0 412.3 L586.0 410.7 L584.0 409.1 L582.0 407.4 L580.0 405.8 L578.0 404.2 M658.0 459.5 L660.0 459.4 L662.0 459.1 L664.0 458.5 L666.0 457.8 L668.0 457.0 L670.0 456.0 L672.0 454.9 L674.0 453.7 L676.0 452.5 L678.0 451.2 L680.0 449.8 L682.0 448.4 L684.0 447.0 L686.0 445.5 L688.0 444.0 L690.0 442.5 L692.0 441.0 L694.0 439.5 L696.0 438.0 L698.0 436.4 L700.0 434.8 L702.0 433.3 L704.0 431.7 L706.0 430.1 L708.0 428.5 L710.0 426.9 L712.0 425.3 L714.0 423.7 M738.0 404.2 L740.0 402.5 L742.0 400.9 M658.0 458.5 L656.0 458.4 L654.0 458.1 L652.0 457.5 L650.0 456.7 L648.0 455.8 L646.0 454.7 L644.0 453.6 L642.0 452.3 L640.0 451.0 L638.0 449.5 L636.0 448.1 L634.0 446.6 L632.0 445.0 L630.0 443.5 L628.0 441.9 L626.0 440.3 L624.0 438.6 L622.0 437.0 L620.0 435.3 L618.0 433.6 L616.0 431.9 L614.0 430.2 L612.0 428.5 L610.0 426.8 L608.0 425.1 L606.0 423.4 L604.0 421.7 L602.0 419.9 L600.0 418.2 L598.0 416.4 L596.0 414.7 L594.0 412.9 L592.0 411.2 L590.0 409.4 L588.0 407.7 L586.0 405.9 L584.0 404.2 L582.0 402.4 L580.0 400.6 L578.0 398.9 M658.0 458.5 L660.0 458.4 L662.0 458.1 L664.0 457.5 L666.0 456.7 L668.0 455.8 L670.0 454.7 L672.0 453.6 L674.0 452.3 L676.0 451.0 L678.0 449.5 L680.0 448.1 L682.0 446.6 L684.0 445.0 L686.0 443.5 L688.0 441.9 L690.0 440.3 L692.0 438.6 L694.0 437.0 L696.0 435.3 L698.0 433.6 L700.0 431.9 L702.0 430.2 L704.0 428.5 L706.0 426.8 L708.0 425.1 L710.0 423.4 L712.0 421.7 M658.0 457.5 L656.0 457.4 L654.0 457.0 L652.0 456.4 L650.0 455.5 L648.0 454.6 L646.0 453.4 L644.0 452.1 L642.0 450.8 L640.0 449.3 L638.0 447.8 L636.0 446.2 L634.0 444.6 L632.0 442.9 L630.0 441.3 L628.0 439.5 L626.0 437.8 L624.0 436.0 L622.0 434.3 L620.0 432.5 L618.0 430.7 L616.0 428.8 L614.0 427.0 L612.0 425.2 L610.0 423.3 L608.0 421.5 L606.0 419.6 L604.0 417.8 L602.0 415.9 L600.0 414.0 L598.0 412.1 L596.0 410.3 L594.0 408.4 L592.0 406.5 L590.0 404.6 L588.0 402.7 L586.0 400.8 L584.0 398.9 L582.0 397.0 L580.0 395.1 L578.0 393.2 M658.0 457.5 L660.0 457.4 L662.0 457.0 L664.0 456.4 L666.0 455.5 L668.0 454.6 L670.0 453.4 L672.0 452.1 L674.0 450.8 L676.0 449.3 L678.0 447.8 L680.0 446.2 L682.0 444.6 L684.0 442.9 L686.0 441.3 L688.0 439.5 L690.0 437.8 L692.0 436.0 L694.0 434.3 L696.0 432.5 L698.0 430.7 L700.0 428.8 L702.0 427.0 L704.0 425.2 L706.0 423.3 L708.0 421.5 M730.0 400.8 L732.0 398.9 L734.0 397.0 L736.0 395.1 L738.0 393.2 L740.0 391.3 L742.0 389.4 M658.0 456.4 L657.0 456.3 L656.0 456.2 L655.0 456.1 L654.0 455.8 L653.0 455.5 L652.0 455.2 L651.0 454.7 L650.0 454.3 L649.0 453.8 L648.0 453.2 L647.0 452.6 L646.0 452.0 L645.0 451.3 L644.0 450.6 L643.0 449.9 L642.0 449.1 L641.0 448.4 L640.0 447.6 L639.0 446.8 L638.0 445.9 L637.0 445.1 L636.0 444.2 L635.0 443.4 L634.0 442.5 L633.0 441.6 L632.0 440.7 L631.0 439.8 L630.0 438.9 L629.0 438.0 L628.0 437.0 L627.0 436.1 L626.0 435.2 L625.0 434.2 L624.0 433.3 L623.0 432.3 L622.0 431.3 L621.0 430.4 L620.0 429.4 L619.0 428.4 L618.0 427.5 L617.0 426.5 L616.0 425.5 L615.0 424.5 L614.0 423.5 L613.0 422.5 L612.0 421.6 L611.0 420.6 L610.0 419.6 L609.0 418.6 L608.0 417.6 L607.0 416.6 L606.0 415.6 L605.0 414.6 L604.0 413.6 L603.0 412.6 L602.0 411.6 L601.0 410.6 L600.0 409.5 L599.0 408.5 L598.0 407.5 L597.0 406.5 L596.0 405.5 L595.0 404.5 L594.0 403.5 L593.0 402.5 L592.0 401.4 L591.0 400.4 L590.0 399.4 L589.0 398.4 L588.0 397.4 L587.0 396.3 L586.0 395.3 L585.0 394.3 L584.0 393.3 L583.0 392.3 L582.0 391.2 L581.0 390.2 L580.0 389.2 L579.0 388.2 L578.0 387.1 L577.0 386.1 M658.0 456.4 L659.0 456.3 L660.0 456.2 L661.0 456.1 L662.0 455.8 L663.0 455.5 L664.0 455.2 L665.0 454.7 L666.0 454.3 L667.0 453.8 L668.0 453.2 L669.0 452.6 L670.0 452.0 L671.0 451.3 L672.0 450.6 L673.0 449.9 L674.0 449.1 L675.0 448.4 L676.0 447.6 L677.0 446.8 L678.0 445.9 L679.0 445.1 L680.0 444.2 L681.0 443.4 L682.0 442.5 L683.0 441.6 L684.0 440.7 L685.0 439.8 L686.0 438.9 L687.0 438.0 L688.0 437.0 L689.0 436.1 L690.0 435.2 L691.0 434.2 L692.0 433.3 L693.0 432.3 L694.0 431.3 L695.0 430.4 L696.0 429.4 L697.0 428.4 L698.0 427.5 L699.0 426.5 L700.0 425.5 L701.0 424.5 L702.0 423.5 L703.0 422.5 L704.0 421.6 L705.0 420.6 L706.0 419.6 M726.0 399.4 L727.0 398.4 L728.0 397.4 L729.0 396.3 L730.0 395.3 L731.0 394.3 L732.0 393.3 L733.0 392.3 L734.0 391.2 L735.0 390.2 L736.0 389.2 L737.0 388.2 L738.0 387.1 L739.0 386.1 L740.0 385.1 L741.0 384.1 L742.0 383.0 M658.0 455.2 L657.0 455.1 L656.0 455.0 L655.0 454.8 L654.0 454.6 L653.0 454.2 L652.0 453.9 L651.0 453.4 L650.0 452.9 L649.0 452.4 L648.0 451.8 L647.0 451.1 L646.0 450.4 L645.0 449.7 L644.0 449.0 L643.0 448.2 L642.0 447.4 L641.0 446.5 L640.0 445.7 L639.0 444.8 L638.0 443.9 L637.0 443.0 L636.0 442.1 L635.0 441.2 L634.0 440.2 L633.0 439.3 L632.0 438.3 L631.0 437.3 L630.0 436.3 L629.0 435.3 L628.0 434.3 L627.0 433.3 L626.0 432.3 L625.0 431.3 L624.0 430.3 L623.0 429.2 L622.0 428.2 L621.0 427.2 L620.0 426.1 L619.0 425.1 L618.0 424.0 L617.0 423.0 L616.0 421.9 L615.0 420.8 L614.0 419.8 L613.0 418.7 L612.0 417.7 L611.0 416.6 L610.0 415.5 L609.0 414.4 L608.0 413.4 L607.0 412.3 L606.0 411.2 L605.0 410.1 L604.0 409.1 L603.0 408.0 L602.0 406.9 L601.0 405.8 L600.0 404.7 L599.0 403.6 L598.0 402.5 L597.0 401.4 L596.0 400.4 L595.0 399.3 L594.0 398.2 L593.0 397.1 L592.0 396.0 L591.0 394.9 L590.0 393.8 L589.0 392.7 L588.0 391.6 L587.0 390.5 L586.0 389.4 L585.0 388.3 L584.0 387.2 L583.0 386.1 L582.0 385.0 L581.0 383.9 L580.0 382.8 L579.0 381.7 L578.0 380.6 L577.0 379.5 M658.0 455.2 L659.0 455.1 L660.0 455.0 L661.0 454.8 L662.0 454.6 L663.0 454.2 L664.0 453.9 L665.0 453.4 L666.0 452.9 L667.0 452.4 L668.0 451.8 L669.0 451.1 L670.0 450.4 L671.0 449.7 L672.0 449.0 L673.0 448.2 L674.0 447.4 L675.0 446.5 L676.0 445.7 L677.0 444.8 L678.0 443.9 L679.0 443.0 L680.0 442.1 L681.0 441.2 L682.0 440.2 L683.0 439.3 L684.0 438.3 L685.0 437.3 L686.0 436.3 L687.0 435.3 L688.0 434.3 L689.0 433.3 L690.0 432.3 L691.0 431.3 L692.0 430.3 L693.0 429.2 L694.0 428.2 L695.0 427.2 L696.0 426.1 L697.0 425.1 L698.0 424.0 L699.0 423.0 L700.0 421.9 L701.0 420.8 L702.0 419.8 L703.0 418.7 M658.0 453.8 L657.0 453.8 L656.0 453.7 L655.0 453.5 L654.0 453.2 L653.0 452.9 L652.0 452.4 L651.0 452.0 L650.0 451.4 L649.0 450.8 L648.0 450.2 L647.0 449.5 L646.0 448.7 L645.0 448.0 L644.0 447.2 L643.0 446.3 L642.0 445.4 L641.0 444.5 L640.0 443.6 L639.0 442.7 L638.0 441.7 L637.0 440.8 L636.0 439.8 L635.0 438.8 L634.0 437.7 L633.0 436.7 L632.0 435.7 L631.0 434.6 L630.0 433.5 L629.0 432.5 L628.0 431.4 L627.0 430.3 L626.0 429.2 L625.0 428.1 L624.0 427.0 L623.0 425.9 L622.0 424.8 L621.0 423.7 L620.0 422.5 L619.0 421.4 L618.0 420.3 L617.0 419.1 L616.0 418.0 L615.0 416.9 L614.0 415.7 L613.0 414.6 L612.0 413.4 L611.0 412.3 L610.0 411.1 L609.0 409.9 L608.0 408.8 L607.0 407.6 L606.0 406.5 L605.0 405.3 L604.0 404.1 L603.0 403.0 L602.0 401.8 L601.0 400.6 L600.0 399.5 L599.0 398.3 L598.0 397.1 L597.0 395.9 L596.0 394.8 L595.0 393.6 L594.0 392.4 L593.0 391.2 L592.0 390.0 L591.0 388.9 L590.0 387.7 L589.0 386.5 L588.0 385.3 L587.0 384.1 L586.0 382.9 L585.0 381.8 L584.0 380.6 L583.0 379.4 L582.0 378.2 L581.0 377.0 L580.0 375.8 L579.0 374.6 L578.0 373.4 L577.0 372.3 M658.0 453.8 L659.0 453.8 L660.0 453.7 L661.0 453.5 L662.0 453.2 L663.0 452.9 L664.0 452.4 L665.0 452.0 L666.0 451.4 L667.0 450.8 L668.0 450.2 L669.0 449.5 L670.0 448.7 L671.0 448.0 L672.0 447.2 L673.0 446.3 L674.0 445.4 L675.0 444.5 L676.0 443.6 L677.0 442.7 L678.0 441.7 L679.0 440.8 L680.0 439.8 L681.0 438.8 L682.0 437.7 L683.0 436.7 L684.0 435.7 L685.0 434.6 L686.0 433.5 L687.0 432.5 L688.0 431.4 L689.0 430.3 L690.0 429.2 L691.0 428.1 L692.0 427.0 L693.0 425.9 L694.0 424.8 L695.0 423.7 L696.0 422.5 L697.0 421.4 L698.0 420.3 L699.0 419.1 L700.0 418.0 M718.0 397.1 L719.0 395.9 L720.0 394.8 L721.0 393.6 L722.0 392.4 L723.0 391.2 L724.0 390.0 L725.0 388.9 L726.0 387.7 L727.0 386.5 L728.0 385.3 L729.0 384.1 L730.0 382.9 L731.0 381.8 L732.0 380.6 L733.0 379.4 L734.0 378.2 L735.0 377.0 L736.0 375.8 L737.0 374.6 L738.0 373.4 L739.0 372.3 L740.0 371.1 L741.0 369.9 L742.0 368.7 M658.0 452.4 L657.0 452.4 L656.0 452.2 L655.0 452.0 L654.0 451.7 L653.0 451.3 L652.0 450.9 L651.0 450.4 L650.0 449.8 L649.0 449.1 L648.0 448.4 L647.0 447.7 L646.0 446.9 L645.0 446.1 L644.0 445.2 L643.0 444.3 L642.0 443.3 L641.0 442.4 L640.0 441.4 L639.0 440.4 L638.0 439.3 L637.0 438.3 L636.0 437.2 L635.0 436.1 L634.0 435.0 L633.0 433.9 L632.0 432.8 L631.0 431.6 L630.0 430.5 L629.0 429.3 L628.0 428.2 L627.0 427.0 L626.0 425.8 L625.0 424.6 L624.0 423.4 L623.0 422.2 L622.0 421.0 L621.0 419.8 L620.0 418.6 L619.0 417.4 L618.0 416.2 L617.0 414.9 L616.0 413.7 L615.0 412.5 L614.0 411.2 L613.0 410.0 L612.0 408.8 L611.0 407.5 L610.0 406.3 L609.0 405.0 L608.0 403.8 L607.0 402.5 L606.0 401.3 L605.0 400.0 L604.0 398.8 L603.0 397.5 L602.0 396.2 L601.0 395.0 L600.0 393.7 L599.0 392.4 L598.0 391.2 L597.0 389.9 L596.0 388.6 L595.0 387.4 L594.0 386.1 L593.0 384.8 L592.0 383.5 L591.0 382.3 L590.0 381.0 L589.0 379.7 L588.0 378.4 L587.0 377.2 L586.0 375.9 L585.0 374.6 L584.0 373.3 L583.0 372.0 L582.0 370.8 M658.0 452.4 L659.0 452.4 L660.0 452.2 L661.0 452.0 L662.0 451.7 L663.0 451.3 L664.0 450.9 L665.0 450.4 L666.0 449.8 L667.0 449.1 L668.0 448.4 L669.0 447.7 L670.0 446.9 L671.0 446.1 L672.0 445.2 L673.0 444.3 L674.0 443.3 L675.0 442.4 L676.0 441.4 L677.0 440.4 L678.0 439.3 L679.0 438.3 L680.0 437.2 L681.0 436.1 L682.0 435.0 L683.0 433.9 L684.0 432.8 L685.0 431.6 L686.0 430.5 L687.0 429.3 L688.0 428.2 L689.0 427.0 L690.0 425.8 L691.0 424.6 L692.0 423.4 L693.0 422.2 L694.0 421.0 L695.0 419.8 L696.0 418.6 L697.0 417.4 L698.0 416.2 M714.0 396.2 L715.0 395.0 L716.0 393.7 L717.0 392.4 L718.0 391.2 L719.0 389.9 L720.0 388.6 L721.0 387.4 L722.0 386.1 L723.0 384.8 L724.0 383.5 L725.0 382.3 L726.0 381.0 L727.0 379.7 L728.0 378.4 L729.0 377.2 L730.0 375.9 L731.0 374.6 L732.0 373.3 L733.0 372.0 L734.0 370.8 L735.0 369.5 L736.0 368.2 L737.0 366.9 L738.0 365.6 L739.0 364.3 L740.0 363.1 L741.0 361.8 L742.0 360.5 M658.0 450.8 L657.0 450.8 L656.0 450.6 L655.0 450.4 L654.0 450.1 L653.0 449.7 L652.0 449.2 L651.0 448.6 L650.0 448.0 L649.0 447.3 L648.0 446.5 L647.0 445.7 L646.0 444.9 L645.0 444.0 L644.0 443.0 L643.0 442.0 L642.0 441.0 L641.0 440.0 L640.0 438.9 L639.0 437.8 L638.0 436.7 L637.0 435.5 L636.0 434.4 L635.0 433.2 L634.0 432.0 L633.0 430.8 L632.0 429.6 L631.0 428.4 L630.0 427.1 L629.0 425.9 L628.0 424.6 L627.0 423.4 L626.0 422.1 L625.0 420.8 L624.0 419.5 L623.0 418.2 L622.0 416.9 L621.0 415.6 L620.0 414.3 L619.0 413.0 L618.0 411.7 L617.0 410.3 L616.0 409.0 L615.0 407.7 L614.0 406.3 L613.0 405.0 L612.0 403.7 L611.0 402.3 L610.0 401.0 L609.0 399.6 L608.0 398.3 L607.0 396.9 L606.0 395.5 L605.0 394.2 L604.0 392.8 L603.0 391.5 L602.0 390.1 L601.0 388.7 L600.0 387.4 L599.0 386.0 L598.0 384.6 L597.0 383.3 L596.0 381.9 L595.0 380.5 L594.0 379.1 L593.0 377.8 L592.0 376.4 L591.0 375.0 L590.0 373.6 M658.0 450.8 L659.0 450.8 L660.0 450.6 L661.0 450.4 L662.0 450.1 L663.0 449.7 L664.0 449.2 L665.0 448.6 L666.0 448.0 L667.0 447.3 L668.0 446.5 L669.0 445.7 L670.0 444.9 L671.0 444.0 L672.0 443.0 L673.0 442.0 L674.0 441.0 L675.0 440.0 L676.0 438.9 L677.0 437.8 L678.0 436.7 L679.0 435.5 L680.0 434.4 L681.0 433.2 L682.0 432.0 L683.0 430.8 L684.0 429.6 L685.0 428.4 L686.0 427.1 L687.0 425.9 L688.0 424.6 L689.0 423.4 L690.0 422.1 L691.0 420.8 L692.0 419.5 L693.0 418.2 L694.0 416.9 L695.0 415.6 M658.0 449.0 L657.0 449.0 L656.0 448.8 L655.0 448.6 L654.0 448.2 L653.0 447.8 L652.0 447.3 L651.0 446.7 L650.0 446.0 L649.0 445.2 L648.0 444.4 L647.0 443.5 L646.0 442.6 L645.0 441.6 L644.0 440.6 L643.0 439.5 L642.0 438.4 L641.0 437.3 L640.0 436.1 L639.0 435.0 L638.0 433.7 L637.0 432.5 L636.0 431.3 L635.0 430.0 L634.0 428.7 L633.0 427.4 L632.0 426.1 L631.0 424.7 L630.0 423.4 L629.0 422.0 L628.0 420.7 L627.0 419.3 L626.0 417.9 L625.0 416.5 L624.0 415.1 L623.0 413.7 L622.0 412.3 L621.0 410.9 L620.0 409.5 L619.0 408.1 L618.0 406.6 L617.0 405.2 L616.0 403.8 L615.0 402.3 L614.0 400.9 L613.0 399.4 L612.0 398.0 L611.0 396.5 L610.0 395.1 L609.0 393.6 L608.0 392.1 L607.0 390.7 L606.0 389.2 L605.0 387.7 L604.0 386.2 L603.0 384.8 L602.0 383.3 L601.0 381.8 L600.0 380.3 L599.0 378.9 L598.0 377.4 M658.0 449.0 L659.0 449.0 L660.0 448.8 L661.0 448.6 L662.0 448.2 L663.0 447.8 L664.0 447.3 L665.0 446.7 L666.0 446.0 L667.0 445.2 L668.0 444.4 L669.0 443.5 L670.0 442.6 L671.0 441.6 L672.0 440.6 L673.0 439.5 L674.0 438.4 L675.0 437.3 L676.0 436.1 L677.0 435.0 L678.0 433.7 L679.0 432.5 L680.0 431.3 L681.0 430.0 L682.0 428.7 L683.0 427.4 L684.0 426.1 L685.0 424.7 L686.0 423.4 L687.0 422.0 L688.0 420.7 L689.0 419.3 L690.0 417.9 L691.0 416.5 L692.0 415.1 M707.0 393.6 L708.0 392.1 L709.0 390.7 L710.0 389.2 L711.0 387.7 L712.0 386.2 L713.0 384.8 L714.0 383.3 L715.0 381.8 L716.0 380.3 L717.0 378.9 L718.0 377.4 L719.0 375.9 L720.0 374.4 L721.0 372.9 L722.0 371.4 L723.0 369.9 L724.0 368.4 L725.0 366.9 L726.0 365.5 L727.0 364.0 L728.0 362.5 L729.0 361.0 L730.0 359.5 L731.0 358.0 L732.0 356.5 L733.0 355.0 L734.0 353.5 L735.0 352.0 L736.0 350.5 L737.0 349.0 L738.0 347.5 L739.0 346.0 L740.0 344.4 L741.0 342.9 L742.0 341.4 M658.0 447.1 L657.0 447.0 L656.0 446.9 L655.0 446.6 L654.0 446.2 L653.0 445.7 L652.0 445.2 L651.0 444.5 L650.0 443.8 L649.0 442.9 L648.0 442.0 L647.0 441.1 L646.0 440.1 L645.0 439.0 L644.0 437.9 L643.0 436.7 L642.0 435.6 L641.0 434.3 L640.0 433.1 L639.0 431.8 L638.0 430.5 L637.0 429.1 L636.0 427.8 L635.0 426.4 L634.0 425.0 L633.0 423.6 L632.0 422.1 L631.0 420.7 L630.0 419.2 L629.0 417.7 L628.0 416.3 L627.0 414.8 L626.0 413.3 L625.0 411.8 L624.0 410.2 L623.0 408.7 L622.0 407.2 L621.0 405.7 L620.0 404.1 L619.0 402.6 L618.0 401.0 L617.0 399.5 L616.0 397.9 L615.0 396.3 L614.0 394.8 L613.0 393.2 L612.0 391.6 L611.0 390.0 L610.0 388.4 L609.0 386.8 L608.0 385.3 L607.0 383.7 L606.0 382.1 L605.0 380.5 M658.0 447.1 L659.0 447.0 L660.0 446.9 L661.0 446.6 L662.0 446.2 L663.0 445.7 L664.0 445.2 L665.0 444.5 L666.0 443.8 L667.0 442.9 L668.0 442.0 L669.0 441.1 L670.0 440.1 L671.0 439.0 L672.0 437.9 L673.0 436.7 L674.0 435.6 L675.0 434.3 L676.0 433.1 L677.0 431.8 L678.0 430.5 L679.0 429.1 L680.0 427.8 L681.0 426.4 L682.0 425.0 L683.0 423.6 L684.0 422.1 L685.0 420.7 L686.0 419.2 L687.0 417.7 L688.0 416.3 L689.0 414.8 L690.0 413.3 M704.0 391.6 L705.0 390.0 L706.0 388.4 L707.0 386.8 L708.0 385.3 L709.0 383.7 L710.0 382.1 L711.0 380.5 L712.0 378.9 L713.0 377.3 L714.0 375.7 L715.0 374.1 L716.0 372.4 L717.0 370.8 L718.0 369.2 L719.0 367.6 L720.0 366.0 L721.0 364.4 L722.0 362.8 L723.0 361.1 L724.0 359.5 L725.0 357.9 L726.0 356.3 L727.0 354.7 L728.0 353.0 L729.0 351.4 L730.0 349.8 L731.0 348.2 L732.0 346.5 L733.0 344.9 L734.0 343.3 L735.0 341.6 L736.0 340.0 L737.0 338.4 L738.0 336.7 L739.0 335.1 L740.0 333.5 L741.0 331.8 L742.0 330.2 M658.0 444.8 L657.0 444.8 L656.0 444.6 L655.0 444.3 L654.0 443.9 L653.0 443.4 L652.0 442.7 L651.0 442.0 L650.0 441.2 L649.0 440.3 L648.0 439.4 L647.0 438.3 L646.0 437.2 L645.0 436.1 L644.0 434.8 L643.0 433.6 L642.0 432.3 L641.0 430.9 L640.0 429.6 L639.0 428.2 L638.0 426.7 L637.0 425.3 L636.0 423.8 L635.0 422.3 L634.0 420.8 L633.0 419.2 L632.0 417.6 L631.0 416.1 L630.0 414.5 L629.0 412.9 L628.0 411.3 L627.0 409.6 L626.0 408.0 L625.0 406.4 L624.0 404.7 L623.0 403.0 L622.0 401.4 L621.0 399.7 L620.0 398.0 L619.0 396.3 L618.0 394.6 L617.0 392.9 L616.0 391.2 L615.0 389.5 L614.0 387.8 L613.0 386.1 L612.0 384.4 L611.0 382.7 M658.0 444.8 L659.0 444.8 L660.0 444.6 L661.0 444.3 L662.0 443.9 L663.0 443.4 L664.0 442.7 L665.0 442.0 L666.0 441.2 L667.0 440.3 L668.0 439.4 L669.0 438.3 L670.0 437.2 L671.0 436.1 L672.0 434.8 L673.0 433.6 L674.0 432.3 L675.0 430.9 L676.0 429.6 L677.0 428.2 L678.0 426.7 L679.0 425.3 L680.0 423.8 L681.0 422.3 L682.0 420.8 L683.0 419.2 L684.0 417.6 L685.0 416.1 L686.0 414.5 L687.0 412.9 M658.0 442.3 L657.0 442.2 L656.0 442.0 L655.0 441.7 L654.0 441.2 L653.0 440.7 L652.0 440.0 L651.0 439.2 L650.0 438.3 L649.0 437.3 L648.0 436.3 L647.0 435.1 L646.0 433.9 L645.0 432.7 L644.0 431.3 L643.0 430.0 L642.0 428.5 L641.0 427.1 L640.0 425.6 L639.0 424.0 L638.0 422.5 L637.0 420.9 L636.0 419.2 L635.0 417.6 L634.0 415.9 L633.0 414.2 L632.0 412.5 L631.0 410.8 L630.0 409.1 L629.0 407.3 L628.0 405.5 L627.0 403.8 L626.0 402.0 L625.0 400.2 L624.0 398.4 L623.0 396.6 L622.0 394.7 L621.0 392.9 L620.0 391.1 L619.0 389.2 L618.0 387.4 L617.0 385.5 M602.0 357.1 L601.0 355.2 L600.0 353.3 L599.0 351.4 L598.0 349.5 L597.0 347.5 L596.0 345.6 L595.0 343.7 L594.0 341.8 L593.0 339.8 L592.0 337.9 L591.0 336.0 L590.0 334.0 M658.0 442.3 L659.0 442.2 L660.0 442.0 L661.0 441.7 L662.0 441.2 L663.0 440.7 L664.0 440.0 L665.0 439.2 L666.0 438.3 L667.0 437.3 L668.0 436.3 L669.0 435.1 L670.0 433.9 L671.0 432.7 L672.0 431.3 L673.0 430.0 L674.0 428.5 L675.0 427.1 L676.0 425.6 L677.0 424.0 L678.0 422.5 L679.0 420.9 L680.0 419.2 L681.0 417.6 L682.0 415.9 L683.0 414.2 L684.0 412.5 M697.0 389.2 L698.0 387.4 L699.0 385.5 L700.0 383.6 L701.0 381.8 L702.0 379.9 L703.0 378.0 L704.0 376.1 L705.0 374.3 L706.0 372.4 L707.0 370.5 L708.0 368.6 L709.0 366.7 L710.0 364.8 L711.0 362.9 L712.0 361.0 L713.0 359.1 L714.0 357.1 L715.0 355.2 L716.0 353.3 L717.0 351.4 L718.0 349.5 L719.0 347.5 L720.0 345.6 L721.0 343.7 L722.0 341.8 L723.0 339.8 L724.0 337.9 L725.0 336.0 L726.0 334.0 L727.0 332.1 L728.0 330.2 L729.0 328.2 L730.0 326.3 L731.0 324.4 L732.0 322.4 L733.0 320.5 L734.0 318.5 L735.0 316.6 L736.0 314.6 L737.0 312.7 L738.0 310.7 L739.0 308.8 L740.0 306.8 L741.0 304.9 L742.0 302.9 M658.0 439.3 L657.0 439.2 L656.0 439.0 L655.0 438.7 L654.0 438.2 L653.0 437.6 L652.0 436.8 L651.0 435.9 L650.0 435.0 L649.0 433.9 L648.0 432.7 L647.0 431.5 L646.0 430.1 L645.0 428.8 L644.0 427.3 L643.0 425.8 L642.0 424.2 L641.0 422.6 L640.0 420.9 L639.0 419.3 L638.0 417.5 L637.0 415.8 L636.0 414.0 L635.0 412.2 L634.0 410.3 L633.0 408.5 L632.0 406.6 L631.0 404.7 L630.0 402.8 L629.0 400.9 L628.0 398.9 L627.0 397.0 L626.0 395.0 L625.0 393.0 L624.0 391.0 L623.0 389.0 L622.0 387.0 M609.0 360.3 L608.0 358.3 L607.0 356.2 L606.0 354.1 L605.0 352.0 L604.0 349.9 L603.0 347.8 L602.0 345.7 L601.0 343.6 L600.0 341.5 L599.0 339.4 L598.0 337.3 L597.0 335.1 L596.0 333.0 L595.0 330.9 L594.0 328.8 L593.0 326.7 L592.0 324.5 L591.0 322.4 L590.0 320.3 M658.0 439.3 L659.0 439.2 L660.0 439.0 L661.0 438.7 L662.0 438.2 L663.0 437.6 L664.0 436.8 L665.0 435.9 L666.0 435.0 L667.0 433.9 L668.0 432.7 L669.0 431.5 L670.0 430.1 L671.0 428.8 L672.0 427.3 L673.0 425.8 L674.0 424.2 L675.0 422.6 L676.0 420.9 L677.0 419.3 L678.0 417.5 L679.0 415.8 L680.0 414.0 L681.0 412.2 L682.0 410.3 M693.0 389.0 L694.0 387.0 L695.0 385.0 L696.0 383.0 L697.0 381.0 L698.0 378.9 L699.0 376.9 L700.0 374.8 L701.0 372.8 L702.0 370.7 L703.0 368.7 L704.0 366.6 L705.0 364.5 L706.0 362.4 L707.0 360.3 L708.0 358.3 L709.0 356.2 L710.0 354.1 L711.0 352.0 L712.0 349.9 L713.0 347.8 L714.0 345.7 L715.0 343.6 L716.0 341.5 L717.0 339.4 L718.0 337.3 L719.0 335.1 L720.0 333.0 L721.0 330.9 L722.0 328.8 L723.0 326.7 L724.0 324.5 L725.0 322.4 L726.0 320.3 L727.0 318.2 L728.0 316.0 L729.0 313.9 L730.0 311.8 L731.0 309.6 L732.0 307.5 L733.0 305.4 L734.0 303.2 L735.0 301.1 L736.0 298.9 L737.0 296.8 L738.0 294.7 L739.0 292.5 M658.0 435.8 L657.0 435.8 L656.0 435.5 L655.0 435.1 L654.0 434.6 L653.0 433.9 L652.0 433.0 L651.0 432.1 L650.0 431.0 L649.0 429.8 L648.0 428.5 L647.0 427.1 L646.0 425.7 L645.0 424.1 L644.0 422.5 L643.0 420.9 L642.0 419.1 L641.0 417.3 L640.0 415.5 L639.0 413.6 L638.0 411.7 L637.0 409.8 L636.0 407.8 L635.0 405.8 L634.0 403.8 L633.0 401.7 L632.0 399.6 L631.0 397.5 L630.0 395.4 L629.0 393.3 L628.0 391.1 L627.0 389.0 M658.0 435.8 L659.0 435.8 L660.0 435.5 L661.0 435.1 L662.0 434.6 L663.0 433.9 L664.0 433.0 L665.0 432.1 L666.0 431.0 L667.0 429.8 L668.0 428.5 L669.0 427.1 L670.0 425.7 L671.0 424.1 L672.0 422.5 L673.0 420.9 L674.0 419.1 L675.0 417.3 L676.0 415.5 L677.0 413.6 L678.0 411.7 L679.0 409.8 M658.0 431.7 L657.0 431.6 L656.0 431.3 L655.0 430.9 L654.0 430.3 L653.0 429.5 L652.0 428.6 L651.0 427.5 L650.0 426.3 L649.0 425.0 L648.0 423.5 L647.0 422.0 L646.0 420.3 L645.0 418.6 L644.0 416.8 L643.0 415.0 L642.0 413.0 L641.0 411.0 L640.0 409.0 L639.0 406.9 L638.0 404.8 L637.0 402.6 L636.0 400.4 L635.0 398.2 L634.0 395.9 L633.0 393.6 L632.0 391.3 M621.0 364.6 L620.0 362.1 L619.0 359.6 L618.0 357.1 L617.0 354.6 L616.0 352.1 L615.0 349.5 L614.0 347.0 L613.0 344.4 L612.0 341.9 L611.0 339.3 L610.0 336.8 L609.0 334.2 L608.0 331.6 L607.0 329.0 L606.0 326.5 L605.0 323.9 L604.0 321.3 L603.0 318.7 L602.0 316.1 L601.0 313.5 L600.0 310.9 L599.0 308.3 L598.0 305.7 L597.0 303.1 L596.0 300.5 L595.0 297.8 M658.0 431.7 L659.0 431.6 L660.0 431.3 L661.0 430.9 L662.0 430.3 L663.0 429.5 L664.0 428.6 L665.0 427.5 L666.0 426.3 L667.0 425.0 L668.0 423.5 L669.0 422.0 L670.0 420.3 L671.0 418.6 L672.0 416.8 L673.0 415.0 L674.0 413.0 L675.0 411.0 L676.0 409.0 M686.0 386.6 L687.0 384.2 L688.0 381.8 L689.0 379.4 L690.0 377.0 L691.0 374.5 L692.0 372.1 L693.0 369.6 L694.0 367.1 L695.0 364.6 L696.0 362.1 L697.0 359.6 L698.0 357.1 L699.0 354.6 L700.0 352.1 L701.0 349.5 L702.0 347.0 L703.0 344.4 L704.0 341.9 L705.0 339.3 L706.0 336.8 L707.0 334.2 L708.0 331.6 L709.0 329.0 L710.0 326.5 L711.0 323.9 L712.0 321.3 L713.0 318.7 L714.0 316.1 L715.0 313.5 L716.0 310.9 L717.0 308.3 L718.0 305.7 L719.0 303.1 L720.0 300.5 L721.0 297.8 L722.0 295.2 L723.0 292.6 L724.0 290.0 L725.0 287.4 L726.0 284.7 M658.0 426.6 L657.0 426.5 L656.0 426.2 L655.0 425.7 L654.0 425.0 L653.0 424.1 L652.0 423.1 L651.0 421.9 L650.0 420.5 L649.0 419.0 L648.0 417.4 L647.0 415.7 L646.0 413.8 L645.0 411.9 L644.0 409.8 L643.0 407.7 L642.0 405.6 L641.0 403.3 L640.0 401.0 L639.0 398.7 L638.0 396.3 L637.0 393.8 M626.0 364.9 L625.0 362.2 L624.0 359.4 L623.0 356.7 L622.0 353.9 L621.0 351.1 L620.0 348.2 L619.0 345.4 L618.0 342.6 L617.0 339.8 L616.0 336.9 L615.0 334.0 L614.0 331.2 L613.0 328.3 L612.0 325.4 L611.0 322.6 L610.0 319.7 L609.0 316.8 L608.0 313.9 L607.0 311.0 L606.0 308.1 L605.0 305.1 L604.0 302.2 L603.0 299.3 L602.0 296.4 M658.0 426.6 L659.0 426.5 L660.0 426.2 L661.0 425.7 L662.0 425.0 L663.0 424.1 L664.0 423.1 L665.0 421.9 L666.0 420.5 L667.0 419.0 L668.0 417.4 L669.0 415.7 L670.0 413.8 L671.0 411.9 L672.0 409.8 L673.0 407.7 M683.0 383.7 L684.0 381.1 L685.0 378.4 L686.0 375.8 L687.0 373.1 L688.0 370.4 L689.0 367.7 L690.0 364.9 L691.0 362.2 L692.0 359.4 L693.0 356.7 L694.0 353.9 L695.0 351.1 L696.0 348.2 L697.0 345.4 L698.0 342.6 L699.0 339.8 L700.0 336.9 L701.0 334.0 L702.0 331.2 L703.0 328.3 L704.0 325.4 L705.0 322.6 L706.0 319.7 L707.0 316.8 L708.0 313.9 L709.0 311.0 L710.0 308.1 L711.0 305.1 L712.0 302.2 L713.0 299.3 L714.0 296.4 L715.0 293.5 L716.0 290.5 L717.0 287.6 L718.0 284.7 M658.0 420.2 L657.0 420.1 L656.0 419.7 L655.0 419.1 L654.0 418.4 L653.0 417.4 L652.0 416.2 L651.0 414.8 L650.0 413.3 L649.0 411.6 L648.0 409.7 L647.0 407.7 L646.0 405.6 L645.0 403.4 L644.0 401.1 L643.0 398.7 L642.0 396.2 L641.0 393.7 M658.0 420.2 L659.0 420.1 L660.0 419.7 L661.0 419.1 L662.0 418.4 L663.0 417.4 L664.0 416.2 L665.0 414.8 L666.0 413.3 L667.0 411.6 L668.0 409.7 L669.0 407.7 L670.0 405.6 M658.0 411.9 L657.0 411.8 L656.0 411.4 L655.0 410.7 L654.0 409.8 L653.0 408.6 L652.0 407.3 L651.0 405.7 L650.0 403.9 L649.0 401.9 L648.0 399.8 L647.0 397.5 M637.0 368.6 L636.0 365.3 L635.0 362.0 L634.0 358.6 L633.0 355.2 L632.0 351.7 L631.0 348.2 L630.0 344.7 L629.0 341.2 L628.0 337.6 L627.0 334.0 L626.0 330.4 L625.0 326.8 L624.0 323.1 L623.0 319.4 L622.0 315.7 L621.0 312.0 L620.0 308.3 L619.0 304.6 L618.0 300.8 L617.0 297.1 L616.0 293.3 M658.0 411.9 L659.0 411.8 L660.0 411.4 L661.0 410.7 L662.0 409.8 L663.0 408.6 L664.0 407.3 L665.0 405.7 L666.0 403.9 M675.0 381.2 L676.0 378.1 L677.0 375.0 L678.0 371.8 L679.0 368.6 L680.0 365.3 L681.0 362.0 L682.0 358.6 L683.0 355.2 L684.0 351.7 L685.0 348.2 L686.0 344.7 L687.0 341.2 L688.0 337.6 L689.0 334.0 L690.0 330.4 L691.0 326.8 L692.0 323.1 L693.0 319.4 L694.0 315.7 L695.0 312.0 L696.0 308.3 L697.0 304.6 L698.0 300.8 L699.0 297.1 L700.0 293.3 L701.0 289.5 L702.0 285.7 L703.0 281.9 M658.0 400.7 L657.0 400.6 L656.0 400.1 L655.0 399.3 M643.0 371.2 L642.0 367.8 L641.0 364.3 L640.0 360.7 L639.0 357.0 L638.0 353.2 L637.0 349.4 L636.0 345.5 L635.0 341.5 L634.0 337.5 L633.0 333.5 L632.0 329.4 L631.0 325.2 L630.0 321.1 L629.0 316.9 L628.0 312.6 L627.0 308.4 L626.0 304.1 L625.0 299.8 L624.0 295.4 L623.0 291.1 M670.0 380.7 L671.0 377.7 L672.0 374.5 L673.0 371.2 L674.0 367.8 L675.0 364.3 L676.0 360.7 L677.0 357.0 L678.0 353.2 L679.0 349.4 L680.0 345.5 L681.0 341.5 L682.0 337.5 L683.0 333.5 L684.0 329.4 L685.0 325.2 L686.0 321.1 L687.0 316.9 L688.0 312.6 L689.0 308.4 L690.0 304.1 L691.0 299.8 L692.0 295.4 L693.0 291.1 L694.0 286.7 L695.0 282.3 M650.0 373.1 L649.0 370.3 L648.0 367.2 L647.0 363.8 L646.0 360.3 L645.0 356.6 L644.0 352.7 L643.0 348.6 L642.0 344.5 L641.0 340.1 L640.0 335.7 L639.0 331.2 L638.0 326.6 L637.0 321.9 L636.0 317.1 L635.0 312.3 L634.0 307.4 L633.0 302.4 L632.0 297.4 L631.0 292.4 L630.0 287.3 M664.0 378.0 L665.0 375.7 L666.0 373.1 L667.0 370.3 L668.0 367.2 L669.0 363.8 L670.0 360.3 L671.0 356.6 L672.0 352.7 L673.0 348.6 L674.0 344.5 L675.0 340.1 L676.0 335.7 L677.0 331.2 L678.0 326.6 L679.0 321.9 L680.0 317.1 L681.0 312.3 L682.0 307.4 L683.0 302.4 L684.0 297.4 L685.0 292.4 L686.0 287.3 L687.0 282.1 M658.0 360.0 L657.0 359.8 L656.0 359.0 L655.0 357.8 L654.0 356.1 L653.0 353.9 L652.0 351.4 L651.0 348.4 L650.0 345.1 L649.0 341.4 L648.0 337.4 L647.0 333.1 L646.0 328.6 L645.0 323.8 L644.0 318.8 L643.0 313.6 L642.0 308.2 L641.0 302.7 L640.0 297.1 L639.0 291.3 L638.0 285.3 M658.0 360.0 L659.0 359.8 L660.0 359.0 L661.0 357.8 L662.0 356.1 L663.0 353.9 L664.0 351.4 L665.0 348.4 L666.0 345.1 L667.0 341.4 L668.0 337.4 L669.0 333.1 L670.0 328.6 L671.0 323.8 L672.0 318.8 L673.0 313.6 L674.0 308.2 L675.0 302.7 L676.0 297.1 L677.0 291.3 L678.0 285.3 M658.0 316.2 L657.0 315.9 L656.0 314.8 L655.0 313.1 L654.0 310.8 L653.0 307.8 L652.0 304.2 L651.0 300.1 L650.0 295.4 L649.0 290.3 L648.0 284.8 M658.0 316.2 L659.0 315.9 L660.0 314.8 L661.0 313.1 L662.0 310.8 L663.0 307.8 L664.0 304.2 L665.0 300.1 L666.0 295.4 L667.0 290.3 L668.0 284.8 M664.0 473.0L726.0 475.4 M664.0 473.0L724.0 478.6 M664.0 473.0L722.0 481.6 M664.0 473.0L720.0 484.4 M664.0 473.0L718.0 487.0 M634.0 325.5 L637.0 327.0 L640.0 326.5 L643.0 327.7 L646.0 328.3 L649.0 328.6 L652.0 329.2 L655.0 330.6 L658.0 328.9 L661.0 331.8 L664.0 330.3 L667.0 330.4 L670.0 332.8 L673.0 332.7 L676.0 333.1 L679.0 332.8 L682.0 334.7 L685.0 334.0 L688.0 335.6 M625.0 312.2 L628.0 313.5 L631.0 314.2 L634.0 314.0 L637.0 314.7 L640.0 314.1 L643.0 316.1 L646.0 316.7 L649.0 315.8 L652.0 317.3 L655.0 318.3 L658.0 317.1 L661.0 319.5 L664.0 320.1 L667.0 318.4 L670.0 319.4 L673.0 319.5 L676.0 320.4 L679.0 320.4 L682.0 322.0 L685.0 321.8 L688.0 322.4 L691.0 323.3 L694.0 323.6 L697.0 325.2 L700.0 325.5 L703.0 324.4 M612.0 298.1 L615.0 298.0 L618.0 299.3 L621.0 299.2 L624.0 301.2 L627.0 301.9 L630.0 303.0 L633.0 301.4 L636.0 301.4 L639.0 303.8 L642.0 303.4 L645.0 305.2 L648.0 304.3 L651.0 304.6 L654.0 304.4 L657.0 307.2 L660.0 306.5 L663.0 306.8 L666.0 307.3 L669.0 308.6 L672.0 309.3 L675.0 308.8 L678.0 308.5 L681.0 309.6 L684.0 311.3 L687.0 310.6 L690.0 311.7 L693.0 311.9 L696.0 312.1 L699.0 312.9 L702.0 312.5 L705.0 313.8 L708.0 315.1 L711.0 313.5 L714.0 314.8 L717.0 316.6 L720.0 317.3 M602.0 285.9 L605.0 288.0 L608.0 288.5 L611.0 289.5 L614.0 289.0 L617.0 288.6 L620.0 289.6 L623.0 291.1 L626.0 291.6 L629.0 290.8 L632.0 292.4 L635.0 292.9 L638.0 293.4 L641.0 292.2 L644.0 293.8 L647.0 293.9 L650.0 295.1 L653.0 294.9 L656.0 294.9 L659.0 296.8 L662.0 296.2 L665.0 298.0 L668.0 297.3 L671.0 298.4 L674.0 299.5 L677.0 298.2 L680.0 300.3 L683.0 299.0 L686.0 301.8 L689.0 299.9 L692.0 302.2 L695.0 301.7 L698.0 301.7 L701.0 302.8 L704.0 303.5 L707.0 303.8 L710.0 303.5 L713.0 305.0 L716.0 304.9 L719.0 307.1 L722.0 306.1 L725.0 306.7 L728.0 306.7 L731.0 309.1 L734.0 307.9 L737.0 309.2" stroke="#fff" stroke-width="1.15" fill="none" stroke-linejoin="round"/>
<g transform="rotate(52 651 455)"><ellipse cx="651" cy="455" rx="30" ry="9" fill="#fff" opacity="0.35"/><ellipse cx="655" cy="455" rx="21" ry="5.5" fill="#fff" opacity="0.6"/><ellipse cx="660" cy="455" rx="13" ry="3.2" fill="#fff"/></g>
<path d="M641 497 Q646 488 660 483 L672 480 L690 484" stroke="#fff" stroke-width="2" fill="none"/><path d="M666 480 L700 490" stroke="#fff" stroke-width="1" stroke-dasharray="2 1.5" fill="none"/>
<path d="M635.7 266.1 L637.4 263.5 L637.8 260.8 L636.8 258.0 L634.5 255.9 L631.2 254.5 L627.5 252.6 L623.9 252.4 L620.8 253.6 L618.8 255.9 L618.1 258.4 L618.9 261.6 M621.0 264.9 L624.1 266.6 L627.8 267.3 L631.5 267.6 M646.3 270.7 L649.3 268.6 L650.7 265.4 L650.3 263.0 L648.3 259.1 L644.8 256.1 M640.0 252.9 L634.4 250.5 L628.2 249.2 L622.0 248.2 L616.3 248.5 L611.5 249.6 M607.9 250.2 L605.8 253.0 L605.3 255.6 L606.6 259.4 L609.4 262.3 L613.7 265.2 L619.0 267.8 L625.0 270.3 L631.2 270.8 L637.2 271.7 M657.0 274.5 L660.6 271.8 L662.9 269.2 L663.6 266.8 L662.9 263.4 L660.7 260.1 L657.1 256.0 L652.3 252.9 L646.4 249.8 L639.8 247.4 L632.7 245.1 L625.4 243.6 M618.2 244.0 L611.4 243.7 L605.3 244.0 L600.2 245.2 L596.2 247.4 L593.6 249.8 L592.4 252.8 L592.8 256.3 L594.6 259.2 L597.8 263.2 L602.3 266.5 L607.9 269.6 M614.3 272.7 L621.3 274.8 L628.6 276.1 L635.9 277.7 L642.8 277.8 M667.7 279.3 L671.9 277.9 L674.7 274.8 L676.3 272.0 L676.4 269.1 L675.2 265.2 L672.6 260.7 L668.7 257.5 L663.7 253.5 L657.6 250.4 L650.7 247.4 L643.2 244.7 M635.2 241.6 L627.0 239.3 L618.9 238.1 L611.0 237.4 L603.5 237.6 L596.8 238.2 L591.0 240.7 L586.2 242.4 L582.7 244.4 L580.4 247.7 L579.5 250.7 L580.0 253.9 L581.8 258.4 L585.0 261.5 L589.4 265.5 L594.9 269.0 L601.4 272.5 L608.6 275.4 M616.4 277.6 L624.5 279.5 L632.7 280.9 L640.8 281.9 L648.5 282.7 M678.4 284.4 L682.8 282.1 L686.2 279.7 L688.3 277.3 L689.3 274.0 L689.1 270.7 M687.7 265.5 L685.1 261.5 L681.4 258.3 L676.6 254.2 L670.9 251.0 L664.3 247.2 L657.0 244.2 L649.2 241.6 L640.9 239.0 L632.4 236.5 L623.7 235.5 L615.2 233.9 L606.9 232.3 L599.1 232.1 L591.8 232.2 L585.2 233.1 L579.4 234.9 L574.6 236.5 M570.9 239.9 L568.3 243.0 L566.9 245.5 L566.7 249.2 L567.6 252.6 L569.8 255.6 M573.1 260.7 L577.5 264.5 L582.9 268.0 L589.2 271.4 L596.2 274.9 L603.9 277.4 M612.1 279.4 L620.5 281.6 L629.1 283.9 L637.7 285.2 L646.1 286.3 L654.1 286.5 M689.1 288.4 L693.7 286.3 L697.4 283.9 L700.1 281.8 L701.7 278.4 L702.3 275.0 L701.8 271.5 L700.3 267.7 L697.7 264.1 L694.1 260.6 L689.5 256.7 L684.1 252.7 L677.9 249.4 L670.9 245.8 L663.3 243.0 L655.3 240.1 L646.8 236.9 L638.1 234.9 M629.2 233.7 L620.3 232.4 L611.5 231.0 L602.9 230.7 L594.7 230.4 L587.0 230.0 L579.9 230.1 L573.5 231.7 L567.8 232.5 L563.0 234.2 L559.2 236.7 L556.3 238.9 L554.5 241.5 L553.7 244.2 L554.0 247.9 L555.4 251.4 L557.8 254.9 L561.2 258.3 L565.6 261.7 L570.9 265.6 L576.9 269.1 L583.8 272.4 L591.2 275.9 L599.2 279.3 M607.6 281.0 L616.3 283.5 L625.2 285.6 L634.1 287.6 L642.9 289.2 L651.5 290.0 L659.8 292.6 M699.8 292.5 L704.7 290.6 L708.7 288.6 L711.7 285.6 L713.8 283.2 L715.0 279.9 L715.1 276.1 L714.3 273.1 L712.5 269.5 L709.7 265.6 L706.0 261.4 L701.4 257.9 L696.0 255.5 L689.8 251.1 L682.9 248.2 L675.3 244.5 L667.3 240.9 L658.8 238.3 L649.9 234.8 L640.8 232.6 L631.5 230.2 L622.2 228.3 L613.0 227.2 L604.0 226.1 L595.2 224.0 L586.8 223.4 L578.8 223.9 L571.4 224.1 L564.7 225.4 L558.7 226.0 L553.4 228.7 L549.0 230.9 L545.6 233.1 L543.0 235.7 L541.4 238.8 L540.8 241.9 L541.2 245.7 L542.6 249.6 L544.9 253.7 L548.2 256.9 L552.4 261.3 L557.5 264.5 L563.3 268.3 L569.9 272.1 L577.2 275.6 L585.0 279.3 L593.3 282.4 L602.0 285.4 L611.0 287.2 L620.2 289.4 L629.5 291.6 L638.8 292.6 L647.9 294.1 L656.9 294.9 L665.5 295.2 M584.9 219.7 L580.9 218.9 L577.0 219.1 L573.2 219.3 L569.5 219.9 L566.0 219.5 L562.5 221.1 L559.2 221.8 L556.0 221.6 L553.0 222.3 L550.1 222.8 L547.4 223.5 L544.8 222.7 L542.4 223.2 L540.2 224.7 L538.1 225.4 L536.3 226.2 L534.6 227.9 M533.1 231.0 L531.7 232.1 L530.6 233.0 L529.7 234.1 L528.9 236.2 L528.4 237.7 L528.1 236.6 L527.9 238.0 L528.0 239.8 L528.2 241.5 L528.7 242.7 L529.3 244.8 M530.2 249.3 L531.2 251.1 L532.5 253.0 L533.9 254.5 L535.5 256.1 L537.3 257.9 M539.3 258.9 L541.5 260.7 L543.8 262.0 L546.3 264.2 L548.9 266.0 L551.8 267.4 L554.7 270.2 L557.8 271.8 L561.1 273.6 L564.5 275.8 L568.0 277.2 L571.6 279.2 M575.4 278.2 L579.2 280.2 L583.2 281.2 L587.2 282.6 L591.3 284.6 L595.5 285.5 M599.8 288.7 L604.1 290.4 L608.5 291.8 L612.9 292.6 L617.3 293.7 L621.7 294.4 M626.2 294.8 L630.7 295.7 M579.2 215.6 L575.2 215.0 L571.2 215.2 L567.3 215.2 L563.6 215.3 L559.9 215.8 M556.3 213.5 L552.9 214.3 L549.6 214.5 L546.4 214.9 L543.3 215.4 L540.4 216.4 L537.6 219.6 L534.9 220.6 L532.4 220.9 L530.1 221.8 L527.9 222.6 L525.9 223.9 M524.0 224.3 L522.4 225.9 L520.8 226.7 L519.5 227.8 L518.3 229.5 L517.3 230.9 M516.5 230.5 L515.9 232.1 L515.4 233.7 L515.1 235.0 L515.0 236.3 L515.1 238.1 L515.4 239.3 L515.8 241.4 L516.5 243.1 L517.3 244.8 L518.3 246.2 L519.4 248.4 L520.8 249.3 L522.3 251.3 L524.0 252.8 L525.8 255.0 L527.8 256.1 L530.0 258.6 L532.3 263.0 L534.8 264.4 L537.4 266.6 L540.2 268.2 L543.1 270.0 L546.2 271.6 L549.4 273.2 L552.7 275.7 L556.2 276.8 L559.7 278.7 L563.4 280.4 L567.1 282.2 L571.0 284.2 L575.0 285.5 L579.0 286.9 L583.1 288.3 L587.3 290.1 L591.6 291.6 L595.9 291.1 L600.3 292.4 L604.7 293.7 L609.1 294.7 L613.6 296.5 L618.1 297.3 L622.6 298.4 L627.2 299.4 M573.6 209.9 L569.5 209.4 L565.6 209.1 L561.7 209.0 L557.9 209.1 L554.2 209.4 L550.6 210.7 L547.1 211.4 L543.7 211.5 L540.4 212.0 L537.2 212.4 L534.1 212.5 L531.2 210.7 L528.4 211.1 L525.7 212.2 L523.1 212.9 L520.7 213.3 L518.4 214.0 L516.3 217.1 L514.2 217.9 L512.4 219.3 L510.7 220.1 L509.1 221.8 L507.7 222.9 L506.5 222.7 L505.4 223.9 L504.4 225.3 L503.7 227.2 L503.0 228.3 L502.6 230.0 L502.3 231.7 L502.1 233.2 L502.2 234.6 L502.4 236.3 L502.7 237.7 L503.2 240.0 L503.9 242.7 L504.7 244.0 L505.7 245.9 L506.9 247.6 L508.2 249.8 L509.6 250.9 L511.2 252.4 L513.0 254.2 L514.9 255.6 L516.9 257.4 L519.1 259.6 L521.5 261.1 M523.9 264.4 L526.5 266.1 L529.3 268.1 L532.1 270.0 L535.1 271.3 L538.2 273.5 L541.4 271.6 L544.8 273.7 L548.2 275.3 L551.7 277.3 L555.4 278.6 L559.1 280.2 L562.9 285.4 L566.8 286.8 L570.8 288.0 L574.9 290.1 L579.0 291.1 L583.2 292.8 M587.4 291.1 L591.7 292.5 L596.1 293.7 L600.5 294.8 L604.9 296.3 L609.3 297.4 L613.8 299.3 L618.3 300.5 L622.8 301.1 M567.9 203.6 L563.9 203.6 L559.9 203.9 L556.1 203.7 L552.3 203.4 L548.6 204.0 L544.9 202.8 L541.4 203.0 L537.9 203.4 L534.6 203.9 L531.3 204.1 L528.1 205.1 M525.1 209.1 L522.1 209.6 L519.3 210.1 L516.5 210.5 L513.9 211.8 L511.4 212.5 M509.1 208.8 L506.8 209.6 L504.7 210.7 L502.7 212.0 L500.8 212.3 L499.1 214.1 M497.5 216.5 L496.1 217.2 L494.7 218.3 L493.6 219.5 L492.5 221.0 L491.6 222.1 M490.9 223.3 L490.3 224.6 L489.8 225.9 L489.5 227.6 L489.3 229.3 L489.2 230.8 L489.4 233.1 L489.6 234.5 L490.0 236.0 L490.6 237.6 L491.2 239.1 L492.1 241.4 M493.0 244.3 L494.2 246.0 L495.4 247.0 L496.8 249.3 L498.3 250.7 L500.0 252.7 L501.8 255.4 L503.7 257.4 L505.8 258.8 L508.0 260.9 L510.3 262.5 L512.7 264.8 L515.3 263.0 L517.9 264.9 L520.7 266.6 L523.6 268.4 L526.6 270.5 L529.8 271.9 M533.0 276.7 L536.3 278.6 L539.7 279.7 L543.2 281.5 L546.8 283.5 L550.5 284.9 M554.2 287.1 L558.1 289.1 L562.0 290.2 L566.0 292.2 L570.0 293.7 L574.1 294.6 L578.3 294.2 L582.5 296.2 L586.7 297.5 L591.1 298.8 L595.4 300.0 L599.8 300.8 M604.2 304.3 L608.6 305.4 L613.1 306.2 L617.5 307.6 M562.2 199.1 L558.2 199.7 L554.2 199.1 L550.3 199.4 L546.5 199.2 L542.8 199.5 L539.1 198.5 L535.5 199.1 L531.9 199.0 L528.5 199.9 L525.1 200.1 L521.9 200.3 L518.7 204.3 L515.6 204.1 L512.7 205.1 L509.8 205.7 L507.0 206.3 L504.4 206.5 L501.8 207.5 L499.4 208.4 L497.0 208.8 L494.8 209.5 L492.7 211.2 L490.8 211.6 M488.9 209.1 L487.2 210.0 L485.6 210.6 L484.1 211.7 L482.7 213.5 L481.5 214.6 M480.4 218.2 L479.4 219.9 L478.6 220.5 L477.9 222.2 L477.3 223.3 L476.9 225.5 L476.6 224.6 L476.4 226.0 L476.4 227.0 L476.4 229.1 L476.7 230.5 L477.0 232.1 L477.5 234.1 L478.2 235.3 L478.9 237.5 L479.8 238.8 L480.8 240.4 L482.0 242.1 L483.3 245.6 L484.7 247.6 L486.2 249.1 L487.9 250.8 L489.6 253.0 L491.5 254.1 M493.6 253.9 L495.7 255.6 L498.0 257.6 L500.3 259.1 L502.8 261.6 L505.4 263.0 L508.1 269.0 L510.9 270.8 L513.8 272.3 L516.9 274.4 L520.0 275.7 L523.2 277.7 L526.5 277.8 L529.9 279.6 L533.3 281.7 L536.9 283.4 L540.5 285.2 L544.3 286.1 M548.0 286.4 L551.9 288.0 L555.8 289.5 L559.8 291.1 L563.9 292.4 L568.0 293.9 L572.1 298.7 L576.4 300.1 L580.6 301.4 L584.9 302.9 L589.2 304.1 L593.6 305.0 L598.0 304.2 L602.4 305.5 L606.9 306.5 L611.4 307.6 M510.2 196.8 L508.2 196.4 L506.3 196.7 L504.5 197.6 L502.6 197.7 L500.8 198.1 L499.1 199.1 L497.3 199.3 L495.6 200.4 L494.0 200.9 L492.4 200.8 L490.8 201.4 M489.3 200.9 L487.8 201.4 L486.3 201.4 L484.9 202.0 L483.6 202.9 L482.2 203.5 L480.9 204.4 L479.7 205.4 L478.5 206.1 L477.4 206.7 L476.3 206.8 L475.2 207.8 L474.2 211.0 L473.2 211.4 L472.3 212.0 L471.4 213.3 L470.5 213.5 L469.7 214.9 L469.0 214.1 L468.3 214.9 L467.6 215.4 L467.0 215.8 L466.5 217.1 L466.0 217.7 L465.5 216.8 L465.1 217.1 L464.7 218.1 L464.4 219.1 L464.1 220.1 L463.9 220.9 L463.7 222.6 L463.6 224.0 L463.5 224.6 L463.5 226.0 L463.5 227.0 L463.5 227.4 M463.6 229.3 L463.8 230.5 L464.0 231.5 L464.3 232.2 L464.6 233.0 L464.9 234.1 M465.3 235.0 L465.7 236.3 L466.2 237.6 L466.8 238.3 L467.4 239.2 L468.0 240.5 L468.7 239.8 L469.4 240.9 L470.2 242.2 L471.0 243.6 L471.8 244.1 L472.7 245.2 M473.7 245.7 L474.7 246.9 L475.7 248.2 L476.8 249.1 L478.0 250.2 L479.1 251.3 L480.4 255.6 L481.6 257.1 L482.9 257.7 L484.3 259.4 L485.7 260.1 L487.1 261.4 M488.6 260.1 L490.1 261.8 L491.6 262.5 L493.2 263.9 L494.9 264.8 L496.5 266.0 M498.2 266.1 L500.0 267.4 L501.8 268.4 L503.6 269.1 L505.4 270.8 L507.3 271.6 M509.3 271.9 L511.2 273.4 L513.2 274.3 L515.3 275.2 L517.3 276.2 M496.7 191.5 L494.9 192.2 L493.1 192.5 L491.4 192.8 L489.7 193.3 L488.0 193.4 M486.4 192.5 L484.8 193.0 L483.2 193.6 L481.7 194.3 L480.2 194.5 L478.7 194.9 L477.3 196.3 L475.9 196.4 L474.5 196.7 L473.2 197.9 L471.9 197.9 L470.6 198.9 L469.4 198.4 L468.2 199.4 L467.0 199.5 L465.9 200.0 L464.9 200.6 L463.8 201.8 L462.8 206.8 L461.9 207.1 L460.9 207.8 L460.0 208.3 L459.2 209.7 L458.4 209.7 M457.6 208.6 L456.9 209.5 L456.2 210.6 L455.5 210.8 L454.9 211.5 L454.4 212.6 L453.8 213.3 L453.3 214.6 L452.9 214.8 L452.5 215.7 L452.1 216.6 L451.8 217.6 L451.5 217.7 L451.2 218.7 L451.0 219.2 L450.8 219.7 L450.7 221.2 L450.6 221.5 M450.6 222.0 L450.6 223.1 L450.6 223.4 L450.7 224.5 L450.8 225.9 L450.9 226.7 L451.1 226.6 L451.4 227.3 L451.7 228.0 L452.0 229.4 L452.3 230.1 L452.7 230.9 L453.2 232.2 L453.6 233.4 L454.2 234.5 L454.7 235.5 L455.3 236.4 L456.0 237.7 M456.6 238.5 L457.4 239.4 L458.1 240.5 L458.9 241.4 L459.7 242.2 L460.6 243.5 M461.5 246.6 L462.5 247.6 L463.5 249.2 L464.5 249.8 L465.6 250.9 L466.7 252.1 L467.8 250.9 L469.0 252.0 L470.2 253.1 L471.4 253.7 L472.7 254.6 L474.0 256.2 L475.4 260.0 L476.8 260.9 L478.2 262.5 L479.6 263.3 L481.1 264.6 L482.7 265.3 L484.2 264.7 L485.8 265.9 L487.4 266.5 L489.1 267.9 L490.8 268.7 L492.5 270.1 L494.2 273.1 L496.0 274.0 L497.8 275.6 L499.7 276.5 L501.5 277.2 M482.7 186.9 L481.1 186.4 L479.5 187.4 L477.9 187.5 L476.4 187.9 L474.8 188.2 L473.4 190.1 L471.9 191.1 L470.5 190.9 L469.0 191.3 L467.7 192.2 L466.3 192.6 L465.0 195.5 L463.7 195.2 L462.4 195.7 L461.2 196.3 L460.0 197.3 L458.8 197.3 L457.7 196.3 L456.6 197.1 L455.5 198.0 L454.4 198.4 L453.4 198.7 L452.4 199.3 L451.4 198.8 L450.5 199.3 L449.6 199.6 L448.7 200.5 L447.9 201.0 L447.1 201.9 L446.3 202.9 L445.6 203.4 L444.9 204.1 L444.2 205.0 L443.6 205.5 L443.0 206.5 L442.4 205.1 L441.8 205.6 L441.3 206.6 L440.9 206.8 L440.4 207.7 L440.0 208.8 L439.6 214.3 L439.3 214.7 L439.0 215.0 L438.7 215.9 L438.4 216.7 L438.2 217.9 M438.1 215.8 L437.9 216.3 L437.8 217.8 L437.7 218.6 L437.7 219.2 L437.7 220.0 L437.7 220.7 L437.8 222.0 L437.9 222.9 L438.0 223.6 L438.1 224.5 L438.3 224.8 M438.6 224.7 L438.8 225.9 L439.1 227.2 L439.4 228.0 L439.8 229.0 L440.2 229.4 M440.6 230.9 L441.1 231.6 L441.6 233.0 L442.1 233.7 L442.7 235.0 L443.3 235.8 M443.9 239.0 L444.5 239.9 L445.2 240.9 L446.0 241.7 L446.7 242.6 L447.5 243.4 L448.3 241.6 L449.2 242.2 L450.1 243.8 L451.0 244.8 L451.9 245.7 L452.9 246.7 M453.9 249.7 L454.9 251.1 L456.0 252.3 L457.1 252.5 L458.2 253.5 L459.4 254.7 L460.6 254.8 L461.8 256.3 L463.1 256.9 L464.3 258.4 L465.6 258.9 L467.0 259.9 L468.3 260.2 L469.7 261.4 L471.2 261.7 L472.6 263.1 L474.1 264.3 L475.6 265.5 M477.1 270.2 L478.7 271.7 L480.3 272.3 L481.9 273.6 L483.5 274.0 L485.2 274.8 M468.3 187.7 L466.9 187.8 L465.4 188.3 L464.0 189.0 L462.6 189.3 L461.3 189.7 L459.9 185.3 L458.6 186.1 L457.3 186.9 L456.0 186.7 L454.8 187.2 L453.5 187.8 L452.3 188.2 L451.1 188.2 L450.0 189.3 L448.8 189.1 L447.7 190.1 L446.6 190.3 M445.6 190.8 L444.5 191.1 L443.5 191.3 L442.6 192.1 L441.6 192.8 L440.7 193.3 M439.8 195.8 L438.9 196.7 L438.0 197.1 L437.2 197.6 L436.4 198.3 L435.6 198.6 L434.8 199.1 L434.1 200.3 L433.4 200.2 L432.8 201.3 L432.1 201.9 L431.5 202.2 L430.9 205.0 L430.3 205.8 L429.8 206.6 L429.3 207.2 L428.8 207.5 L428.3 208.3 M427.9 207.9 L427.5 209.0 L427.1 209.8 L426.8 210.5 L426.5 210.7 L426.2 211.3 L425.9 212.5 L425.7 213.0 L425.5 214.1 L425.3 214.7 L425.1 215.7 L425.0 216.8 M424.9 214.2 L424.8 214.5 L424.8 215.4 L424.8 216.3 L424.8 217.6 L424.8 217.8 L424.9 219.1 L425.0 220.2 L425.1 221.2 L425.3 221.7 L425.5 222.9 L425.7 223.3 L425.9 223.1 L426.2 224.3 L426.5 224.5 L426.8 225.9 L427.1 226.7 L427.5 227.3 L427.9 228.6 L428.3 229.3 L428.8 230.1 L429.3 231.2 L429.8 232.0 L430.3 232.8 L430.9 234.1 L431.5 235.2 L432.1 236.2 L432.7 236.8 L433.4 237.5 L434.1 238.3 L434.8 241.8 L435.6 243.1 L436.3 244.2 L437.1 244.7 L438.0 246.0 L438.8 246.5 L439.7 247.4 L440.6 248.4 L441.6 249.9 L442.5 250.0 L443.5 251.2 L444.5 252.2 L445.5 254.1 L446.6 254.8 L447.7 255.2 L448.8 256.2 L449.9 257.1 L451.1 258.3 L452.3 255.2 L453.5 255.8 L454.7 257.3 L455.9 257.9 L457.2 259.2 L458.5 259.7 L459.8 264.0 L461.2 265.3 L462.6 265.7 L464.0 266.8 L465.4 267.8 L466.8 269.1 M453.6 181.8 L452.3 182.7 L451.0 182.7 L449.7 183.2 L448.5 183.5 L447.2 183.8 L446.0 186.9 L444.8 187.2 L443.6 187.5 L442.5 187.5 L441.3 187.8 L440.2 188.8 L439.1 186.9 L438.1 187.3 L437.0 188.3 L436.0 188.4 L434.9 188.5 L433.9 189.2 M433.0 188.2 L432.0 188.6 L431.1 189.0 L430.2 188.9 L429.3 189.7 L428.4 190.0 L427.6 193.3 L426.7 193.8 L425.9 193.8 L425.2 194.3 L424.4 194.9 L423.7 196.0 L422.9 196.7 L422.2 197.8 L421.6 197.8 L420.9 198.5 L420.3 198.8 L419.7 200.2 L419.1 198.2 L418.5 198.6 L418.0 199.5 L417.5 200.0 L417.0 200.7 L416.5 201.4 L416.1 199.4 L415.6 200.1 L415.2 200.8 L414.9 202.0 L414.5 201.9 L414.2 202.9 L413.8 203.9 L413.6 204.7 L413.3 205.2 L413.0 206.1 L412.8 206.5 L412.6 207.3 L412.5 212.1 L412.3 212.3 L412.2 213.5 L412.1 214.1 L412.0 214.7 L411.9 215.3 M411.9 214.7 L411.9 215.6 L411.9 216.2 L411.9 216.9 L412.0 218.2 L412.1 219.0 M412.2 220.1 L412.3 220.9 L412.5 221.5 L412.6 222.0 L412.8 223.0 L413.0 223.7 M413.3 222.7 L413.6 223.4 L413.8 224.4 L414.2 224.6 L414.5 225.5 L414.8 226.5 M415.2 226.0 L415.6 226.8 L416.1 228.0 L416.5 228.5 L417.0 229.4 L417.5 230.2 L418.0 235.0 L418.5 236.6 L419.1 237.3 L419.7 237.6 L420.3 238.4 L420.9 239.4 M421.6 239.3 L422.2 240.5 L422.9 241.0 L423.6 242.0 L424.4 243.0 L425.1 243.7 M425.9 240.6 L426.7 241.5 L427.6 242.5 L428.4 243.3 L429.3 244.1 L430.2 244.7 L431.1 251.1 L432.0 251.5 L433.0 252.6 L433.9 254.0 L434.9 254.5 L435.9 255.2 L437.0 255.9 L438.0 257.1 L439.1 258.0 L440.2 258.5 L441.3 259.6 L442.5 260.7 L443.6 260.7 L444.8 261.3 L446.0 262.0 L447.2 262.8 L448.4 264.3 L449.7 265.2 M438.6 175.8 L437.4 176.7 L436.3 177.0 L435.1 177.3 L434.0 177.3 L432.9 178.1 L431.8 178.8 L430.8 178.9 L429.7 179.4 L428.7 179.5 L427.7 180.5 L426.7 180.4 M425.7 180.4 L424.7 180.8 L423.8 181.1 L422.9 181.8 L421.9 182.1 L421.1 182.1 M420.2 185.1 L419.3 185.5 L418.5 185.9 L417.6 186.6 L416.8 187.5 L416.0 187.8 M415.2 185.4 L414.5 185.8 L413.7 185.9 L413.0 186.4 L412.3 187.3 L411.6 187.9 L411.0 188.0 L410.3 188.8 L409.7 189.3 L409.0 189.7 L408.4 190.7 L407.9 190.8 L407.3 193.9 L406.8 194.6 L406.2 195.0 L405.7 195.3 L405.2 196.0 L404.8 196.6 L404.3 200.6 L403.9 200.8 L403.5 201.7 L403.1 202.2 L402.7 202.6 L402.3 203.6 L402.0 199.3 L401.6 199.9 L401.3 200.7 L401.1 201.4 L400.8 202.2 L400.5 202.8 M400.3 206.9 L400.1 207.4 L399.9 208.4 L399.7 208.7 L399.6 209.2 L399.4 209.6 L399.3 208.4 L399.2 208.9 L399.1 209.9 L399.1 210.3 L399.0 211.0 L399.0 211.9 L399.0 211.9 L399.0 212.5 L399.0 213.0 L399.1 213.6 L399.2 214.7 L399.3 215.8 L399.4 215.5 L399.5 216.6 L399.6 217.1 L399.8 218.1 L400.0 218.2 L400.2 219.0 L400.4 219.5 L400.6 220.2 L400.9 221.4 L401.2 221.7 L401.5 222.6 L401.8 223.6 L402.1 227.0 L402.5 227.4 L402.8 227.9 L403.2 229.4 L403.6 229.8 L404.1 230.6 L404.5 227.6 L405.0 228.5 L405.4 229.0 L405.9 230.3 L406.5 230.6 L407.0 231.3 M407.5 237.4 L408.1 238.3 L408.7 239.5 L409.3 239.6 L409.9 240.5 L410.6 241.7 L411.2 237.3 L411.9 238.0 L412.6 238.9 L413.3 239.1 L414.1 240.6 L414.8 240.9 L415.6 246.9 L416.4 247.3 L417.2 248.0 L418.0 248.7 L418.8 249.8 L419.7 250.2 L420.5 247.3 L421.4 248.3 L422.3 248.6 L423.3 249.6 L424.2 250.4 L425.2 251.0 L426.1 252.9 L427.1 253.5 L428.1 254.4 L429.1 255.4 L430.2 256.3 L431.2 256.9 L432.3 256.0 L433.4 256.8 M423.3 172.7 L422.2 172.9 L421.2 173.2 L420.2 173.3 L419.2 174.1 L418.3 174.3 L417.3 176.2 L416.4 176.5 L415.5 176.9 L414.5 176.6 L413.6 177.2 L412.7 177.6 L411.9 178.0 L411.0 177.8 L410.2 178.5 L409.3 179.3 L408.5 179.6 L407.7 179.7 L406.9 179.2 L406.1 179.8 L405.4 179.8 L404.6 180.3 L403.9 181.3 L403.2 180.9 M402.5 185.3 L401.8 185.5 L401.1 186.4 L400.5 186.3 L399.8 187.3 L399.2 187.2 M398.6 183.9 L397.9 184.6 L397.4 185.5 L396.8 185.5 L396.2 186.3 L395.7 186.3 L395.1 189.9 L394.6 190.8 L394.1 191.3 L393.6 191.7 L393.2 192.6 L392.7 193.0 M392.3 190.4 L391.9 191.1 L391.4 192.0 L391.0 192.8 L390.7 193.3 L390.3 193.8 L390.0 194.3 L389.6 194.6 L389.3 195.6 L389.0 195.8 L388.7 196.0 L388.4 196.7 L388.2 197.6 L387.9 198.4 L387.7 198.3 L387.5 198.9 L387.3 200.3 L387.1 200.3 L386.9 201.7 L386.8 202.8 L386.6 203.5 L386.5 203.9 L386.4 204.5 L386.3 204.6 L386.3 208.2 L386.2 208.6 L386.1 208.9 L386.1 209.6 L386.1 210.6 L386.1 210.8 M386.1 208.7 L386.2 209.1 L386.2 209.6 L386.3 210.7 L386.3 211.1 L386.4 211.5 L386.6 215.3 L386.7 216.0 L386.8 216.8 L387.0 217.8 L387.1 218.2 L387.3 218.5 M387.5 219.5 L387.7 220.4 L388.0 220.5 L388.2 221.6 L388.5 222.1 L388.8 223.0 L389.1 225.3 L389.4 225.8 L389.7 226.4 L390.0 227.3 L390.4 228.1 L390.8 228.5 L391.1 229.0 L391.5 229.6 L392.0 230.8 L392.4 231.5 L392.8 232.3 L393.3 232.4 L393.8 228.4 L394.2 229.7 L394.8 230.3 L395.3 230.8 L395.8 231.6 L396.4 232.5 L396.9 233.9 L397.5 234.5 L398.1 235.2 L398.7 235.5 L399.3 236.4 L400.0 237.1 L400.6 237.3 L401.3 238.3 L402.0 238.7 L402.6 239.8 L403.4 240.1 L404.1 240.9 L404.8 243.7 L405.6 244.1 L406.3 244.4 L407.1 245.4 L407.9 246.1 L408.7 247.1 L409.5 249.6 L410.4 250.3 L411.2 250.5 L412.1 251.2 L413.0 252.5 L413.8 253.1 L414.8 254.4 L415.7 255.5 M407.7 174.1 L406.8 174.5 L406.0 175.4 L405.1 175.5 L404.2 175.5 L403.4 176.3 L402.6 177.2 L401.8 177.7 L401.0 177.5 L400.2 178.1 L399.4 178.7 L398.6 178.7 L397.8 174.0 L397.1 173.8 L396.3 174.2 L395.6 175.0 L394.9 175.7 L394.2 175.8 M393.5 181.3 L392.8 181.3 L392.1 181.9 L391.5 182.1 L390.8 182.8 L390.2 182.8 L389.6 182.4 L388.9 182.7 L388.3 182.6 L387.7 183.7 L387.2 183.8 L386.6 184.6 M386.0 183.7 L385.5 183.7 L384.9 184.8 L384.4 184.9 L383.9 185.6 L383.4 185.8 L382.9 185.3 L382.4 185.5 L382.0 185.8 L381.5 186.4 L381.1 187.1 L380.7 187.2 L380.2 186.9 L379.8 186.9 L379.4 187.6 L379.1 188.6 L378.7 188.5 L378.3 189.4 M378.0 190.7 L377.6 191.5 L377.3 192.0 L377.0 191.9 L376.7 192.9 L376.4 193.4 L376.2 195.1 L375.9 195.3 L375.6 196.2 L375.4 196.3 L375.2 197.0 L375.0 198.0 L374.8 199.0 L374.6 199.3 L374.4 199.8 L374.2 200.5 L374.1 200.6 L373.9 201.4 L373.8 198.8 L373.7 199.1 L373.6 199.3 L373.5 200.4 L373.4 200.5 L373.4 201.5 L373.3 206.3 L373.3 206.5 L373.2 207.5 L373.2 207.8 L373.2 208.6 L373.2 209.2 L373.2 206.7 L373.3 207.1 L373.3 208.3 L373.4 208.7 L373.4 209.2 L373.5 209.8 M373.6 214.6 L373.7 215.5 L373.8 215.9 L374.0 216.5 L374.1 216.9 L374.3 217.5 M374.4 217.3 L374.6 217.9 L374.8 218.5 L375.0 218.6 L375.2 219.4 L375.4 219.7 M375.7 218.5 L375.9 219.5 L376.2 220.0 L376.5 220.3 L376.7 220.9 L377.0 222.0 L377.4 220.5 L377.7 220.5 L378.0 221.8 L378.4 222.2 L378.7 222.7 L379.1 223.3 L379.5 228.2 L379.9 228.9 L380.3 229.1 L380.7 229.5 L381.1 230.7 L381.6 231.3 M382.0 231.8 L382.5 233.1 L383.0 233.4 L383.5 234.1 L384.0 235.2 L384.5 235.2 M385.0 236.0 L385.5 236.8 L386.1 237.0 L386.6 238.2 L387.2 239.0 L387.8 239.6 L388.4 241.2 L389.0 241.8 L389.6 242.7 L390.2 243.3 L390.9 243.9 L391.5 244.6 M392.2 240.8 L392.9 241.9 L393.6 242.5 L394.3 242.8 L395.0 244.0 L395.7 243.9 M396.4 243.8 L397.2 245.2 L397.9 245.4 M377.3 207.1 L402.9 198.9 L403.9 202.9 M375.3 211.1 L369.3 219.1 L371.3 224.1 M391.8 209.1 L416.1 201.4 L417.1 205.4 M389.8 213.1 L383.8 221.1 L385.8 226.1 M406.7 212.7 L432.2 204.5 L433.2 208.5 M404.7 216.7 L398.7 224.7 L400.7 229.7 M416.9 216.3 L435.5 210.4 L436.5 214.4 M414.9 220.3 L408.9 228.3 L410.9 233.3 M430.0 224.8 L453.8 217.2 L454.8 221.2 M428.0 228.8 L422.0 236.8 L424.0 241.8 M440.4 230.1 L458.8 224.2 L459.8 228.2 M438.4 234.1 L432.4 242.1 L434.4 247.1 M458.3 229.3 L486.0 220.4 L487.0 224.4 M456.3 233.3 L450.3 241.3 L452.3 246.3 M466.9 235.1 L490.5 227.5 L491.5 231.5 M464.9 239.1 L458.9 247.1 L460.9 252.1 M483.5 240.6 L507.1 233.1 L508.1 237.1 M481.5 244.6 L475.5 252.6 L477.5 257.6 M634.5 253.8 L639.2 257.4 L644.1 250.8 M642.7 252.8 L650.0 249.2 L656.1 251.8 M663.9 258.2 L669.5 256.7 L676.2 256.4 M649.5 256.1 L656.7 254.4 L661.2 256.5 M652.2 261.7 L657.8 258.4 L661.1 258.9 M622.3 243.4 L629.3 242.1 L637.6 241.2 M625.8 244.4 L629.6 245.8 L638.4 242.4 M657.4 263.7 L663.0 264.6 L670.6 263.3 M617.1 245.4 L625.8 244.4 L630.2 242.1 M655.3 266.9 L660.6 265.9 L667.4 264.9 M623.8 242.7 L630.9 242.8 L639.4 246.4 M661.0 270.2 L669.0 266.4 L670.0 274.0 M660.9 263.6 L667.6 263.1 L672.3 260.8 M642.7 251.3 L646.4 254.3 L655.3 254.3 M628.5 253.1 L633.1 255.7 L638.1 254.3 M643.1 252.4 L646.6 252.3 L655.3 255.0 M623.4 243.7 L628.2 246.1 L633.2 244.8 M613.8 238.8 L621.0 238.8 L622.7 238.6 M664.7 260.2 L671.0 259.6 L676.7 256.6 M661.4 263.0 L666.5 261.3 L670.9 266.5 M659.1 258.3 L665.7 258.7 L668.7 254.6 M653.2 252.2 L659.6 248.3 L661.4 249.5 M648.6 259.8 L657.5 261.1 L660.8 255.9 M665.7 262.5 L673.8 258.8 L680.3 262.3 M624.1 248.4 L627.6 249.0 L633.9 250.0 M621.7 253.3 L628.4 255.0 L637.3 251.7 M655.0 237.0 L660.6 250.6 L666.2 242.2 L671.8 255.8 L677.4 247.4 L683.0 261.0 L688.6 252.6 L694.2 266.2 L699.8 257.8 L705.4 271.4 L711.0 263.0 L716.6 276.6 L722.2 268.2 L727.8 281.8 L733.4 273.4 L739.0 287.0 L744.6 278.6 M425.1 140.9 L429.6 141.0 L433.7 140.6 L437.6 140.6 L442.4 140.4 M426.9 172.3 L432.4 171.8 L437.7 171.0 L442.7 170.7 L448.1 170.0 M425.3 198.6 L431.4 198.5 L438.2 198.3 L444.9 197.8 L451.8 196.7 M478.2 116.1 L480.9 117.6 L484.0 119.4 L487.0 120.5 L490.0 121.9 M436.2 263.7 L440.2 263.1 L444.2 261.5 L447.9 259.9 L451.7 259.0 M440.3 296.3 L442.7 295.4 L446.2 294.5 L449.3 293.5 L451.9 293.0" stroke="#fff" stroke-width="1.35" fill="none" stroke-linejoin="round"/>
<path d="M760.0 469.3h1.5 M766.0 469.1h1.5 M772.0 469.0h1.5 M778.0 468.8h1.5 M784.0 468.7h1.5 M790.0 468.5h1.5 M796.0 468.4h1.5 M802.0 468.2h1.5 M808.0 468.1h1.5 M814.0 467.9h1.5 M820.0 467.7h1.5 M826.0 467.6h1.5 M832.0 467.4h1.5 M838.0 467.3h1.5 M844.0 467.1h1.5 M850.0 467.0h1.5 M856.0 466.8h1.5 M862.0 466.6h1.5 M868.0 466.5h1.5 M874.0 466.3h1.5 M880.0 466.2h1.5 M886.0 466.0h1.5 M892.0 465.9h1.5 M898.0 465.7h1.5 M904.0 465.5h1.5 M910.0 465.4h1.5 M916.0 465.2h1.5 M922.0 465.1h1.5 M928.0 464.9h1.5 M762.0 465.3h1.5 M768.0 465.0h1.5 M774.0 464.6h1.5 M780.0 464.2h1.5 M786.0 463.8h1.5 M792.0 463.5h1.5 M798.0 463.1h1.5 M804.0 462.7h1.5 M810.0 462.3h1.5 M764.0 461.2h1.5 M770.0 460.6h1.5 M776.0 460.0h1.5 M782.0 459.4h1.5 M788.0 458.8h1.5 M794.0 458.2h1.5 M800.0 457.6h1.5 M806.0 457.0h1.5 M812.0 456.4h1.5 M818.0 455.8h1.5 M824.0 455.2h1.5 M830.0 454.6h1.5 M836.0 454.0h1.5 M842.0 453.4h1.5 M848.0 452.8h1.5 M854.0 452.2h1.5 M860.0 451.6h1.5 M866.0 451.0h1.5 M872.0 450.4h1.5 M878.0 449.8h1.5 M884.0 449.2h1.5 M890.0 448.6h1.5 M896.0 448.0h1.5 M902.0 447.4h1.5 M908.0 446.8h1.5 M914.0 446.1h1.5 M920.0 445.5h1.5 M926.0 444.9h1.5 M764.0 457.2h1.5 M770.0 456.4h1.5 M776.0 455.5h1.5 M782.0 454.7h1.5 M788.0 453.9h1.5 M794.0 453.1h1.5 M800.0 452.2h1.5 M806.0 451.4h1.5 M812.0 450.6h1.5 M818.0 449.7h1.5 M824.0 448.9h1.5 M830.0 448.1h1.5 M836.0 447.3h1.5 M842.0 446.4h1.5 M848.0 445.6h1.5 M854.0 444.8h1.5 M860.0 443.9h1.5 M866.0 443.1h1.5 M872.0 442.3h1.5 M878.0 441.5h1.5 M884.0 440.6h1.5 M890.0 439.8h1.5 M896.0 439.0h1.5 M902.0 438.1h1.5 M908.0 437.3h1.5 M914.0 436.5h1.5 M920.0 435.7h1.5 M926.0 434.8h1.5 M766.0 452.7h1.5 M772.0 451.7h1.5 M778.0 450.6h1.5 M768.0 448.1h1.5 M774.0 446.8h1.5 M780.0 445.6h1.5 M786.0 444.3h1.5 M792.0 443.0h1.5 M798.0 441.7h1.5 M804.0 440.4h1.5 M810.0 439.1h1.5 M816.0 437.9h1.5 M822.0 436.6h1.5 M828.0 435.3h1.5 M834.0 434.0h1.5 M840.0 432.7h1.5 M846.0 431.4h1.5 M852.0 430.1h1.5 M858.0 428.9h1.5 M864.0 427.6h1.5 M870.0 426.3h1.5 M876.0 425.0h1.5 M882.0 423.7h1.5 M888.0 422.4h1.5 M894.0 421.1h1.5 M900.0 419.8h1.5 M906.0 418.6h1.5 M912.0 417.3h1.5 M918.0 416.0h1.5 M924.0 414.7h1.5 M930.0 413.4h1.5 M770.0 443.3h1.5 M776.0 441.7h1.5 M782.0 440.2h1.5 M788.0 438.7h1.5 M794.0 437.2h1.5 M800.0 435.7h1.5 M806.0 434.2h1.5 M812.0 432.6h1.5 M818.0 431.1h1.5 M824.0 429.6h1.5 M830.0 428.1h1.5 M836.0 426.6h1.5 M842.0 425.0h1.5 M848.0 423.5h1.5 M854.0 422.0h1.5 M860.0 420.5h1.5 M866.0 419.0h1.5 M872.0 417.4h1.5 M878.0 415.9h1.5 M884.0 414.4h1.5 M890.0 412.9h1.5 M896.0 411.4h1.5 M902.0 409.8h1.5 M908.0 408.3h1.5 M914.0 406.8h1.5 M920.0 405.3h1.5 M926.0 403.7h1.5 M758.0 438.1h1.5 M764.0 436.1h1.5 M770.0 434.1h1.5 M776.0 432.1h1.5 M782.0 430.1h1.5 M788.0 428.1h1.5 M794.0 426.2h1.5 M800.0 424.2h1.5 M806.0 422.2h1.5 M812.0 420.2h1.5 M818.0 418.2h1.5 M824.0 416.1h1.5 M830.0 414.1h1.5 M836.0 412.1h1.5 M842.0 410.1h1.5 M848.0 408.1h1.5 M854.0 406.1h1.5 M860.0 404.1h1.5 M866.0 402.1h1.5 M872.0 400.1h1.5 M878.0 398.1h1.5 M884.0 396.1h1.5 M890.0 394.1h1.5 M896.0 392.1h1.5 M902.0 390.1h1.5 M908.0 388.1h1.5 M914.0 386.1h1.5 M920.0 384.1h1.5 M926.0 382.1h1.5 M752.0 436.1h1.5 M758.0 433.9h1.5 M764.0 431.6h1.5 M770.0 429.4h1.5 M776.0 427.2h1.5 M782.0 424.9h1.5 M788.0 422.7h1.5 M794.0 420.4h1.5 M800.0 418.2h1.5 M806.0 415.9h1.5 M812.0 413.7h1.5 M818.0 411.4h1.5 M824.0 409.2h1.5 M830.0 406.9h1.5 M836.0 404.7h1.5 M842.0 402.4h1.5 M848.0 400.2h1.5 M854.0 397.9h1.5 M860.0 395.6h1.5 M866.0 393.4h1.5 M872.0 391.1h1.5 M878.0 388.9h1.5 M884.0 386.6h1.5 M890.0 384.4h1.5 M896.0 382.1h1.5 M902.0 379.9h1.5 M908.0 377.6h1.5 M914.0 375.3h1.5 M746.0 430.5h1.5 M752.0 427.8h1.5 M758.0 425.0h1.5 M764.0 422.3h1.5 M770.0 419.5h1.5 M776.0 416.8h1.5 M782.0 414.0h1.5 M788.0 411.2h1.5 M794.0 408.5h1.5 M800.0 405.7h1.5 M806.0 402.9h1.5 M812.0 400.1h1.5 M818.0 397.4h1.5 M824.0 394.6h1.5 M830.0 391.8h1.5 M836.0 389.0h1.5 M842.0 386.3h1.5 M848.0 383.5h1.5 M854.0 380.7h1.5 M860.0 377.9h1.5 M866.0 375.2h1.5 M872.0 372.4h1.5 M878.0 369.6h1.5 M746.0 426.4h1.5 M752.0 423.4h1.5 M758.0 420.4h1.5 M764.0 417.4h1.5 M770.0 414.3h1.5 M776.0 411.3h1.5 M782.0 408.3h1.5 M788.0 405.2h1.5 M794.0 402.2h1.5 M800.0 399.1h1.5 M806.0 396.1h1.5 M812.0 393.0h1.5 M818.0 390.0h1.5 M824.0 386.9h1.5 M830.0 383.9h1.5 M836.0 380.8h1.5 M842.0 377.8h1.5 M848.0 374.7h1.5 M854.0 371.7h1.5 M860.0 368.6h1.5 M866.0 365.6h1.5 M746.0 417.7h1.5 M752.0 414.1h1.5 M758.0 410.5h1.5 M764.0 406.9h1.5 M770.0 403.3h1.5 M776.0 399.7h1.5 M782.0 396.1h1.5 M788.0 392.5h1.5 M794.0 388.8h1.5 M800.0 385.2h1.5 M806.0 381.6h1.5 M812.0 377.9h1.5 M818.0 374.3h1.5 M824.0 370.7h1.5 M830.0 367.0h1.5 M836.0 363.4h1.5 M842.0 359.8h1.5 M746.0 413.1h1.5 M752.0 409.2h1.5 M758.0 405.3h1.5 M764.0 401.3h1.5 M770.0 397.4h1.5 M776.0 393.5h1.5 M782.0 389.6h1.5 M788.0 385.6h1.5 M794.0 381.7h1.5 M800.0 377.8h1.5 M806.0 373.8h1.5 M812.0 369.9h1.5 M818.0 365.9h1.5 M824.0 362.0h1.5 M830.0 358.1h1.5 M744.0 404.6h1.5 M750.0 400.0h1.5 M756.0 395.4h1.5 M762.0 390.8h1.5 M768.0 386.3h1.5 M774.0 381.7h1.5 M780.0 377.1h1.5 M786.0 372.5h1.5 M792.0 367.9h1.5 M798.0 363.3h1.5 M804.0 358.6h1.5 M810.0 354.0h1.5 M744.0 399.2h1.5 M750.0 394.3h1.5 M756.0 389.4h1.5 M762.0 384.4h1.5 M768.0 379.5h1.5 M774.0 374.5h1.5 M780.0 369.6h1.5 M786.0 364.6h1.5 M792.0 359.6h1.5 M798.0 354.7h1.5 M804.0 349.7h1.5 M744.0 387.5h1.5 M748.0 383.7h1.5 M752.0 379.9h1.5 M756.0 376.0h1.5 M760.0 372.2h1.5 M764.0 368.4h1.5 M768.0 364.6h1.5 M772.0 360.7h1.5 M776.0 356.9h1.5 M780.0 353.0h1.5 M784.0 349.2h1.5 M788.0 345.3h1.5 M743.0 382.0h1.5 M747.0 377.9h1.5 M751.0 373.8h1.5 M755.0 369.7h1.5 M759.0 365.6h1.5 M763.0 361.4h1.5 M767.0 357.3h1.5 M771.0 353.2h1.5 M775.0 349.0h1.5 M779.0 344.9h1.5 M783.0 340.8h1.5 M743.0 367.5h1.5 M747.0 362.7h1.5 M751.0 357.9h1.5 M755.0 353.1h1.5 M759.0 348.4h1.5 M763.0 343.6h1.5 M767.0 338.8h1.5 M743.0 359.2h1.5 M747.0 354.0h1.5 M751.0 348.9h1.5 M755.0 343.7h1.5 M759.0 338.6h1.5 M763.0 333.4h1.5 M580.0 350.5h1.5 M577.0 346.0h1.5 M743.0 339.9h1.5 M746.0 335.4h1.5 M749.0 330.9h1.5 M752.0 326.4h1.5 M588.0 353.0h1.5 M585.0 348.2h1.5 M582.0 343.3h1.5 M579.0 338.4h1.5 M743.0 328.6h1.5 M746.0 323.7h1.5 M749.0 318.7h1.5 M589.0 332.1h1.5 M586.0 326.3h1.5 M583.0 320.5h1.5 M580.0 314.6h1.5 M577.0 308.8h1.5 M743.0 301.0h1.5 M589.0 318.2h1.5 M586.0 311.8h1.5 M583.0 305.4h1.5 M731.0 475.6h1.5 M736.3 475.9h1.5 M741.6 476.2h1.5 M746.9 476.4h1.5 M752.2 476.7h1.5 M757.5 477.0h1.5 M762.8 477.2h1.5 M768.1 477.5h1.5 M773.4 477.8h1.5 M778.7 478.0h1.5 M784.0 478.3h1.5 M789.3 478.6h1.5 M794.6 478.8h1.5 M799.9 479.1h1.5 M805.2 479.4h1.5 M810.5 479.6h1.5 M815.8 479.9h1.5 M821.1 480.2h1.5 M826.4 480.4h1.5 M831.7 480.7h1.5 M837.0 480.9h1.5 M842.3 481.2h1.5 M847.6 481.5h1.5 M729.0 479.1h1.5 M734.3 479.6h1.5 M739.6 480.2h1.5 M744.9 480.7h1.5 M750.2 481.2h1.5 M755.5 481.8h1.5 M760.8 482.3h1.5 M766.1 482.8h1.5 M771.4 483.3h1.5 M776.7 483.9h1.5 M782.0 484.4h1.5 M787.3 484.9h1.5 M792.6 485.5h1.5 M797.9 486.0h1.5 M803.2 486.5h1.5 M808.5 487.1h1.5 M813.8 487.6h1.5 M819.1 488.1h1.5 M824.4 488.6h1.5 M829.7 489.2h1.5 M835.0 489.7h1.5 M840.3 490.2h1.5 M845.6 490.8h1.5 M727.0 482.4h1.5 M732.3 483.1h1.5 M737.6 483.9h1.5 M742.9 484.7h1.5 M748.2 485.5h1.5 M753.5 486.3h1.5 M758.8 487.1h1.5 M764.1 487.9h1.5 M769.4 488.7h1.5 M774.7 489.5h1.5 M780.0 490.3h1.5 M785.3 491.1h1.5 M790.6 491.9h1.5 M795.9 492.7h1.5 M801.2 493.5h1.5 M806.5 494.3h1.5 M811.8 495.1h1.5 M817.1 495.9h1.5 M822.4 496.7h1.5 M827.7 497.5h1.5 M833.0 498.2h1.5 M838.3 499.0h1.5 M843.6 499.8h1.5 M848.9 500.6h1.5 M725.0 485.4h1.5 M730.3 486.5h1.5 M735.6 487.5h1.5 M740.9 488.6h1.5 M746.2 489.6h1.5 M751.5 490.7h1.5 M756.8 491.8h1.5 M762.1 492.8h1.5 M767.4 493.9h1.5 M772.7 494.9h1.5 M778.0 496.0h1.5 M783.3 497.1h1.5 M788.6 498.1h1.5 M793.9 499.2h1.5 M799.2 500.2h1.5 M804.5 501.3h1.5 M809.8 502.4h1.5 M815.1 503.4h1.5 M820.4 504.5h1.5 M825.7 505.5h1.5 M831.0 506.6h1.5 M836.3 507.7h1.5 M841.6 508.7h1.5 M846.9 509.8h1.5 M723.0 488.2h1.5 M728.3 489.6h1.5 M733.6 490.9h1.5 M738.9 492.2h1.5 M744.2 493.6h1.5 M749.5 494.9h1.5 M754.8 496.2h1.5 M760.1 497.5h1.5 M765.4 498.9h1.5 M770.7 500.2h1.5 M776.0 501.5h1.5 M781.3 502.8h1.5 M786.6 504.1h1.5 M791.9 505.5h1.5 M797.2 506.8h1.5 M802.5 508.1h1.5 M807.8 509.4h1.5 M813.1 510.8h1.5 M818.4 512.1h1.5 M823.7 513.4h1.5 M829.0 514.8h1.5 M834.3 516.1h1.5 M839.6 517.4h1.5 M844.9 518.7h1.5 M587.6 347.2h1.4 M584.8 342.5h1.4 M582.1 337.8h1.4 M579.3 333.0h1.4 M576.6 328.3h1.4 M573.8 323.6h1.4 M571.1 318.9h1.4 M568.3 314.1h1.4 M565.6 309.4h1.4 M581.6 346.9h1.4 M578.8 342.1h1.4 M576.0 337.4h1.4 M573.2 332.7h1.4 M570.4 327.9h1.4 M567.7 323.2h1.4 M564.9 318.5h1.4 M575.1 324.6h1.4 M572.3 319.9h1.4 M566.7 310.4h1.4 M567.5 326.0h1.4 M564.7 321.2h1.4 M561.8 316.5h1.4 M559.0 311.8h1.4 M559.2 326.1h1.4 M556.3 321.3h1.4 M552.8 329.5h1.4 M549.9 324.8h1.4 M547.0 320.0h1.4 M544.1 315.3h1.4 M545.8 331.7h1.4 M542.8 327.0h1.4 M539.9 322.2h1.4 M536.9 317.5h1.4 M538.7 333.9h1.4 M535.7 329.2h1.4 M532.7 324.5h1.4 M529.8 319.7h1.4 M526.8 315.0h1.4 M523.8 310.3h1.4 M531.6 336.1h1.4 M528.6 331.4h1.4 M522.6 321.9h1.4 M519.5 317.2h1.4 M516.5 312.4h1.4 M513.5 307.7h1.4 M525.1 339.2h1.4 M522.1 334.5h1.4 M519.0 329.7h1.4 M516.0 325.0h1.4 M512.9 320.3h1.4 M509.9 315.5h1.4 M506.8 310.8h1.4 M503.8 306.1h1.4 M513.9 335.1h1.4 M507.7 325.6h1.4 M504.7 320.9h1.4 M501.6 316.1h1.4 M498.5 311.4h1.4 M495.4 306.7h1.4 M492.3 301.9h1.4 M508.5 339.9h1.4 M505.4 335.2h1.4 M502.3 330.5h1.4 M499.2 325.7h1.4 M493.0 316.3h1.4 M489.9 311.5h1.4 M486.8 306.8h1.4 M483.6 302.1h1.4 M480.5 297.3h1.4 M501.2 341.7h1.4 M498.0 337.0h1.4 M494.9 332.3h1.4 M491.8 327.5h1.4 M488.6 322.8h1.4 M485.5 318.1h1.4 M482.3 313.3h1.4 M476.0 303.9h1.4 M472.9 299.1h1.4 M469.7 294.4h1.4 M466.6 289.7h1.4 M496.1 346.9h1.4 M493.0 342.2h1.4 M489.8 337.5h1.4 M486.6 332.7h1.4 M483.4 328.0h1.4 M480.2 323.3h1.4 M477.1 318.5h1.4 M470.7 309.1h1.4 M467.5 304.4h1.4 M464.3 299.6h1.4 M461.2 294.9h1.4 M458.0 290.2h1.4 M454.8 285.4h1.4 M486.6 345.5h1.4 M483.4 340.8h1.4 M480.2 336.1h1.4 M477.0 331.4h1.4 M473.8 326.6h1.4 M470.6 321.9h1.4 M464.2 312.4h1.4 M460.9 307.7h1.4 M457.7 303.0h1.4 M454.5 298.2h1.4 M451.3 293.5h1.4 M448.1 288.8h1.4 M444.9 284.1h1.4 M481.0 349.9h1.4 M474.5 340.4h1.4 M471.3 335.7h1.4 M468.0 330.9h1.4 M464.8 326.2h1.4 M461.5 321.5h1.4 M458.3 316.7h1.4 M455.0 312.0h1.4 M451.8 307.3h1.4 M448.6 302.6h1.4 M445.3 297.8h1.4 M442.1 293.1h1.4 M438.8 288.4h1.4 M435.6 283.6h1.4 M432.3 278.9h1.4 M470.9 347.6h1.4 M467.6 342.9h1.4 M464.3 338.2h1.4 M461.0 333.4h1.4 M457.8 328.7h1.4 M454.5 324.0h1.4 M451.2 319.3h1.4 M447.9 314.5h1.4 M444.6 309.8h1.4 M441.4 305.1h1.4 M438.1 300.3h1.4 M434.8 295.6h1.4 M431.5 290.9h1.4 M428.3 286.1h1.4 M425.0 281.4h1.4 M421.7 276.7h1.4 M467.2 354.7h1.4 M463.9 350.0h1.4 M460.6 345.3h1.4 M457.3 340.5h1.4 M454.0 335.8h1.4 M450.6 331.1h1.4 M447.3 326.3h1.4 M444.0 321.6h1.4 M440.7 316.9h1.4 M437.4 312.2h1.4 M434.1 307.4h1.4 M430.8 302.7h1.4 M427.5 298.0h1.4 M424.2 293.2h1.4 M420.8 288.5h1.4 M417.5 283.8h1.4 M410.9 274.3h1.4 M407.6 269.6h1.4 M460.1 356.8h1.4 M456.7 352.1h1.4 M446.7 337.9h1.4 M443.4 333.2h1.4 M440.0 328.5h1.4 M436.7 323.7h1.4 M433.3 319.0h1.4 M430.0 314.3h1.4 M426.6 309.5h1.4 M423.3 304.8h1.4 M419.9 300.1h1.4 M416.6 295.4h1.4 M413.3 290.6h1.4 M409.9 285.9h1.4 M406.6 281.2h1.4 M403.2 276.4h1.4 M399.9 271.7h1.4 M396.5 267.0h1.4 M453.1 359.2h1.4 M449.7 354.5h1.4 M446.4 349.7h1.4 M443.0 345.0h1.4 M439.6 340.3h1.4 M436.2 335.5h1.4 M432.9 330.8h1.4 M429.5 326.1h1.4 M419.4 311.9h1.4 M412.6 302.4h1.4 M409.2 297.7h1.4 M405.8 293.0h1.4 M399.1 283.5h1.4 M395.7 278.8h1.4 M392.3 274.0h1.4 M389.0 269.3h1.4 M444.3 358.9h1.4 M440.9 354.2h1.4 M437.5 349.5h1.4 M434.1 344.7h1.4 M430.6 340.0h1.4 M427.2 335.3h1.4 M423.8 330.5h1.4 M420.4 325.8h1.4 M413.6 316.3h1.4 M410.2 311.6h1.4 M406.8 306.9h1.4 M403.4 302.2h1.4 M400.0 297.4h1.4 M396.5 292.7h1.4 M393.1 288.0h1.4 M389.7 283.2h1.4 M382.9 273.8h1.4 M379.5 269.0h1.4 M376.1 264.3h1.4 M438.7 363.2h1.4 M435.3 358.4h1.4 M431.8 353.7h1.4 M428.4 349.0h1.4 M424.9 344.2h1.4 M421.5 339.5h1.4 M418.1 334.8h1.4 M414.6 330.1h1.4 M411.2 325.3h1.4 M407.7 320.6h1.4 M404.3 315.9h1.4 M397.4 306.4h1.4 M394.0 301.7h1.4 M390.5 296.9h1.4 M387.1 292.2h1.4 M383.6 287.5h1.4 M380.2 282.8h1.4 M376.7 278.0h1.4 M373.3 273.3h1.4 M430.7 364.1h1.4 M427.3 359.4h1.4 M423.8 354.6h1.4 M420.3 349.9h1.4 M416.8 345.2h1.4 M413.3 340.4h1.4 M409.9 335.7h1.4 M406.4 331.0h1.4 M402.9 326.2h1.4 M399.4 321.5h1.4 M396.0 316.8h1.4 M392.5 312.1h1.4 M389.0 307.3h1.4 M385.5 302.6h1.4 M382.1 297.9h1.4 M378.6 293.1h1.4 M375.1 288.4h1.4 M421.9 363.9h1.4 M418.4 359.2h1.4 M414.9 354.4h1.4 M411.4 349.7h1.4 M404.3 340.2h1.4 M400.8 335.5h1.4 M397.3 330.8h1.4 M393.8 326.0h1.4 M390.3 321.3h1.4 M386.8 316.6h1.4 M383.3 311.9h1.4 M379.8 307.1h1.4 M376.3 302.4h1.4 M400.5 349.9h1.2 M410.2 353.0h1.2 M418.4 356.4h1.2 M428.2 360.1h1.2 M437.0 364.0h1.2 M447.6 367.4h1.2 M456.1 369.3h1.2 M467.2 373.4h1.2 M475.5 376.9h1.2 M485.1 381.2h1.2 M494.5 384.2h1.2 M504.5 387.9h1.2 M514.1 390.9h1.2 M523.7 395.8h1.2 M532.4 398.1h1.2 M543.1 401.6h1.2 M561.6 410.7h1.2 M570.6 414.3h1.2 M580.4 418.1h1.2 M589.3 422.7h1.2 M407.5 338.0h1.2 M416.2 341.4h1.2 M425.7 346.0h1.2 M436.4 349.5h1.2 M445.8 352.9h1.2 M454.6 354.8h1.2 M463.4 358.3h1.2 M473.1 362.9h1.2 M492.5 369.7h1.2 M502.4 372.8h1.2 M511.7 375.9h1.2 M521.5 379.3h1.2 M530.6 384.4h1.2 M540.0 387.7h1.2 M548.6 391.5h1.2 M559.2 394.8h1.2 M568.0 400.0h1.2 M578.8 403.6h1.2 M597.3 410.2h1.2 M414.7 328.8h1.2 M452.1 341.6h1.2 M461.3 344.5h1.2 M481.2 351.8h1.2 M490.0 355.0h1.2 M508.4 361.9h1.2 M518.0 366.3h1.2 M537.0 373.8h1.2 M546.9 377.6h1.2 M556.9 379.7h1.2 M575.0 389.1h1.2 M584.4 392.5h1.2 M420.1 316.9h1.2 M431.3 319.5h1.2 M440.6 323.1h1.2 M450.5 327.0h1.2 M468.1 333.3h1.2 M478.3 337.7h1.2 M486.9 341.4h1.2 M497.0 344.6h1.2 M506.7 348.0h1.2 M516.3 350.1h1.2 M525.0 354.8h1.2 M534.9 358.4h1.2 M545.3 361.5h1.2 M564.3 368.8h1.2 M583.5 376.8h1.2 M591.5 381.1h1.2 M446.4 313.3h1.2 M455.6 315.0h1.2 M465.3 319.5h1.2 M475.0 322.5h1.2 M485.7 326.2h1.2 M504.6 332.9h1.2 M513.5 336.9h1.2 M522.6 340.0h1.2 M542.4 346.7h1.2 M551.7 351.1h1.2 M570.5 359.1h1.2 M579.2 361.8h1.2 M589.2 366.2h1.2 M600.0 370.5h1.2 M445.0 297.6h1.2 M453.0 300.9h1.2 M462.9 304.7h1.2 M473.3 307.9h1.2 M482.9 311.2h1.2 M501.1 317.9h1.2 M510.3 322.8h1.2 M520.6 324.5h1.2 M529.8 330.0h1.2 M549.5 336.9h1.2 M557.9 339.5h1.2 M568.1 342.9h1.2 M576.8 348.3h1.2 M586.6 352.3h1.2 M442.5 283.1h1.2 M451.0 287.7h1.2 M461.4 289.9h1.2 M470.8 294.2h1.2 M480.7 297.9h1.2 M499.3 304.0h1.2 M508.5 306.4h1.2 M517.8 310.6h1.2 M526.9 314.0h1.2 M545.8 321.7h1.2 M556.6 325.1h1.2 M566.4 329.2h1.2 M574.7 331.9h1.2 M584.3 337.3h1.2 M594.5 340.5h1.2 M449.1 272.1h1.2 M458.8 277.0h1.2 M468.0 280.1h1.2 M478.3 283.7h1.2 M486.4 285.4h1.2 M506.1 293.8h1.2 M515.8 295.4h1.2 M533.7 303.0h1.2 M544.1 306.1h1.2 M553.9 310.4h1.2 M571.6 317.3h1.2 M582.1 322.6h1.2 M590.7 325.6h1.2 M455.0 261.4h1.2 M465.2 265.7h1.2 M502.6 279.1h1.2 M513.6 281.2h1.2 M522.5 285.6h1.2 M551.3 295.9h1.2 M560.4 298.9h1.2 M579.2 307.7h1.2 M589.8 311.5h1.2 M598.4 314.0h1.2 M475.8 262.3h1.2 M394.0 248.9h1.2 M384.1 207.1h1.2 M517.2 237.0h1.2 M394.6 245.3h1.2 M383.7 271.1h1.2 M408.1 212.6h1.2 M467.4 318.8h1.2 M377.0 287.3h1.2 M459.4 253.0h1.2 M436.1 181.7h1.2 M426.0 258.5h1.2 M423.6 329.1h1.2 M424.3 306.8h1.2 M492.5 299.2h1.2 M446.3 254.9h1.2 M497.3 197.6h1.2 M407.6 181.9h1.2 M446.3 248.0h1.2 M513.6 319.6h1.2 M433.9 254.4h1.2 M390.2 293.0h1.2 M450.3 205.2h1.2 M502.1 186.4h1.2 M402.9 251.6h1.2 M519.6 200.8h1.2 M413.6 298.7h1.2 M423.8 319.4h1.2 M377.7 215.7h1.2 M419.9 307.2h1.2 M389.8 281.1h1.2 M503.6 326.1h1.2 M491.9 187.6h1.2 M445.0 212.7h1.2 M392.7 216.5h1.2 M481.6 266.3h1.2 M393.9 222.8h1.2 M384.6 318.9h1.2 M484.4 250.9h1.2 M514.4 326.7h1.2 M405.0 218.1h1.2 M402.7 274.2h1.2 M461.3 257.8h1.2 M487.2 259.4h1.2 M420.6 280.3h1.2 M512.6 187.5h1.2 M445.5 200.9h1.2 M483.3 244.7h1.2 M496.6 280.4h1.2 M514.1 266.9h1.2 M461.4 326.2h1.2 M491.4 230.7h1.2 M390.0 318.2h1.2 M384.2 318.5h1.2 M510.3 279.2h1.2 M512.6 271.1h1.2 M483.1 269.4h1.2 M407.2 191.8h1.2 M482.7 247.7h1.2 M393.1 263.9h1.2 M482 72h2.5 M492 76h2.5 M487 85h2.5 M510 80h2.5 M530 86h2.5 M510 112h2.5 M548 120h2.5 M516 148h2.5 M927 284h2.5 M922 316h2.5 M377 257h2.5" stroke="#e8e8e8" stroke-width="1.3" fill="none"/>
<path d="M868 388L880 381 M852 470L860 458 M846 495L858 487 M882 360L894 353 M915 372L922 368" stroke="#fff" stroke-width="1.6" fill="none"/>
</svg>
<div class="a" style="left:940px;top:58px;width:16px;height:905px;background:#dcdcdc;border:1px solid #b0b0b0;border-radius:3px"></div>
<svg class="a" style="left:944px;top:504px" width="8" height="12"><path d="M6 1.5 L1.5 6 L6 10.5 Z" fill="#444"/></svg>
<svg class="a" style="left:469px;top:964px" width="18" height="2"><rect x="0" y="0" width="1" height="1" fill="#bdbdbd"/><rect x="3" y="0" width="1" height="1" fill="#bdbdbd"/><rect x="6" y="0" width="1" height="1" fill="#bdbdbd"/><rect x="9" y="0" width="1" height="1" fill="#bdbdbd"/><rect x="12" y="0" width="1" height="1" fill="#bdbdbd"/><rect x="15" y="0" width="1" height="1" fill="#bdbdbd"/></svg>
<div class="hdr" style="left:0;top:968px;width:956px"></div>
<div class="t" style="left:24.5px;top:971.5px;">Time</div>
<svg class="a" style="left:2px;top:972px" width="17" height="17" ><circle cx="8" cy="8" r="7" fill="#fff" stroke="#6a6a6a" stroke-width="1.7"/><path d="M7.5 4 V8.6 H11.8" fill="none" stroke="#000" stroke-width="1.4"/></svg>
<div class="a" style="left:936px;top:970px;width:18px;height:17px;border:1px solid #8c8c8c;border-radius:3px;background:linear-gradient(#fff,#efefef)"></div>
<svg class="a" style="left:939px;top:972px" width="12" height="12" ><defs><linearGradient id="cg" x1="0" y1="0" x2="0" y2="1"><stop offset="0" stop-color="#e85050"/><stop offset="0.5" stop-color="#d41818"/><stop offset="1" stop-color="#b80000"/></linearGradient></defs><path d="M4 1 H8.2 L11.2 4 V8.2 L8.2 11.2 H4 L1 8.2 V4 Z" fill="url(#cg)" stroke="#c01010" stroke-width="0.6"/><path d="M4.3 4.3 L7.9 7.9 M7.9 4.3 L4.3 7.9" stroke="#f4e6e6" stroke-width="1.5" stroke-linecap="round"/></svg>
<div class="t" style="left:9.5px;top:1002.5px;">ROS Time:</div>
<div class="inp" style="left:78px;top:998px;width:112px;height:23px;line-height:22px;padding-left:3px">1693996768.53</div>
<div class="t" style="left:196.5px;top:1002.5px;">ROS Elapsed:</div>
<div class="inp" style="left:283px;top:998px;width:121px;height:23px;line-height:22px;padding-left:3px">10.64</div>
<div class="t" style="left:410.5px;top:1002.5px;">Wall Time:</div>
<div class="inp" style="left:478px;top:998px;width:122px;height:23px;line-height:22px;padding-left:3px">1694008846.97</div>
<div class="t" style="left:606px;top:1002.5px;">Wall Elapsed:</div>
<div class="inp" style="left:693px;top:998px;width:121px;height:23px;line-height:22px;padding-left:3px">106.44</div>
<div class="cb" style="left:840px;top:1003.5px;width:14px;height:14px"></div>
<div class="t" style="left:859.5px;top:1002.5px;">Experimental</div>
<div class="btn" style="left:0;top:1033px;width:50px;height:22px;line-height:21px">Reset</div>
<div class="t" style="left:56.5px;top:1035.5px;"><b>Left-Click:</b> Rotate. <b>Middle-Click:</b> Move X/Y. <b>Right-Click/Mouse Wheel:</b> Zoom. <b>Shift:</b> More options.</div>
<div class="t" style="left:895.5px;top:1033px;">31 fps</div>
<svg class="a" style="left:944px;top:1044px" width="11" height="11"><rect x="9" y="1" width="1" height="1" fill="#b4b4b4"/><rect x="6" y="4" width="1" height="1" fill="#b4b4b4"/><rect x="9" y="4" width="1" height="1" fill="#b4b4b4"/><rect x="3" y="7" width="1" height="1" fill="#b4b4b4"/><rect x="6" y="7" width="1" height="1" fill="#b4b4b4"/><rect x="9" y="7" width="1" height="1" fill="#b4b4b4"/><rect x="0" y="10" width="1" height="1" fill="#b4b4b4"/><rect x="3" y="10" width="1" height="1" fill="#b4b4b4"/><rect x="6" y="10" width="1" height="1" fill="#b4b4b4"/><rect x="9" y="10" width="1" height="1" fill="#b4b4b4"/></svg>
<div class="a" style="left:956px;top:0;width:1px;height:1056px;background:#f00"></div>
<div class="a" style="left:957px;top:0;width:1px;height:1056px;background:#2a2a2a"></div>
<div class="t" style="left:974.5px;top:4.5px;">Parameter Reconfigure</div>
<svg class="a" style="left:959px;top:4px" width="15" height="16" ><rect x="1" y="3.2" width="10.6" height="11.6" fill="#f4f4f4" stroke="#8a8a8a" stroke-width="1"/><path d="M2.6 6.5 H10 M2.6 8.5 H10 M2.6 10.5 H8" stroke="#c8c8c8" stroke-width="0.8"/><path d="M1.6 1.2 v2.6 M3.7 1.2 v2.6 M5.8 1.2 v2.6 M7.9 1.2 v2.6 M10 1.2 v2.6" stroke="#e0b000" stroke-width="1.5" stroke-linecap="round"/><path d="M13.2 2 L14.6 3.4 L7.4 11 L5.6 11.6 L6.2 9.8 Z" fill="#e8b860" stroke="#a86808" stroke-width="0.8"/><path d="M5.6 11.6 L6 10.4 L6.8 11.2 Z" fill="#000"/></svg>
<div class="a" style="left:1844px;top:4px;width:16px;height:15px;background:#dcdcdc;border:1px solid #c4c4c4;border-radius:2px"></div>
<div class="t" style="left:1846.5px;top:4.5px;">D</div>
<div class="t" style="left:1889.5px;top:4.5px;">-</div>
<div class="t" style="left:1903.5px;top:4.5px;">O</div>
<svg class="a" style="left:1860px;top:4px" width="17" height="17"><defs><radialGradient id="qg" cx="40%" cy="30%" r="70%"><stop offset="0" stop-color="#7aa7e0"/><stop offset="1" stop-color="#2d5fae"/></radialGradient></defs><circle cx="8.2" cy="8.2" r="7.6" fill="url(#qg)" stroke="#2a4f8f" stroke-width="0.8"/><circle cx="8.2" cy="8.2" r="6.3" fill="none" stroke="#fff" stroke-width="0.8" opacity="0.9"/><text x="8.2" y="12.6" font-size="12.5" font-weight="bold" fill="#fff" text-anchor="middle" font-family="DejaVu Sans">?</text></svg>
<div class="t" style="left:976px;top:40.5px;"><u>F</u>ilter key:</div>
<div class="inp" style="left:1040px;top:37px;width:277px;height:23px;line-height:23px">tf</div>
<div class="btn" style="left:967px;top:70px;width:177px;height:23px;line-height:23px"><u>C</u>ollapse all</div>
<div class="btn" style="left:1150px;top:70px;width:176px;height:23px;line-height:23px"><u>E</u>xpand all</div>
<div class="a" style="left:967px;top:99px;width:359px;height:637px;background:#fff;border:1px solid #c0c0c0"></div>
<div class="t" style="left:991.5px;top:99.5px;">map</div>
<svg class="a" style="left:973.0px;top:102.5px" width="10" height="10"><path d="M3.2 1.2 L7.2 5 L3.2 8.8 Z" fill="#555"/></svg>
<div class="t" style="left:991.5px;top:114.5px;">sensor_kit</div>
<svg class="a" style="left:973.0px;top:117.5px" width="10" height="10"><path d="M1.2 3 L8.8 3 L5 7.2 Z" fill="#555"/></svg>
<div class="t" style="left:1011.5px;top:129.5px;">sensor_kit_base_link</div>
<svg class="a" style="left:993.0px;top:132.5px" width="10" height="10"><path d="M1.2 3 L8.8 3 L5 7.2 Z" fill="#555"/></svg>
<div class="t" style="left:1031.5px;top:144.5px;">camera0</div>
<svg class="a" style="left:1013.0px;top:147.5px" width="10" height="10"><path d="M1.2 3 L8.8 3 L5 7.2 Z" fill="#555"/></svg>
<div class="t" style="left:1051.5px;top:159.5px;">camera_link</div>
<svg class="a" style="left:1033.0px;top:162.5px" width="10" height="10"><path d="M1.2 3 L8.8 3 L5 7.2 Z" fill="#555"/></svg>
<div class="t" style="left:1071.5px;top:174.5px;">tf_broadcaster</div>
<div class="t" style="left:1031.5px;top:189.5px;">gnss_link</div>
<svg class="a" style="left:1013.0px;top:192.5px" width="10" height="10"><path d="M1.2 3 L8.8 3 L5 7.2 Z" fill="#555"/></svg>
<div class="t" style="left:1051.5px;top:204.5px;">tf_broadcaster</div>
<div class="t" style="left:1031.5px;top:219.5px;">rs_bpearl_front_base_link</div>
<svg class="a" style="left:1013.0px;top:222.5px" width="10" height="10"><path d="M1.2 3 L8.8 3 L5 7.2 Z" fill="#555"/></svg>
<div class="a" style="left:968px;top:235px;width:357px;height:15px;background:#308cc6"></div>
<div class="t" style="left:1051.5px;top:234.5px;color:#fff">tf_broadcaster</div>
<div class="t" style="left:1031.5px;top:249.5px;">rs_helios_top_base_link</div>
<svg class="a" style="left:1013.0px;top:252.5px" width="10" height="10"><path d="M1.2 3 L8.8 3 L5 7.2 Z" fill="#555"/></svg>
<div class="t" style="left:1051.5px;top:264.5px;">tf_broadcaster</div>
<div class="btn" style="left:967px;top:742px;width:359px;height:23px;line-height:23px"><u>R</u>efresh</div>
<svg class="a" style="left:1337px;top:388px" width="2" height="18"><rect y="0" x="0" width="1" height="1" fill="#bdbdbd"/><rect y="3" x="0" width="1" height="1" fill="#bdbdbd"/><rect y="6" x="0" width="1" height="1" fill="#bdbdbd"/><rect y="9" x="0" width="1" height="1" fill="#bdbdbd"/><rect y="12" x="0" width="1" height="1" fill="#bdbdbd"/><rect y="15" x="0" width="1" height="1" fill="#bdbdbd"/></svg>
<div class="a" style="left:1339px;top:19px;width:580px;height:755px;border:1px solid #bcbcbc;background:#efefef"></div>
<div class="a" style="left:1349px;top:29px;width:557px;height:735px;background:#fff"></div>
<div class="a" style="left:1349px;top:30px;width:515px;height:24px;overflow:hidden"><div class="t" style="left:-10.3px;top:3.5px;font-size:13px;font-weight:bold;text-decoration:underline;text-underline-offset:1px">/sensor_kit/sensor_kit_base_link/rs_bpearl_front_base_link/tf_broadcaster</div></div>
<div class="btn" style="left:1349px;top:32px;width:47px;height:24px"></div>
<div class="btn" style="left:1402px;top:32px;width:47px;height:24px"></div>
<div class="btn" style="left:1870px;top:29px;width:36px;height:24px"></div>
<svg class="a" style="left:1880px;top:33px" width="16" height="16"><path d="M4.2 4.4 L11.8 12 M11.8 4.4 L4.2 12" stroke="#8e8e86" stroke-width="2.7" stroke-linecap="round"/><path d="M4.2 4.4 L11.8 12 M11.8 4.4 L4.2 12" stroke="#c4c6bc" stroke-width="1" stroke-linecap="round"/></svg>
<svg class="a" style="left:1364px;top:36px" width="16" height="16" ><rect x="0.8" y="2.6" width="14.6" height="12.8" rx="0.8" fill="#f4f4f4" stroke="#7a7a7a" stroke-width="1"/><rect x="1.6" y="11" width="13" height="3.6" fill="#d4d4d4"/><path d="M3 12.8 H7 M9 12.8 H13.6" stroke="#9a9a9a" stroke-width="1.2" stroke-dasharray="1 1"/><path d="M0.6 0.8 C5 0 8.6 1 8.6 4.6 H12.6 L7.8 10 L3 4.6 H5.8 C5.8 2.6 3.6 1.8 0.6 2.2 Z" fill="#5b92cc" stroke="#2b64a4" stroke-width="0.8"/></svg>
<svg class="a" style="left:1417px;top:36px" width="16" height="16" ><path d="M0.8 3 H3 V14.6 H0.8 Z" fill="#b8b8b8" stroke="#777" stroke-width="0.8"/><path d="M4.2 0.8 H11.4 L14.4 3.8 V10 H4.2 Z" fill="#f6f6f6" stroke="#777" stroke-width="0.9"/><path d="M6 3.4 H10 M6 5.4 H10" stroke="#aaa" stroke-width="0.8"/><rect x="2.2" y="7.6" width="13.2" height="7.8" rx="0.8" fill="#8ab0e2" stroke="#2f62ad" stroke-width="1.1"/></svg>
<div class="t" style="left:1358px;top:72.0px;width:238px;overflow:hidden">child_frame</div>
<div class="inp" style="left:1602px;top:68.0px;width:300px;height:23px;line-height:23px">rs_bpearl_front_base_link</div>
<div class="t" style="left:1358px;top:101.0px;width:238px;overflow:hidden">header_frame</div>
<div class="inp" style="left:1602px;top:97.0px;width:300px;height:23px;line-height:23px">sensor_kit_base_link</div>
<div class="t" style="left:1358px;top:130.0px;width:238px;overflow:hidden">qos_overrides./clock.subscription.depth</div>
<div class="inp dis" style="left:1602px;top:126.0px;width:300px;height:23px;line-height:23px">1</div>
<div class="t" style="left:1358px;top:159.0px;width:238px;overflow:hidden">qos_overrides./clock.subscription.durability</div>
<div class="inp" style="left:1602px;top:155.0px;width:300px;height:23px;line-height:23px">volatile</div>
<div class="t" style="left:1358px;top:188.0px;width:238px;overflow:hidden">qos_overrides./clock.subscription.history</div>
<div class="inp" style="left:1602px;top:184.0px;width:300px;height:23px;line-height:23px">keep_last</div>
<div class="t" style="left:1358px;top:217.0px;width:238px;overflow:hidden">qos_overrides./clock.subscription.reliability</div>
<div class="inp" style="left:1602px;top:213.0px;width:300px;height:23px;line-height:23px">best_effort</div>
<div class="t" style="left:1358px;top:246.0px;width:238px;overflow:hidden">qos_overrides./parameter_events.publisher.depth</div>
<div class="inp dis" style="left:1602px;top:242.0px;width:300px;height:23px;line-height:23px">1000</div>
<div class="t" style="left:1358px;top:275.0px;width:238px;overflow:hidden">qos_overrides./parameter_events.publisher.durability</div>
<div class="inp" style="left:1602px;top:271.0px;width:300px;height:23px;line-height:23px">volatile</div>
<div class="t" style="left:1358px;top:304.0px;width:238px;overflow:hidden">qos_overrides./parameter_events.publisher.history</div>
<div class="inp" style="left:1602px;top:300.0px;width:300px;height:23px;line-height:23px">keep_last</div>
<div class="t" style="left:1358px;top:333.0px;width:238px;overflow:hidden">qos_overrides./parameter_events.publisher.reliability</div>
<div class="inp" style="left:1602px;top:329.0px;width:300px;height:23px;line-height:23px">reliable</div>
<div class="t" style="left:1358px;top:362.0px;width:238px;overflow:hidden">qos_overrides./tf.publisher.depth</div>
<div class="inp dis" style="left:1602px;top:358.0px;width:300px;height:23px;line-height:23px">100</div>
<div class="t" style="left:1358px;top:391.0px;width:238px;overflow:hidden">qos_overrides./tf.publisher.durability</div>
<div class="inp" style="left:1602px;top:387.0px;width:300px;height:23px;line-height:23px">volatile</div>
<div class="t" style="left:1358px;top:420.0px;width:238px;overflow:hidden">qos_overrides./tf.publisher.history</div>
<div class="inp" style="left:1602px;top:416.0px;width:300px;height:23px;line-height:23px">keep_last</div>
<div class="t" style="left:1358px;top:449.0px;width:238px;overflow:hidden">qos_overrides./tf.publisher.reliability</div>
<div class="inp" style="left:1602px;top:445.0px;width:300px;height:23px;line-height:23px">reliable</div>
<div class="t" style="left:1358px;top:478.0px;width:238px;overflow:hidden">rate</div>
<div class="inp" style="left:1602px;top:474.0px;width:300px;height:23px;line-height:23px">10.0</div>
<div class="t" style="left:1358px;top:507.0px;width:238px;overflow:hidden">tf_pitch</div>
<div class="t" style="left:1608.5px;top:507.0px;">-6.3</div>
<div class="t" style="left:1774.5px;top:507.0px;">6.3</div>
<div class="a" style="left:1639px;top:512.0px;width:128px;height:5px;border-radius:2.5px;background:linear-gradient(#c8c8c8,#e2e2e2);border:1px solid #b8b8b8"></div>
<div class="a" style="left:1639px;top:512.0px;width:64px;height:5px;border-radius:2.5px;background:linear-gradient(#2a7fc4,#4aa3e4);border:1px solid #2a76b8"></div>
<div class="a" style="left:1697px;top:508.0px;width:13px;height:13px;border-radius:3px;background:linear-gradient(#fefefe,#ececec);border:1px solid #aaa"></div>
<div class="inp" style="left:1810px;top:503.0px;width:92px;height:23px;line-height:23px">-0.0</div>
<div class="t" style="left:1358px;top:536.0px;width:238px;overflow:hidden">tf_roll</div>
<div class="t" style="left:1608.5px;top:536.0px;">-6.3</div>
<div class="t" style="left:1774.5px;top:536.0px;">6.3</div>
<div class="a" style="left:1639px;top:541.0px;width:128px;height:5px;border-radius:2.5px;background:linear-gradient(#c8c8c8,#e2e2e2);border:1px solid #b8b8b8"></div>
<div class="a" style="left:1639px;top:541.0px;width:64px;height:5px;border-radius:2.5px;background:linear-gradient(#2a7fc4,#4aa3e4);border:1px solid #2a76b8"></div>
<div class="a" style="left:1697px;top:537.0px;width:13px;height:13px;border-radius:3px;background:linear-gradient(#fefefe,#ececec);border:1px solid #aaa"></div>
<div class="inp" style="left:1810px;top:532.0px;width:92px;height:23px;line-height:23px">0.0</div>
<div class="t" style="left:1358px;top:565.0px;width:238px;overflow:hidden">tf_x</div>
<div class="inp" style="left:1602px;top:561.0px;width:300px;height:23px;line-height:23px">0.0</div>
<div class="t" style="left:1358px;top:594.0px;width:238px;overflow:hidden">tf_y</div>
<div class="inp" style="left:1602px;top:590.0px;width:300px;height:23px;line-height:23px">0.0</div>
<div class="t" style="left:1358px;top:623.0px;width:238px;overflow:hidden">tf_yaw</div>
<div class="t" style="left:1608.5px;top:623.0px;">-6.3</div>
<div class="t" style="left:1774.5px;top:623.0px;">6.3</div>
<div class="a" style="left:1639px;top:628.0px;width:128px;height:5px;border-radius:2.5px;background:linear-gradient(#c8c8c8,#e2e2e2);border:1px solid #b8b8b8"></div>
<div class="a" style="left:1639px;top:628.0px;width:64px;height:5px;border-radius:2.5px;background:linear-gradient(#2a7fc4,#4aa3e4);border:1px solid #2a76b8"></div>
<div class="a" style="left:1697px;top:624.0px;width:13px;height:13px;border-radius:3px;background:linear-gradient(#fefefe,#ececec);border:1px solid #aaa"></div>
<div class="inp" style="left:1810px;top:619.0px;width:92px;height:23px;line-height:23px">0.0</div>
<div class="t" style="left:1358px;top:652.0px;width:238px;overflow:hidden">tf_z</div>
<div class="inp" style="left:1602px;top:648.0px;width:300px;height:23px;line-height:23px">0.0</div>
<div class="t" style="left:1358px;top:681.0px;width:238px;overflow:hidden">use_sim_time</div>
<div class="cb" style="left:1602px;top:682.5px;width:14px;height:14px"></div>
<svg class="a" style="left:1602px;top:682.5px" width="14" height="14"><path d="M3.4 6.8 L4.6 6 L6 8.8 C7 6 8.6 4 10.4 2.8 L11 3.4 C9.4 5.4 8 8 7 11.2 L5.4 11.2 Z" fill="#111"/></svg>
<svg class="a" style="left:1428px;top:778px" width="18" height="2"><rect x="0" y="0" width="1" height="1" fill="#bdbdbd"/><rect x="3" y="0" width="1" height="1" fill="#bdbdbd"/><rect x="6" y="0" width="1" height="1" fill="#bdbdbd"/><rect x="9" y="0" width="1" height="1" fill="#bdbdbd"/><rect x="12" y="0" width="1" height="1" fill="#bdbdbd"/><rect x="15" y="0" width="1" height="1" fill="#bdbdbd"/></svg>
<div class="a" style="left:958px;top:783px;width:957px;height:252px;background:#fff;border-top:1px solid #bdbdbd;border-bottom:1px solid #bdbdbd"></div>
<div class="t" style="left:963px;top:787.5px;">(System message might be shown here when necessary)</div>
</body></html>
